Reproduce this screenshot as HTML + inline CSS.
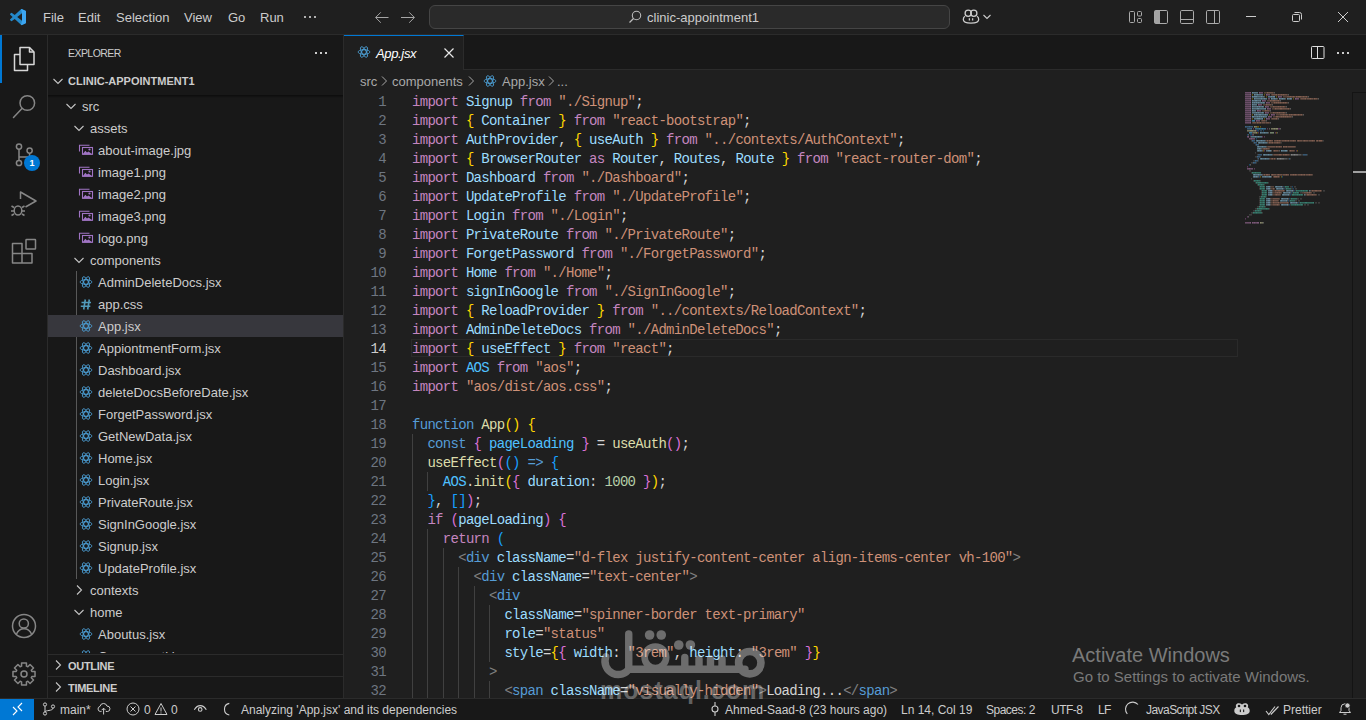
<!DOCTYPE html>
<html><head><meta charset="utf-8">
<style>
*{margin:0;padding:0;box-sizing:border-box}
html,body{width:1366px;height:720px;overflow:hidden;background:#1f1f1f;font-family:"Liberation Sans",sans-serif;color:#ccc;position:relative}
.a{position:absolute}
svg.a{overflow:visible}
#title{left:0;top:0;width:1366px;height:35px;background:#1f1f1f;border-bottom:1px solid #2b2b2b}
.menu{top:9px;font-size:13px;color:#cccccc;line-height:17px}
#act{left:0;top:35px;width:48px;height:663px;background:#181818;border-right:1px solid #2b2b2b}
#side{left:48px;top:35px;width:296px;height:663px;background:#181818;border-right:1px solid #2b2b2b}
#editor{left:344px;top:35px;width:1022px;height:663px;background:#1f1f1f}
#tabs{left:344px;top:35px;width:1022px;height:35px;background:#181818;border-bottom:1px solid #2b2b2b}
#status{left:0;top:698px;width:1366px;height:22px;background:#181818;border-top:1px solid #2b2b2b}
.st{position:absolute;top:699px;height:22px;line-height:22px;font-size:12px;color:#cccccc;white-space:nowrap}
.row{position:absolute;height:22px;font-size:13px;line-height:22px;color:#cccccc;white-space:nowrap}
.code{position:absolute;left:412px;font-family:"Liberation Mono",monospace;font-size:14px;letter-spacing:-0.703px;line-height:19px;white-space:pre;color:#d4d4d4}
.ln{position:absolute;left:343px;width:43px;text-align:right;font-family:"Liberation Mono",monospace;font-size:14px;letter-spacing:-0.703px;line-height:19px;color:#6e7681}
.ln.act{color:#cccccc}
.gd{position:absolute;width:1px;height:19px;background:#404040}
.k{color:#c586c0}.v{color:#9cdcfe}.s{color:#ce9178}.c{color:#4fc1ff}.f{color:#dcdcaa}.b{color:#569cd6}.n{color:#b5cea8}.g{color:#808080}
.y{color:#ffd700}.o{color:#da70d6}.l{color:#179fff}.t{color:#4ec9b0}
</style></head><body>
<div id="title" class="a"></div>
<!-- VS Code logo -->
<svg class="a" style="left:10px;top:9px" width="16" height="16" viewBox="0 0 100 100"><path fill="#2489ca" d="M96.5 10.8 75.9.9a6.2 6.2 0 0 0-7.1 1.2L29.4 38.1 12.2 25.1a4.1 4.1 0 0 0-5.3.2l-5.5 5a4.1 4.1 0 0 0 0 6.1L16.3 50 1.4 63.6a4.1 4.1 0 0 0 0 6.1l5.5 5a4.1 4.1 0 0 0 5.3.2l17.2-13 39.4 36a6.2 6.2 0 0 0 7.1 1.2l20.6-9.9a6.2 6.2 0 0 0 3.5-5.6V16.4a6.2 6.2 0 0 0-3.5-5.6zM75 72.7 45.1 50 75 27.3z"/><path fill="#3fa9f5" d="M75 27.3V72.7L68.8 98.9a6.2 6.2 0 0 0 7.1 1.2l20.6-9.9a6.2 6.2 0 0 0 3.5-5.6V16.4a6.2 6.2 0 0 0-3.5-5.6L75.9.9a6.2 6.2 0 0 0-7.1 1.2z" opacity=".9"/></svg>
<div class="a menu" style="left:43px">File</div>
<div class="a menu" style="left:78px">Edit</div>
<div class="a menu" style="left:116px">Selection</div>
<div class="a menu" style="left:184px">View</div>
<div class="a menu" style="left:228px">Go</div>
<div class="a menu" style="left:260px">Run</div>
<div class="a" style="left:304px;top:16px;width:2px;height:2px;background:#b0b0b0"></div><div class="a" style="left:309px;top:16px;width:2px;height:2px;background:#b0b0b0"></div><div class="a" style="left:314px;top:16px;width:2px;height:2px;background:#b0b0b0"></div>
<!-- nav arrows -->
<svg class="a" style="left:374px;top:10px" width="16" height="16" viewBox="0 0 16 16"><path d="M14.5 7.5H1.8M6.8 2.3 1.6 7.5 6.8 12.7" fill="none" stroke="#a6a6a6" stroke-width="1"/></svg>
<svg class="a" style="left:400px;top:10px" width="16" height="16" viewBox="0 0 16 16"><path d="M1 7.5H14.2M9.2 2.3 14.4 7.5 9.2 12.7" fill="none" stroke="#a6a6a6" stroke-width="1"/></svg>
<!-- command center -->
<div class="a" style="left:429px;top:5px;width:521px;height:24px;border:1px solid #454545;border-radius:6px;background:#2a2a2a"></div>
<svg class="a" style="left:627px;top:9px" width="16" height="16" viewBox="0 0 16 16"><circle cx="9.5" cy="6.5" r="4.2" fill="none" stroke="#bbb" stroke-width="1.1"/><path d="M6.5 9.5 2.5 13.5" stroke="#bbb" stroke-width="1.2"/></svg>
<div class="a" style="left:647px;top:9px;font-size:13px;line-height:17px;color:#cccccc">clinic-appointment1</div>
<!-- copilot -->
<svg class="a" style="left:0;top:0" width="1000" height="30"><g fill="none" stroke="#cccccc" stroke-width="1.3"><circle cx="968.2" cy="13.2" r="3.1"/><circle cx="973.8" cy="13.2" r="3.1"/><path d="M965 16.3C963.8 17 963.3 18.2 963.3 19.6 963.3 22.5 966.5 23.2 971 23.2S978.7 22.5 978.7 19.6C978.7 18.2 978.2 17 977 16.3"/><path d="M969.4 18.2V20.6M972.6 18.2V20.6"/><path d="M983.5 15 987 18.5 990.5 15" stroke-width="1.1"/></g></svg>
<!-- layout icons -->
<svg class="a" style="left:0;top:0" width="1366" height="35"><g fill="none" stroke="#ababab" stroke-width="1"><rect x="1129.5" y="11.5" width="5" height="11" rx="1"/><rect x="1137.5" y="11.5" width="4" height="4.5" rx="1"/><rect x="1137.5" y="18.5" width="4" height="4" rx="1"/>
<rect x="1154.5" y="10.5" width="13" height="13" rx="1.2"/><rect x="1180.5" y="10.5" width="13" height="13" rx="1.2"/><path d="M1180.5 19.5H1193.5"/><rect x="1206.5" y="10.5" width="13" height="13" rx="1.2"/><path d="M1214.5 10.5V23.5"/></g><path d="M1155.7 10.5H1160V23.5H1155.7A1.2 1.2 0 0 1 1154.5 22.3V11.7A1.2 1.2 0 0 1 1155.7 10.5Z" fill="#a3a3a3"/></svg>
<!-- window controls -->
<div class="a" style="left:1246px;top:16px;width:10px;height:1px;background:#cccccc"></div>
<svg class="a" style="left:1291px;top:11px" width="12" height="12" viewBox="0 0 12 12"><g fill="none" stroke="#cccccc" stroke-width="1"><rect x="1.5" y="3.5" width="7" height="7" rx="1"/><path d="M3.5 1.5h5a2 2 0 0 1 2 2v5"/></g></svg>
<svg class="a" style="left:1337px;top:11px" width="12" height="12" viewBox="0 0 12 12"><path d="M1 1 11 11M11 1 1 11" stroke="#cccccc" stroke-width="1"/></svg>

<div id="act" class="a"></div>
<div id="side" class="a"></div>
<div id="editor" class="a"></div>
<div id="tabs" class="a"></div>

<!-- activity bar -->
<div class="a" style="left:0;top:35px;width:2px;height:48px;background:#0078d4"></div>
<svg class="a" style="left:0;top:0" width="48" height="720"><g fill="none" stroke-width="1.5" stroke-linejoin="round">
<g stroke="#d7d7d7"><path d="M20 54.5H14.5V70.5H27.5V64.5"/><path d="M20 47.5H29.5L34 52V64.5H20Z"/><path d="M29.5 47.5V52H34"/></g>
<g stroke="#868686"><circle cx="27.3" cy="103" r="7.3"/><path d="M22 108.5 13.5 117.5" stroke-linecap="round"/>
<circle cx="19" cy="146.6" r="2.6"/><circle cx="19" cy="163" r="2.6"/><circle cx="29.6" cy="150.6" r="2.6"/><path d="M19 149.2V160.4M29.6 153.2V155.5Q29.6 157 28 157H19"/>
<path d="M20.5 199V192L36 201 25.5 207"/><ellipse cx="18" cy="210.5" rx="3.8" ry="4.5"/><path d="M14 207.5 11.5 206M14 211H11M14 214 11.5 215.5M22 207.5 24.5 206M22 211H25M22 214 24.5 215.5"/>
<path d="M12.5 243.5H22V263H12.5ZM12.5 253.5H32V263H22"/><rect x="26" y="239.5" width="9.5" height="9.5" rx="0.5"/>
<circle cx="24" cy="626" r="11.5"/><circle cx="23.8" cy="623.5" r="4.6"/><path d="M16.5 634C18 630.5 20.5 628.8 24 628.8S30 630.5 31.5 634"/>
</g></g></svg>
<div class="a" style="left:24px;top:155px;width:16px;height:16px;border-radius:8px;background:#0078d4;color:#fff;font-size:9px;line-height:16px;text-align:center;font-weight:bold">1</div>
<svg class="a" style="left:0;top:0" width="48" height="720"><g fill="none" stroke="#868686" stroke-width="1.5" stroke-linejoin="round"><path d="M21.58 666.17 L21.53 662.97 L26.47 662.97 L26.42 666.17 L27.83 666.75 L30.05 664.46 L33.54 667.95 L31.25 670.17 L31.83 671.58 L35.03 671.53 L35.03 676.47 L31.83 676.42 L31.25 677.83 L33.54 680.05 L30.05 683.54 L27.83 681.25 L26.42 681.83 L26.47 685.03 L21.53 685.03 L21.58 681.83 L20.17 681.25 L17.95 683.54 L14.46 680.05 L16.75 677.83 L16.17 676.42 L12.97 676.47 L12.97 671.53 L16.17 671.58 L16.75 670.17 L14.46 667.95 L17.95 664.46 L20.17 666.75Z"/><circle cx="24" cy="674" r="3"/></g></svg>

<!-- sidebar -->
<div class="a" style="left:68px;top:47px;font-size:10.5px;line-height:13px;letter-spacing:-0.55px;color:#cccccc">EXPLORER</div>
<div class="a" style="left:315px;top:52px;width:2px;height:2px;background:#cccccc"></div><div class="a" style="left:320px;top:52px;width:2px;height:2px;background:#cccccc"></div><div class="a" style="left:325px;top:52px;width:2px;height:2px;background:#cccccc"></div>
<svg class="a" style="left:50px;top:73px" width="16" height="16" viewBox="0 0 16 16"><path d="M3.5 6 L8 10.5 L12.5 6" fill="none" stroke="#c5c5c5" stroke-width="1.1"/></svg>
<div class="a" style="left:68px;top:74px;font-size:11px;line-height:14px;color:#cccccc;font-weight:bold">CLINIC-APPOINTMENT1</div>
<div class="a" style="left:48px;top:95px;width:295px;height:3px;background:linear-gradient(#0c0c0c,#181818)"></div>
<div class="a" style="left:76px;top:271px;width:1px;height:308px;background:#585858"></div>
<svg class="a" style="left:63px;top:98px" width="16" height="16" viewBox="0 0 16 16"><path d="M3.5 6 L8 10.5 L12.5 6" fill="none" stroke="#c5c5c5" stroke-width="1.1"/></svg>
<div class="row" style="left:82px;top:96px">src</div>
<svg class="a" style="left:71px;top:120px" width="16" height="16" viewBox="0 0 16 16"><path d="M3.5 6 L8 10.5 L12.5 6" fill="none" stroke="#c5c5c5" stroke-width="1.1"/></svg>
<div class="row" style="left:90px;top:118px">assets</div>
<svg class="a" style="left:78px;top:139px" width="16" height="22" viewBox="0 0 16 22"><g fill="none" stroke="#a074c4" stroke-width="1.1"><path d="M1.5 12.5V6.3H11.5"/><rect x="4.5" y="8.5" width="10" height="6.8"/></g><path d="M4.5 15.5 7.3 11.8 9 13.6 10.6 12.4 14.5 15.5Z" fill="#a074c4"/><circle cx="11.5" cy="10.5" r="1.1" fill="#a074c4"/></svg>
<div class="row" style="left:98px;top:140px">about-image.jpg</div>
<svg class="a" style="left:78px;top:161px" width="16" height="22" viewBox="0 0 16 22"><g fill="none" stroke="#a074c4" stroke-width="1.1"><path d="M1.5 12.5V6.3H11.5"/><rect x="4.5" y="8.5" width="10" height="6.8"/></g><path d="M4.5 15.5 7.3 11.8 9 13.6 10.6 12.4 14.5 15.5Z" fill="#a074c4"/><circle cx="11.5" cy="10.5" r="1.1" fill="#a074c4"/></svg>
<div class="row" style="left:98px;top:162px">image1.png</div>
<svg class="a" style="left:78px;top:183px" width="16" height="22" viewBox="0 0 16 22"><g fill="none" stroke="#a074c4" stroke-width="1.1"><path d="M1.5 12.5V6.3H11.5"/><rect x="4.5" y="8.5" width="10" height="6.8"/></g><path d="M4.5 15.5 7.3 11.8 9 13.6 10.6 12.4 14.5 15.5Z" fill="#a074c4"/><circle cx="11.5" cy="10.5" r="1.1" fill="#a074c4"/></svg>
<div class="row" style="left:98px;top:184px">image2.png</div>
<svg class="a" style="left:78px;top:205px" width="16" height="22" viewBox="0 0 16 22"><g fill="none" stroke="#a074c4" stroke-width="1.1"><path d="M1.5 12.5V6.3H11.5"/><rect x="4.5" y="8.5" width="10" height="6.8"/></g><path d="M4.5 15.5 7.3 11.8 9 13.6 10.6 12.4 14.5 15.5Z" fill="#a074c4"/><circle cx="11.5" cy="10.5" r="1.1" fill="#a074c4"/></svg>
<div class="row" style="left:98px;top:206px">image3.png</div>
<svg class="a" style="left:78px;top:227px" width="16" height="22" viewBox="0 0 16 22"><g fill="none" stroke="#a074c4" stroke-width="1.1"><path d="M1.5 12.5V6.3H11.5"/><rect x="4.5" y="8.5" width="10" height="6.8"/></g><path d="M4.5 15.5 7.3 11.8 9 13.6 10.6 12.4 14.5 15.5Z" fill="#a074c4"/><circle cx="11.5" cy="10.5" r="1.1" fill="#a074c4"/></svg>
<div class="row" style="left:98px;top:228px">logo.png</div>
<svg class="a" style="left:71px;top:252px" width="16" height="16" viewBox="0 0 16 16"><path d="M3.5 6 L8 10.5 L12.5 6" fill="none" stroke="#c5c5c5" stroke-width="1.1"/></svg>
<div class="row" style="left:90px;top:250px">components</div>
<svg class="a" style="left:79px;top:275px" width="14" height="14" viewBox="0 0 14 14"><g fill="none" stroke="#4a9bcf" stroke-width="0.85"><ellipse cx="7" cy="7" rx="5.9" ry="2.4"/><ellipse cx="7" cy="7" rx="5.9" ry="2.4" transform="rotate(60 7 7)"/><ellipse cx="7" cy="7" rx="5.9" ry="2.4" transform="rotate(120 7 7)"/><circle cx="7" cy="7" r="2.4"/></g></svg>
<div class="row" style="left:98px;top:272px">AdminDeleteDocs.jsx</div>
<svg class="a" style="left:80px;top:298.5px" width="14" height="14" viewBox="0 0 14 14"><path d="M5.3 0.5 3.7 10.5M9.3 0.5 7.7 10.5M1.5 3.5H11M0.8 7.3H10.3" fill="none" stroke="#519aba" stroke-width="1.6"/></svg>
<div class="row" style="left:98px;top:294px">app.css</div>
<div class="a" style="left:48px;top:315px;width:295px;height:22px;background:#37373d"></div>
<svg class="a" style="left:79px;top:319px" width="14" height="14" viewBox="0 0 14 14"><g fill="none" stroke="#4a9bcf" stroke-width="0.85"><ellipse cx="7" cy="7" rx="5.9" ry="2.4"/><ellipse cx="7" cy="7" rx="5.9" ry="2.4" transform="rotate(60 7 7)"/><ellipse cx="7" cy="7" rx="5.9" ry="2.4" transform="rotate(120 7 7)"/><circle cx="7" cy="7" r="2.4"/></g></svg>
<div class="row" style="left:98px;top:316px">App.jsx</div>
<svg class="a" style="left:79px;top:341px" width="14" height="14" viewBox="0 0 14 14"><g fill="none" stroke="#4a9bcf" stroke-width="0.85"><ellipse cx="7" cy="7" rx="5.9" ry="2.4"/><ellipse cx="7" cy="7" rx="5.9" ry="2.4" transform="rotate(60 7 7)"/><ellipse cx="7" cy="7" rx="5.9" ry="2.4" transform="rotate(120 7 7)"/><circle cx="7" cy="7" r="2.4"/></g></svg>
<div class="row" style="left:98px;top:338px">AppiontmentForm.jsx</div>
<svg class="a" style="left:79px;top:363px" width="14" height="14" viewBox="0 0 14 14"><g fill="none" stroke="#4a9bcf" stroke-width="0.85"><ellipse cx="7" cy="7" rx="5.9" ry="2.4"/><ellipse cx="7" cy="7" rx="5.9" ry="2.4" transform="rotate(60 7 7)"/><ellipse cx="7" cy="7" rx="5.9" ry="2.4" transform="rotate(120 7 7)"/><circle cx="7" cy="7" r="2.4"/></g></svg>
<div class="row" style="left:98px;top:360px">Dashboard.jsx</div>
<svg class="a" style="left:79px;top:385px" width="14" height="14" viewBox="0 0 14 14"><g fill="none" stroke="#4a9bcf" stroke-width="0.85"><ellipse cx="7" cy="7" rx="5.9" ry="2.4"/><ellipse cx="7" cy="7" rx="5.9" ry="2.4" transform="rotate(60 7 7)"/><ellipse cx="7" cy="7" rx="5.9" ry="2.4" transform="rotate(120 7 7)"/><circle cx="7" cy="7" r="2.4"/></g></svg>
<div class="row" style="left:98px;top:382px">deleteDocsBeforeDate.jsx</div>
<svg class="a" style="left:79px;top:407px" width="14" height="14" viewBox="0 0 14 14"><g fill="none" stroke="#4a9bcf" stroke-width="0.85"><ellipse cx="7" cy="7" rx="5.9" ry="2.4"/><ellipse cx="7" cy="7" rx="5.9" ry="2.4" transform="rotate(60 7 7)"/><ellipse cx="7" cy="7" rx="5.9" ry="2.4" transform="rotate(120 7 7)"/><circle cx="7" cy="7" r="2.4"/></g></svg>
<div class="row" style="left:98px;top:404px">ForgetPassword.jsx</div>
<svg class="a" style="left:79px;top:429px" width="14" height="14" viewBox="0 0 14 14"><g fill="none" stroke="#4a9bcf" stroke-width="0.85"><ellipse cx="7" cy="7" rx="5.9" ry="2.4"/><ellipse cx="7" cy="7" rx="5.9" ry="2.4" transform="rotate(60 7 7)"/><ellipse cx="7" cy="7" rx="5.9" ry="2.4" transform="rotate(120 7 7)"/><circle cx="7" cy="7" r="2.4"/></g></svg>
<div class="row" style="left:98px;top:426px">GetNewData.jsx</div>
<svg class="a" style="left:79px;top:451px" width="14" height="14" viewBox="0 0 14 14"><g fill="none" stroke="#4a9bcf" stroke-width="0.85"><ellipse cx="7" cy="7" rx="5.9" ry="2.4"/><ellipse cx="7" cy="7" rx="5.9" ry="2.4" transform="rotate(60 7 7)"/><ellipse cx="7" cy="7" rx="5.9" ry="2.4" transform="rotate(120 7 7)"/><circle cx="7" cy="7" r="2.4"/></g></svg>
<div class="row" style="left:98px;top:448px">Home.jsx</div>
<svg class="a" style="left:79px;top:473px" width="14" height="14" viewBox="0 0 14 14"><g fill="none" stroke="#4a9bcf" stroke-width="0.85"><ellipse cx="7" cy="7" rx="5.9" ry="2.4"/><ellipse cx="7" cy="7" rx="5.9" ry="2.4" transform="rotate(60 7 7)"/><ellipse cx="7" cy="7" rx="5.9" ry="2.4" transform="rotate(120 7 7)"/><circle cx="7" cy="7" r="2.4"/></g></svg>
<div class="row" style="left:98px;top:470px">Login.jsx</div>
<svg class="a" style="left:79px;top:495px" width="14" height="14" viewBox="0 0 14 14"><g fill="none" stroke="#4a9bcf" stroke-width="0.85"><ellipse cx="7" cy="7" rx="5.9" ry="2.4"/><ellipse cx="7" cy="7" rx="5.9" ry="2.4" transform="rotate(60 7 7)"/><ellipse cx="7" cy="7" rx="5.9" ry="2.4" transform="rotate(120 7 7)"/><circle cx="7" cy="7" r="2.4"/></g></svg>
<div class="row" style="left:98px;top:492px">PrivateRoute.jsx</div>
<svg class="a" style="left:79px;top:517px" width="14" height="14" viewBox="0 0 14 14"><g fill="none" stroke="#4a9bcf" stroke-width="0.85"><ellipse cx="7" cy="7" rx="5.9" ry="2.4"/><ellipse cx="7" cy="7" rx="5.9" ry="2.4" transform="rotate(60 7 7)"/><ellipse cx="7" cy="7" rx="5.9" ry="2.4" transform="rotate(120 7 7)"/><circle cx="7" cy="7" r="2.4"/></g></svg>
<div class="row" style="left:98px;top:514px">SignInGoogle.jsx</div>
<svg class="a" style="left:79px;top:539px" width="14" height="14" viewBox="0 0 14 14"><g fill="none" stroke="#4a9bcf" stroke-width="0.85"><ellipse cx="7" cy="7" rx="5.9" ry="2.4"/><ellipse cx="7" cy="7" rx="5.9" ry="2.4" transform="rotate(60 7 7)"/><ellipse cx="7" cy="7" rx="5.9" ry="2.4" transform="rotate(120 7 7)"/><circle cx="7" cy="7" r="2.4"/></g></svg>
<div class="row" style="left:98px;top:536px">Signup.jsx</div>
<svg class="a" style="left:79px;top:561px" width="14" height="14" viewBox="0 0 14 14"><g fill="none" stroke="#4a9bcf" stroke-width="0.85"><ellipse cx="7" cy="7" rx="5.9" ry="2.4"/><ellipse cx="7" cy="7" rx="5.9" ry="2.4" transform="rotate(60 7 7)"/><ellipse cx="7" cy="7" rx="5.9" ry="2.4" transform="rotate(120 7 7)"/><circle cx="7" cy="7" r="2.4"/></g></svg>
<div class="row" style="left:98px;top:558px">UpdateProfile.jsx</div>
<svg class="a" style="left:71px;top:582px" width="16" height="16" viewBox="0 0 16 16"><path d="M6 3.5 L10.5 8 L6 12.5" fill="none" stroke="#c5c5c5" stroke-width="1.1"/></svg>
<div class="row" style="left:90px;top:580px">contexts</div>
<svg class="a" style="left:71px;top:604px" width="16" height="16" viewBox="0 0 16 16"><path d="M3.5 6 L8 10.5 L12.5 6" fill="none" stroke="#c5c5c5" stroke-width="1.1"/></svg>
<div class="row" style="left:90px;top:602px">home</div>
<svg class="a" style="left:79px;top:627px" width="14" height="14" viewBox="0 0 14 14"><g fill="none" stroke="#4a9bcf" stroke-width="0.85"><ellipse cx="7" cy="7" rx="5.9" ry="2.4"/><ellipse cx="7" cy="7" rx="5.9" ry="2.4" transform="rotate(60 7 7)"/><ellipse cx="7" cy="7" rx="5.9" ry="2.4" transform="rotate(120 7 7)"/><circle cx="7" cy="7" r="2.4"/></g></svg>
<div class="row" style="left:98px;top:624px">Aboutus.jsx</div>
<svg class="a" style="left:79px;top:649px" width="14" height="14" viewBox="0 0 14 14"><g fill="none" stroke="#4a9bcf" stroke-width="0.85"><ellipse cx="7" cy="7" rx="5.9" ry="2.4"/><ellipse cx="7" cy="7" rx="5.9" ry="2.4" transform="rotate(60 7 7)"/><ellipse cx="7" cy="7" rx="5.9" ry="2.4" transform="rotate(120 7 7)"/><circle cx="7" cy="7" r="2.4"/></g></svg>
<div class="row" style="left:98px;top:646px">Componenti.jsx</div>
<div class="a" style="left:48px;top:653px;width:295px;height:45px;background:#181818"></div>
<div class="a" style="left:48px;top:654px;width:295px;height:1px;background:#2b2b2b"></div>
<div class="a" style="left:48px;top:676px;width:295px;height:1px;background:#2b2b2b"></div>
<svg class="a" style="left:50px;top:657px" width="16" height="16" viewBox="0 0 16 16"><path d="M6 3.5 L10.5 8 L6 12.5" fill="none" stroke="#c5c5c5" stroke-width="1.1"/></svg>
<div class="a" style="left:68px;top:660px;font-size:11px;line-height:13px;color:#cccccc;font-weight:bold;letter-spacing:-0.3px">OUTLINE</div>
<svg class="a" style="left:50px;top:679px" width="16" height="16" viewBox="0 0 16 16"><path d="M6 3.5 L10.5 8 L6 12.5" fill="none" stroke="#c5c5c5" stroke-width="1.1"/></svg>
<div class="a" style="left:68px;top:682px;font-size:11px;line-height:13px;color:#cccccc;font-weight:bold;letter-spacing:-0.3px">TIMELINE</div>

<!-- tab -->
<div class="a" style="left:344px;top:35px;width:120px;height:35px;background:#1f1f1f;border-top:1px solid #0078d4;border-right:1px solid #2b2b2b"></div>
<svg class="a" style="left:357px;top:45px" width="14" height="14" viewBox="0 0 14 14"><g fill="none" stroke="#4a9bcf" stroke-width="0.85"><ellipse cx="7" cy="7" rx="5.9" ry="2.4"/><ellipse cx="7" cy="7" rx="5.9" ry="2.4" transform="rotate(60 7 7)"/><ellipse cx="7" cy="7" rx="5.9" ry="2.4" transform="rotate(120 7 7)"/><circle cx="7" cy="7" r="2.4"/></g></svg>
<div class="a" style="left:376px;top:45px;font-size:13px;line-height:17px;color:#ffffff;font-style:italic;letter-spacing:-0.35px">App.jsx</div>
<svg class="a" style="left:443px;top:47px" width="12" height="12" viewBox="0 0 12 12"><path d="M1.5 1.5 10.5 10.5M10.5 1.5 1.5 10.5" stroke="#e8e8e8" stroke-width="1.2"/></svg>
<svg class="a" style="left:1310px;top:45px" width="16" height="16" viewBox="0 0 16 16"><g fill="none" stroke="#dddddd" stroke-width="1"><rect x="1.5" y="1.5" width="12.5" height="12" rx="0.8"/><path d="M7.5 1.5v12"/></g></svg>
<div class="a" style="left:1337px;top:52px;width:2px;height:2px;background:#cccccc"></div><div class="a" style="left:1342px;top:52px;width:2px;height:2px;background:#cccccc"></div><div class="a" style="left:1347px;top:52px;width:2px;height:2px;background:#cccccc"></div>

<!-- breadcrumbs -->
<div class="a" style="left:360px;top:73px;font-size:13px;line-height:17px;color:#a9a9a9;white-space:nowrap">src</div>
<svg class="a" style="left:375.5px;top:73px" width="16" height="16" viewBox="0 0 16 16"><path d="M6 3.5 L10.5 8 L6 12.5" fill="none" stroke="#a9a9a9" stroke-width="1"/></svg>
<div class="a" style="left:392px;top:73px;font-size:13px;line-height:17px;color:#a9a9a9;white-space:nowrap">components</div>
<svg class="a" style="left:463px;top:73px" width="16" height="16" viewBox="0 0 16 16"><path d="M6 3.5 L10.5 8 L6 12.5" fill="none" stroke="#a9a9a9" stroke-width="1"/></svg>
<svg class="a" style="left:483px;top:74px" width="14" height="14" viewBox="0 0 14 14"><g fill="none" stroke="#4a9bcf" stroke-width="0.85"><ellipse cx="7" cy="7" rx="5.9" ry="2.4"/><ellipse cx="7" cy="7" rx="5.9" ry="2.4" transform="rotate(60 7 7)"/><ellipse cx="7" cy="7" rx="5.9" ry="2.4" transform="rotate(120 7 7)"/><circle cx="7" cy="7" r="2.4"/></g></svg>
<div class="a" style="left:502px;top:73px;font-size:13px;line-height:17px;color:#a9a9a9;white-space:nowrap">App.jsx</div>
<svg class="a" style="left:543px;top:73px" width="16" height="16" viewBox="0 0 16 16"><path d="M6 3.5 L10.5 8 L6 12.5" fill="none" stroke="#a9a9a9" stroke-width="1"/></svg>
<div class="a" style="left:557px;top:73px;font-size:13px;line-height:17px;color:#a9a9a9;white-space:nowrap">...</div>

<!-- current line -->
<div class="a" style="left:411px;top:339px;width:827px;height:18px;border:1px solid #2a2a2a"></div>
<div class="gd" style="left:412.0px;top:434px"></div>
<div class="gd" style="left:412.0px;top:453px"></div>
<div class="gd" style="left:412.0px;top:472px"></div>
<div class="gd" style="left:427.4px;top:472px"></div>
<div class="gd" style="left:412.0px;top:491px"></div>
<div class="gd" style="left:412.0px;top:510px"></div>
<div class="gd" style="left:412.0px;top:529px"></div>
<div class="gd" style="left:427.4px;top:529px"></div>
<div class="gd" style="left:412.0px;top:548px"></div>
<div class="gd" style="left:427.4px;top:548px"></div>
<div class="gd" style="left:442.8px;top:548px"></div>
<div class="gd" style="left:412.0px;top:567px"></div>
<div class="gd" style="left:427.4px;top:567px"></div>
<div class="gd" style="left:442.8px;top:567px"></div>
<div class="gd" style="left:458.2px;top:567px"></div>
<div class="gd" style="left:412.0px;top:586px"></div>
<div class="gd" style="left:427.4px;top:586px"></div>
<div class="gd" style="left:442.8px;top:586px"></div>
<div class="gd" style="left:458.2px;top:586px"></div>
<div class="gd" style="left:473.6px;top:586px"></div>
<div class="gd" style="left:412.0px;top:605px"></div>
<div class="gd" style="left:427.4px;top:605px"></div>
<div class="gd" style="left:442.8px;top:605px"></div>
<div class="gd" style="left:458.2px;top:605px"></div>
<div class="gd" style="left:473.6px;top:605px"></div>
<div class="gd" style="left:489.0px;top:605px"></div>
<div class="gd" style="left:412.0px;top:624px"></div>
<div class="gd" style="left:427.4px;top:624px"></div>
<div class="gd" style="left:442.8px;top:624px"></div>
<div class="gd" style="left:458.2px;top:624px"></div>
<div class="gd" style="left:473.6px;top:624px"></div>
<div class="gd" style="left:489.0px;top:624px"></div>
<div class="gd" style="left:412.0px;top:643px"></div>
<div class="gd" style="left:427.4px;top:643px"></div>
<div class="gd" style="left:442.8px;top:643px"></div>
<div class="gd" style="left:458.2px;top:643px"></div>
<div class="gd" style="left:473.6px;top:643px"></div>
<div class="gd" style="left:489.0px;top:643px"></div>
<div class="gd" style="left:412.0px;top:662px"></div>
<div class="gd" style="left:427.4px;top:662px"></div>
<div class="gd" style="left:442.8px;top:662px"></div>
<div class="gd" style="left:458.2px;top:662px"></div>
<div class="gd" style="left:473.6px;top:662px"></div>
<div class="gd" style="left:412.0px;top:681px"></div>
<div class="gd" style="left:427.4px;top:681px"></div>
<div class="gd" style="left:442.8px;top:681px"></div>
<div class="gd" style="left:458.2px;top:681px"></div>
<div class="gd" style="left:473.6px;top:681px"></div>
<div class="gd" style="left:489.0px;top:681px"></div>
<div class="code" style="top:93px"><span class="k">import</span> <span class="v">Signup</span> <span class="k">from</span> <span class="s">"./Signup"</span>;</div>
<div class="ln" style="top:93px">1</div>
<div class="code" style="top:112px"><span class="k">import</span> <span class="y">{</span> <span class="v">Container</span> <span class="y">}</span> <span class="k">from</span> <span class="s">"react-bootstrap"</span>;</div>
<div class="ln" style="top:112px">2</div>
<div class="code" style="top:131px"><span class="k">import</span> <span class="v">AuthProvider</span>, <span class="y">{</span> <span class="v">useAuth</span> <span class="y">}</span> <span class="k">from</span> <span class="s">"../contexts/AuthContext"</span>;</div>
<div class="ln" style="top:131px">3</div>
<div class="code" style="top:150px"><span class="k">import</span> <span class="y">{</span> <span class="v">BrowserRouter</span> <span class="k">as</span> <span class="v">Router</span>, <span class="v">Routes</span>, <span class="v">Route</span> <span class="y">}</span> <span class="k">from</span> <span class="s">"react-router-dom"</span>;</div>
<div class="ln" style="top:150px">4</div>
<div class="code" style="top:169px"><span class="k">import</span> <span class="v">Dashboard</span> <span class="k">from</span> <span class="s">"./Dashboard"</span>;</div>
<div class="ln" style="top:169px">5</div>
<div class="code" style="top:188px"><span class="k">import</span> <span class="v">UpdateProfile</span> <span class="k">from</span> <span class="s">"./UpdateProfile"</span>;</div>
<div class="ln" style="top:188px">6</div>
<div class="code" style="top:207px"><span class="k">import</span> <span class="v">Login</span> <span class="k">from</span> <span class="s">"./Login"</span>;</div>
<div class="ln" style="top:207px">7</div>
<div class="code" style="top:226px"><span class="k">import</span> <span class="v">PrivateRoute</span> <span class="k">from</span> <span class="s">"./PrivateRoute"</span>;</div>
<div class="ln" style="top:226px">8</div>
<div class="code" style="top:245px"><span class="k">import</span> <span class="v">ForgetPassword</span> <span class="k">from</span> <span class="s">"./ForgetPassword"</span>;</div>
<div class="ln" style="top:245px">9</div>
<div class="code" style="top:264px"><span class="k">import</span> <span class="v">Home</span> <span class="k">from</span> <span class="s">"./Home"</span>;</div>
<div class="ln" style="top:264px">10</div>
<div class="code" style="top:283px"><span class="k">import</span> <span class="v">signInGoogle</span> <span class="k">from</span> <span class="s">"./SignInGoogle"</span>;</div>
<div class="ln" style="top:283px">11</div>
<div class="code" style="top:302px"><span class="k">import</span> <span class="y">{</span> <span class="v">ReloadProvider</span> <span class="y">}</span> <span class="k">from</span> <span class="s">"../contexts/ReloadContext"</span>;</div>
<div class="ln" style="top:302px">12</div>
<div class="code" style="top:321px"><span class="k">import</span> <span class="v">AdminDeleteDocs</span> <span class="k">from</span> <span class="s">"./AdminDeleteDocs"</span>;</div>
<div class="ln" style="top:321px">13</div>
<div class="code" style="top:340px"><span class="k">import</span> <span class="y">{</span> <span class="v">useEffect</span> <span class="y">}</span> <span class="k">from</span> <span class="s">"react"</span>;</div>
<div class="ln act" style="top:340px">14</div>
<div class="code" style="top:359px"><span class="k">import</span> <span class="c">AOS</span> <span class="k">from</span> <span class="s">"aos"</span>;</div>
<div class="ln" style="top:359px">15</div>
<div class="code" style="top:378px"><span class="k">import</span> <span class="s">"aos/dist/aos.css"</span>;</div>
<div class="ln" style="top:378px">16</div>
<div class="code" style="top:397px"></div>
<div class="ln" style="top:397px">17</div>
<div class="code" style="top:416px"><span class="b">function</span> <span class="f">App</span><span class="y">()</span> <span class="y">{</span></div>
<div class="ln" style="top:416px">18</div>
<div class="code" style="top:435px">  <span class="b">const</span> <span class="o">{</span> <span class="c">pageLoading</span> <span class="o">}</span> = <span class="f">useAuth</span><span class="o">()</span>;</div>
<div class="ln" style="top:435px">19</div>
<div class="code" style="top:454px">  <span class="f">useEffect</span><span class="o">(</span><span class="l">()</span> <span class="b">=&gt;</span> <span class="l">{</span></div>
<div class="ln" style="top:454px">20</div>
<div class="code" style="top:473px">    <span class="c">AOS</span>.<span class="f">init</span><span class="y">(</span><span class="o">{</span> <span class="v">duration</span>: <span class="n">1000</span> <span class="o">}</span><span class="y">)</span>;</div>
<div class="ln" style="top:473px">21</div>
<div class="code" style="top:492px">  <span class="l">}</span>, <span class="l">[]</span><span class="o">)</span>;</div>
<div class="ln" style="top:492px">22</div>
<div class="code" style="top:511px">  <span class="k">if</span> <span class="o">(</span><span class="v">pageLoading</span><span class="o">)</span> <span class="o">{</span></div>
<div class="ln" style="top:511px">23</div>
<div class="code" style="top:530px">    <span class="k">return</span> <span class="l">(</span></div>
<div class="ln" style="top:530px">24</div>
<div class="code" style="top:549px">      <span class="g">&lt;</span><span class="b">div</span> <span class="v">className</span>=<span class="s">"d-flex justify-content-center align-items-center vh-100"</span><span class="g">&gt;</span></div>
<div class="ln" style="top:549px">25</div>
<div class="code" style="top:568px">        <span class="g">&lt;</span><span class="b">div</span> <span class="v">className</span>=<span class="s">"text-center"</span><span class="g">&gt;</span></div>
<div class="ln" style="top:568px">26</div>
<div class="code" style="top:587px">          <span class="g">&lt;</span><span class="b">div</span></div>
<div class="ln" style="top:587px">27</div>
<div class="code" style="top:606px">            <span class="v">className</span>=<span class="s">"spinner-border text-primary"</span></div>
<div class="ln" style="top:606px">28</div>
<div class="code" style="top:625px">            <span class="v">role</span>=<span class="s">"status"</span></div>
<div class="ln" style="top:625px">29</div>
<div class="code" style="top:644px">            <span class="v">style</span>=<span class="y">{</span><span class="o">{</span> <span class="v">width</span>: <span class="s">"3rem"</span>, <span class="v">height</span>: <span class="s">"3rem"</span> <span class="o">}</span><span class="y">}</span></div>
<div class="ln" style="top:644px">30</div>
<div class="code" style="top:663px">          <span class="g">&gt;</span></div>
<div class="ln" style="top:663px">31</div>
<div class="code" style="top:682px">            <span class="g">&lt;</span><span class="b">span</span> <span class="v">className</span>=<span class="s">"visually-hidden"</span><span class="g">&gt;</span>Loading...<span class="g">&lt;/</span><span class="b">span</span><span class="g">&gt;</span></div>
<div class="ln" style="top:682px">32</div>
<svg class="a" style="left:1245px;top:92px" width="100" height="140" shape-rendering="crispEdges"><defs><pattern id="mmp" width="4" height="2" patternUnits="userSpaceOnUse"><rect width="4" height="1" fill="#fff"/><rect y="1" width="4" height="1" fill="#999"/></pattern><mask id="mmm"><rect width="100" height="140" fill="url(#mmp)"/></mask></defs><g mask="url(#mmm)" opacity=".9"><rect x="0" y="0" width="1" height="2" fill="#c586c0" fill-opacity="0.5"/><rect x="1" y="0" width="1" height="2" fill="#c586c0" fill-opacity="0.5"/><rect x="2" y="0" width="1" height="2" fill="#c586c0" fill-opacity="0.5"/><rect x="3" y="0" width="1" height="2" fill="#c586c0" fill-opacity="0.5"/><rect x="4" y="0" width="1" height="2" fill="#c586c0" fill-opacity="0.5"/><rect x="5" y="0" width="1" height="2" fill="#c586c0" fill-opacity="0.62"/><rect x="7" y="0" width="1" height="2" fill="#9cdcfe" fill-opacity="0.62"/><rect x="8" y="0" width="1" height="2" fill="#9cdcfe" fill-opacity="0.5"/><rect x="9" y="0" width="1" height="2" fill="#9cdcfe" fill-opacity="0.5"/><rect x="10" y="0" width="1" height="2" fill="#9cdcfe" fill-opacity="0.5"/><rect x="11" y="0" width="1" height="2" fill="#9cdcfe" fill-opacity="0.5"/><rect x="12" y="0" width="1" height="2" fill="#9cdcfe" fill-opacity="0.5"/><rect x="14" y="0" width="1" height="2" fill="#c586c0" fill-opacity="0.62"/><rect x="15" y="0" width="1" height="2" fill="#c586c0" fill-opacity="0.5"/><rect x="16" y="0" width="1" height="2" fill="#c586c0" fill-opacity="0.5"/><rect x="17" y="0" width="1" height="2" fill="#c586c0" fill-opacity="0.5"/><rect x="19" y="0" width="1" height="2" fill="#ce9178" fill-opacity="0.35"/><rect x="20" y="0" width="1" height="2" fill="#ce9178" fill-opacity="0.35"/><rect x="21" y="0" width="1" height="2" fill="#ce9178" fill-opacity="0.35"/><rect x="22" y="0" width="1" height="2" fill="#ce9178" fill-opacity="0.62"/><rect x="23" y="0" width="1" height="2" fill="#ce9178" fill-opacity="0.5"/><rect x="24" y="0" width="1" height="2" fill="#ce9178" fill-opacity="0.5"/><rect x="25" y="0" width="1" height="2" fill="#ce9178" fill-opacity="0.5"/><rect x="26" y="0" width="1" height="2" fill="#ce9178" fill-opacity="0.5"/><rect x="27" y="0" width="1" height="2" fill="#ce9178" fill-opacity="0.5"/><rect x="28" y="0" width="1" height="2" fill="#ce9178" fill-opacity="0.35"/><rect x="29" y="0" width="1" height="2" fill="#d4d4d4" fill-opacity="0.35"/><rect x="0" y="2" width="1" height="2" fill="#c586c0" fill-opacity="0.5"/><rect x="1" y="2" width="1" height="2" fill="#c586c0" fill-opacity="0.5"/><rect x="2" y="2" width="1" height="2" fill="#c586c0" fill-opacity="0.5"/><rect x="3" y="2" width="1" height="2" fill="#c586c0" fill-opacity="0.5"/><rect x="4" y="2" width="1" height="2" fill="#c586c0" fill-opacity="0.5"/><rect x="5" y="2" width="1" height="2" fill="#c586c0" fill-opacity="0.62"/><rect x="7" y="2" width="1" height="2" fill="#ffd700" fill-opacity="0.35"/><rect x="9" y="2" width="1" height="2" fill="#9cdcfe" fill-opacity="0.62"/><rect x="10" y="2" width="1" height="2" fill="#9cdcfe" fill-opacity="0.5"/><rect x="11" y="2" width="1" height="2" fill="#9cdcfe" fill-opacity="0.5"/><rect x="12" y="2" width="1" height="2" fill="#9cdcfe" fill-opacity="0.62"/><rect x="13" y="2" width="1" height="2" fill="#9cdcfe" fill-opacity="0.5"/><rect x="14" y="2" width="1" height="2" fill="#9cdcfe" fill-opacity="0.5"/><rect x="15" y="2" width="1" height="2" fill="#9cdcfe" fill-opacity="0.5"/><rect x="16" y="2" width="1" height="2" fill="#9cdcfe" fill-opacity="0.5"/><rect x="17" y="2" width="1" height="2" fill="#9cdcfe" fill-opacity="0.5"/><rect x="19" y="2" width="1" height="2" fill="#ffd700" fill-opacity="0.35"/><rect x="21" y="2" width="1" height="2" fill="#c586c0" fill-opacity="0.62"/><rect x="22" y="2" width="1" height="2" fill="#c586c0" fill-opacity="0.5"/><rect x="23" y="2" width="1" height="2" fill="#c586c0" fill-opacity="0.5"/><rect x="24" y="2" width="1" height="2" fill="#c586c0" fill-opacity="0.5"/><rect x="26" y="2" width="1" height="2" fill="#ce9178" fill-opacity="0.35"/><rect x="27" y="2" width="1" height="2" fill="#ce9178" fill-opacity="0.5"/><rect x="28" y="2" width="1" height="2" fill="#ce9178" fill-opacity="0.5"/><rect x="29" y="2" width="1" height="2" fill="#ce9178" fill-opacity="0.5"/><rect x="30" y="2" width="1" height="2" fill="#ce9178" fill-opacity="0.5"/><rect x="31" y="2" width="1" height="2" fill="#ce9178" fill-opacity="0.62"/><rect x="32" y="2" width="1" height="2" fill="#ce9178" fill-opacity="0.35"/><rect x="33" y="2" width="1" height="2" fill="#ce9178" fill-opacity="0.62"/><rect x="34" y="2" width="1" height="2" fill="#ce9178" fill-opacity="0.5"/><rect x="35" y="2" width="1" height="2" fill="#ce9178" fill-opacity="0.5"/><rect x="36" y="2" width="1" height="2" fill="#ce9178" fill-opacity="0.62"/><rect x="37" y="2" width="1" height="2" fill="#ce9178" fill-opacity="0.5"/><rect x="38" y="2" width="1" height="2" fill="#ce9178" fill-opacity="0.62"/><rect x="39" y="2" width="1" height="2" fill="#ce9178" fill-opacity="0.5"/><rect x="40" y="2" width="1" height="2" fill="#ce9178" fill-opacity="0.5"/><rect x="41" y="2" width="1" height="2" fill="#ce9178" fill-opacity="0.5"/><rect x="42" y="2" width="1" height="2" fill="#ce9178" fill-opacity="0.35"/><rect x="43" y="2" width="1" height="2" fill="#d4d4d4" fill-opacity="0.35"/><rect x="0" y="4" width="1" height="2" fill="#c586c0" fill-opacity="0.5"/><rect x="1" y="4" width="1" height="2" fill="#c586c0" fill-opacity="0.5"/><rect x="2" y="4" width="1" height="2" fill="#c586c0" fill-opacity="0.5"/><rect x="3" y="4" width="1" height="2" fill="#c586c0" fill-opacity="0.5"/><rect x="4" y="4" width="1" height="2" fill="#c586c0" fill-opacity="0.5"/><rect x="5" y="4" width="1" height="2" fill="#c586c0" fill-opacity="0.62"/><rect x="7" y="4" width="1" height="2" fill="#9cdcfe" fill-opacity="0.62"/><rect x="8" y="4" width="1" height="2" fill="#9cdcfe" fill-opacity="0.5"/><rect x="9" y="4" width="1" height="2" fill="#9cdcfe" fill-opacity="0.62"/><rect x="10" y="4" width="1" height="2" fill="#9cdcfe" fill-opacity="0.62"/><rect x="11" y="4" width="1" height="2" fill="#9cdcfe" fill-opacity="0.62"/><rect x="12" y="4" width="1" height="2" fill="#9cdcfe" fill-opacity="0.5"/><rect x="13" y="4" width="1" height="2" fill="#9cdcfe" fill-opacity="0.5"/><rect x="14" y="4" width="1" height="2" fill="#9cdcfe" fill-opacity="0.5"/><rect x="15" y="4" width="1" height="2" fill="#9cdcfe" fill-opacity="0.5"/><rect x="16" y="4" width="1" height="2" fill="#9cdcfe" fill-opacity="0.62"/><rect x="17" y="4" width="1" height="2" fill="#9cdcfe" fill-opacity="0.5"/><rect x="18" y="4" width="1" height="2" fill="#9cdcfe" fill-opacity="0.5"/><rect x="19" y="4" width="1" height="2" fill="#d4d4d4" fill-opacity="0.35"/><rect x="21" y="4" width="1" height="2" fill="#ffd700" fill-opacity="0.35"/><rect x="23" y="4" width="1" height="2" fill="#9cdcfe" fill-opacity="0.5"/><rect x="24" y="4" width="1" height="2" fill="#9cdcfe" fill-opacity="0.5"/><rect x="25" y="4" width="1" height="2" fill="#9cdcfe" fill-opacity="0.5"/><rect x="26" y="4" width="1" height="2" fill="#9cdcfe" fill-opacity="0.62"/><rect x="27" y="4" width="1" height="2" fill="#9cdcfe" fill-opacity="0.5"/><rect x="28" y="4" width="1" height="2" fill="#9cdcfe" fill-opacity="0.62"/><rect x="29" y="4" width="1" height="2" fill="#9cdcfe" fill-opacity="0.62"/><rect x="31" y="4" width="1" height="2" fill="#ffd700" fill-opacity="0.35"/><rect x="33" y="4" width="1" height="2" fill="#c586c0" fill-opacity="0.62"/><rect x="34" y="4" width="1" height="2" fill="#c586c0" fill-opacity="0.5"/><rect x="35" y="4" width="1" height="2" fill="#c586c0" fill-opacity="0.5"/><rect x="36" y="4" width="1" height="2" fill="#c586c0" fill-opacity="0.5"/><rect x="38" y="4" width="1" height="2" fill="#ce9178" fill-opacity="0.35"/><rect x="39" y="4" width="1" height="2" fill="#ce9178" fill-opacity="0.35"/><rect x="40" y="4" width="1" height="2" fill="#ce9178" fill-opacity="0.35"/><rect x="41" y="4" width="1" height="2" fill="#ce9178" fill-opacity="0.35"/><rect x="42" y="4" width="1" height="2" fill="#ce9178" fill-opacity="0.5"/><rect x="43" y="4" width="1" height="2" fill="#ce9178" fill-opacity="0.5"/><rect x="44" y="4" width="1" height="2" fill="#ce9178" fill-opacity="0.5"/><rect x="45" y="4" width="1" height="2" fill="#ce9178" fill-opacity="0.62"/><rect x="46" y="4" width="1" height="2" fill="#ce9178" fill-opacity="0.5"/><rect x="47" y="4" width="1" height="2" fill="#ce9178" fill-opacity="0.5"/><rect x="48" y="4" width="1" height="2" fill="#ce9178" fill-opacity="0.62"/><rect x="49" y="4" width="1" height="2" fill="#ce9178" fill-opacity="0.5"/><rect x="50" y="4" width="1" height="2" fill="#ce9178" fill-opacity="0.35"/><rect x="51" y="4" width="1" height="2" fill="#ce9178" fill-opacity="0.62"/><rect x="52" y="4" width="1" height="2" fill="#ce9178" fill-opacity="0.5"/><rect x="53" y="4" width="1" height="2" fill="#ce9178" fill-opacity="0.62"/><rect x="54" y="4" width="1" height="2" fill="#ce9178" fill-opacity="0.62"/><rect x="55" y="4" width="1" height="2" fill="#ce9178" fill-opacity="0.62"/><rect x="56" y="4" width="1" height="2" fill="#ce9178" fill-opacity="0.5"/><rect x="57" y="4" width="1" height="2" fill="#ce9178" fill-opacity="0.5"/><rect x="58" y="4" width="1" height="2" fill="#ce9178" fill-opacity="0.62"/><rect x="59" y="4" width="1" height="2" fill="#ce9178" fill-opacity="0.5"/><rect x="60" y="4" width="1" height="2" fill="#ce9178" fill-opacity="0.5"/><rect x="61" y="4" width="1" height="2" fill="#ce9178" fill-opacity="0.62"/><rect x="62" y="4" width="1" height="2" fill="#ce9178" fill-opacity="0.35"/><rect x="63" y="4" width="1" height="2" fill="#d4d4d4" fill-opacity="0.35"/><rect x="0" y="6" width="1" height="2" fill="#c586c0" fill-opacity="0.5"/><rect x="1" y="6" width="1" height="2" fill="#c586c0" fill-opacity="0.5"/><rect x="2" y="6" width="1" height="2" fill="#c586c0" fill-opacity="0.5"/><rect x="3" y="6" width="1" height="2" fill="#c586c0" fill-opacity="0.5"/><rect x="4" y="6" width="1" height="2" fill="#c586c0" fill-opacity="0.5"/><rect x="5" y="6" width="1" height="2" fill="#c586c0" fill-opacity="0.62"/><rect x="7" y="6" width="1" height="2" fill="#ffd700" fill-opacity="0.35"/><rect x="9" y="6" width="1" height="2" fill="#9cdcfe" fill-opacity="0.62"/><rect x="10" y="6" width="1" height="2" fill="#9cdcfe" fill-opacity="0.5"/><rect x="11" y="6" width="1" height="2" fill="#9cdcfe" fill-opacity="0.5"/><rect x="12" y="6" width="1" height="2" fill="#9cdcfe" fill-opacity="0.5"/><rect x="13" y="6" width="1" height="2" fill="#9cdcfe" fill-opacity="0.5"/><rect x="14" y="6" width="1" height="2" fill="#9cdcfe" fill-opacity="0.5"/><rect x="15" y="6" width="1" height="2" fill="#9cdcfe" fill-opacity="0.5"/><rect x="16" y="6" width="1" height="2" fill="#9cdcfe" fill-opacity="0.62"/><rect x="17" y="6" width="1" height="2" fill="#9cdcfe" fill-opacity="0.5"/><rect x="18" y="6" width="1" height="2" fill="#9cdcfe" fill-opacity="0.5"/><rect x="19" y="6" width="1" height="2" fill="#9cdcfe" fill-opacity="0.62"/><rect x="20" y="6" width="1" height="2" fill="#9cdcfe" fill-opacity="0.5"/><rect x="21" y="6" width="1" height="2" fill="#9cdcfe" fill-opacity="0.5"/><rect x="23" y="6" width="1" height="2" fill="#c586c0" fill-opacity="0.5"/><rect x="24" y="6" width="1" height="2" fill="#c586c0" fill-opacity="0.5"/><rect x="26" y="6" width="1" height="2" fill="#9cdcfe" fill-opacity="0.62"/><rect x="27" y="6" width="1" height="2" fill="#9cdcfe" fill-opacity="0.5"/><rect x="28" y="6" width="1" height="2" fill="#9cdcfe" fill-opacity="0.5"/><rect x="29" y="6" width="1" height="2" fill="#9cdcfe" fill-opacity="0.62"/><rect x="30" y="6" width="1" height="2" fill="#9cdcfe" fill-opacity="0.5"/><rect x="31" y="6" width="1" height="2" fill="#9cdcfe" fill-opacity="0.5"/><rect x="32" y="6" width="1" height="2" fill="#d4d4d4" fill-opacity="0.35"/><rect x="34" y="6" width="1" height="2" fill="#9cdcfe" fill-opacity="0.62"/><rect x="35" y="6" width="1" height="2" fill="#9cdcfe" fill-opacity="0.5"/><rect x="36" y="6" width="1" height="2" fill="#9cdcfe" fill-opacity="0.5"/><rect x="37" y="6" width="1" height="2" fill="#9cdcfe" fill-opacity="0.62"/><rect x="38" y="6" width="1" height="2" fill="#9cdcfe" fill-opacity="0.5"/><rect x="39" y="6" width="1" height="2" fill="#9cdcfe" fill-opacity="0.5"/><rect x="40" y="6" width="1" height="2" fill="#d4d4d4" fill-opacity="0.35"/><rect x="42" y="6" width="1" height="2" fill="#9cdcfe" fill-opacity="0.62"/><rect x="43" y="6" width="1" height="2" fill="#9cdcfe" fill-opacity="0.5"/><rect x="44" y="6" width="1" height="2" fill="#9cdcfe" fill-opacity="0.5"/><rect x="45" y="6" width="1" height="2" fill="#9cdcfe" fill-opacity="0.62"/><rect x="46" y="6" width="1" height="2" fill="#9cdcfe" fill-opacity="0.5"/><rect x="48" y="6" width="1" height="2" fill="#ffd700" fill-opacity="0.35"/><rect x="50" y="6" width="1" height="2" fill="#c586c0" fill-opacity="0.62"/><rect x="51" y="6" width="1" height="2" fill="#c586c0" fill-opacity="0.5"/><rect x="52" y="6" width="1" height="2" fill="#c586c0" fill-opacity="0.5"/><rect x="53" y="6" width="1" height="2" fill="#c586c0" fill-opacity="0.5"/><rect x="55" y="6" width="1" height="2" fill="#ce9178" fill-opacity="0.35"/><rect x="56" y="6" width="1" height="2" fill="#ce9178" fill-opacity="0.5"/><rect x="57" y="6" width="1" height="2" fill="#ce9178" fill-opacity="0.5"/><rect x="58" y="6" width="1" height="2" fill="#ce9178" fill-opacity="0.5"/><rect x="59" y="6" width="1" height="2" fill="#ce9178" fill-opacity="0.5"/><rect x="60" y="6" width="1" height="2" fill="#ce9178" fill-opacity="0.62"/><rect x="61" y="6" width="1" height="2" fill="#ce9178" fill-opacity="0.35"/><rect x="62" y="6" width="1" height="2" fill="#ce9178" fill-opacity="0.5"/><rect x="63" y="6" width="1" height="2" fill="#ce9178" fill-opacity="0.5"/><rect x="64" y="6" width="1" height="2" fill="#ce9178" fill-opacity="0.5"/><rect x="65" y="6" width="1" height="2" fill="#ce9178" fill-opacity="0.62"/><rect x="66" y="6" width="1" height="2" fill="#ce9178" fill-opacity="0.5"/><rect x="67" y="6" width="1" height="2" fill="#ce9178" fill-opacity="0.5"/><rect x="68" y="6" width="1" height="2" fill="#ce9178" fill-opacity="0.35"/><rect x="69" y="6" width="1" height="2" fill="#ce9178" fill-opacity="0.62"/><rect x="70" y="6" width="1" height="2" fill="#ce9178" fill-opacity="0.5"/><rect x="71" y="6" width="1" height="2" fill="#ce9178" fill-opacity="0.5"/><rect x="72" y="6" width="1" height="2" fill="#ce9178" fill-opacity="0.35"/><rect x="73" y="6" width="1" height="2" fill="#d4d4d4" fill-opacity="0.35"/><rect x="0" y="8" width="1" height="2" fill="#c586c0" fill-opacity="0.5"/><rect x="1" y="8" width="1" height="2" fill="#c586c0" fill-opacity="0.5"/><rect x="2" y="8" width="1" height="2" fill="#c586c0" fill-opacity="0.5"/><rect x="3" y="8" width="1" height="2" fill="#c586c0" fill-opacity="0.5"/><rect x="4" y="8" width="1" height="2" fill="#c586c0" fill-opacity="0.5"/><rect x="5" y="8" width="1" height="2" fill="#c586c0" fill-opacity="0.62"/><rect x="7" y="8" width="1" height="2" fill="#9cdcfe" fill-opacity="0.62"/><rect x="8" y="8" width="1" height="2" fill="#9cdcfe" fill-opacity="0.5"/><rect x="9" y="8" width="1" height="2" fill="#9cdcfe" fill-opacity="0.5"/><rect x="10" y="8" width="1" height="2" fill="#9cdcfe" fill-opacity="0.62"/><rect x="11" y="8" width="1" height="2" fill="#9cdcfe" fill-opacity="0.62"/><rect x="12" y="8" width="1" height="2" fill="#9cdcfe" fill-opacity="0.5"/><rect x="13" y="8" width="1" height="2" fill="#9cdcfe" fill-opacity="0.5"/><rect x="14" y="8" width="1" height="2" fill="#9cdcfe" fill-opacity="0.5"/><rect x="15" y="8" width="1" height="2" fill="#9cdcfe" fill-opacity="0.62"/><rect x="17" y="8" width="1" height="2" fill="#c586c0" fill-opacity="0.62"/><rect x="18" y="8" width="1" height="2" fill="#c586c0" fill-opacity="0.5"/><rect x="19" y="8" width="1" height="2" fill="#c586c0" fill-opacity="0.5"/><rect x="20" y="8" width="1" height="2" fill="#c586c0" fill-opacity="0.5"/><rect x="22" y="8" width="1" height="2" fill="#ce9178" fill-opacity="0.35"/><rect x="23" y="8" width="1" height="2" fill="#ce9178" fill-opacity="0.35"/><rect x="24" y="8" width="1" height="2" fill="#ce9178" fill-opacity="0.35"/><rect x="25" y="8" width="1" height="2" fill="#ce9178" fill-opacity="0.62"/><rect x="26" y="8" width="1" height="2" fill="#ce9178" fill-opacity="0.5"/><rect x="27" y="8" width="1" height="2" fill="#ce9178" fill-opacity="0.5"/><rect x="28" y="8" width="1" height="2" fill="#ce9178" fill-opacity="0.62"/><rect x="29" y="8" width="1" height="2" fill="#ce9178" fill-opacity="0.62"/><rect x="30" y="8" width="1" height="2" fill="#ce9178" fill-opacity="0.5"/><rect x="31" y="8" width="1" height="2" fill="#ce9178" fill-opacity="0.5"/><rect x="32" y="8" width="1" height="2" fill="#ce9178" fill-opacity="0.5"/><rect x="33" y="8" width="1" height="2" fill="#ce9178" fill-opacity="0.62"/><rect x="34" y="8" width="1" height="2" fill="#ce9178" fill-opacity="0.35"/><rect x="35" y="8" width="1" height="2" fill="#d4d4d4" fill-opacity="0.35"/><rect x="0" y="10" width="1" height="2" fill="#c586c0" fill-opacity="0.5"/><rect x="1" y="10" width="1" height="2" fill="#c586c0" fill-opacity="0.5"/><rect x="2" y="10" width="1" height="2" fill="#c586c0" fill-opacity="0.5"/><rect x="3" y="10" width="1" height="2" fill="#c586c0" fill-opacity="0.5"/><rect x="4" y="10" width="1" height="2" fill="#c586c0" fill-opacity="0.5"/><rect x="5" y="10" width="1" height="2" fill="#c586c0" fill-opacity="0.62"/><rect x="7" y="10" width="1" height="2" fill="#9cdcfe" fill-opacity="0.62"/><rect x="8" y="10" width="1" height="2" fill="#9cdcfe" fill-opacity="0.5"/><rect x="9" y="10" width="1" height="2" fill="#9cdcfe" fill-opacity="0.62"/><rect x="10" y="10" width="1" height="2" fill="#9cdcfe" fill-opacity="0.5"/><rect x="11" y="10" width="1" height="2" fill="#9cdcfe" fill-opacity="0.62"/><rect x="12" y="10" width="1" height="2" fill="#9cdcfe" fill-opacity="0.5"/><rect x="13" y="10" width="1" height="2" fill="#9cdcfe" fill-opacity="0.62"/><rect x="14" y="10" width="1" height="2" fill="#9cdcfe" fill-opacity="0.5"/><rect x="15" y="10" width="1" height="2" fill="#9cdcfe" fill-opacity="0.5"/><rect x="16" y="10" width="1" height="2" fill="#9cdcfe" fill-opacity="0.62"/><rect x="17" y="10" width="1" height="2" fill="#9cdcfe" fill-opacity="0.5"/><rect x="18" y="10" width="1" height="2" fill="#9cdcfe" fill-opacity="0.62"/><rect x="19" y="10" width="1" height="2" fill="#9cdcfe" fill-opacity="0.5"/><rect x="21" y="10" width="1" height="2" fill="#c586c0" fill-opacity="0.62"/><rect x="22" y="10" width="1" height="2" fill="#c586c0" fill-opacity="0.5"/><rect x="23" y="10" width="1" height="2" fill="#c586c0" fill-opacity="0.5"/><rect x="24" y="10" width="1" height="2" fill="#c586c0" fill-opacity="0.5"/><rect x="26" y="10" width="1" height="2" fill="#ce9178" fill-opacity="0.35"/><rect x="27" y="10" width="1" height="2" fill="#ce9178" fill-opacity="0.35"/><rect x="28" y="10" width="1" height="2" fill="#ce9178" fill-opacity="0.35"/><rect x="29" y="10" width="1" height="2" fill="#ce9178" fill-opacity="0.62"/><rect x="30" y="10" width="1" height="2" fill="#ce9178" fill-opacity="0.5"/><rect x="31" y="10" width="1" height="2" fill="#ce9178" fill-opacity="0.62"/><rect x="32" y="10" width="1" height="2" fill="#ce9178" fill-opacity="0.5"/><rect x="33" y="10" width="1" height="2" fill="#ce9178" fill-opacity="0.62"/><rect x="34" y="10" width="1" height="2" fill="#ce9178" fill-opacity="0.5"/><rect x="35" y="10" width="1" height="2" fill="#ce9178" fill-opacity="0.62"/><rect x="36" y="10" width="1" height="2" fill="#ce9178" fill-opacity="0.5"/><rect x="37" y="10" width="1" height="2" fill="#ce9178" fill-opacity="0.5"/><rect x="38" y="10" width="1" height="2" fill="#ce9178" fill-opacity="0.62"/><rect x="39" y="10" width="1" height="2" fill="#ce9178" fill-opacity="0.5"/><rect x="40" y="10" width="1" height="2" fill="#ce9178" fill-opacity="0.62"/><rect x="41" y="10" width="1" height="2" fill="#ce9178" fill-opacity="0.5"/><rect x="42" y="10" width="1" height="2" fill="#ce9178" fill-opacity="0.35"/><rect x="43" y="10" width="1" height="2" fill="#d4d4d4" fill-opacity="0.35"/><rect x="0" y="12" width="1" height="2" fill="#c586c0" fill-opacity="0.5"/><rect x="1" y="12" width="1" height="2" fill="#c586c0" fill-opacity="0.5"/><rect x="2" y="12" width="1" height="2" fill="#c586c0" fill-opacity="0.5"/><rect x="3" y="12" width="1" height="2" fill="#c586c0" fill-opacity="0.5"/><rect x="4" y="12" width="1" height="2" fill="#c586c0" fill-opacity="0.5"/><rect x="5" y="12" width="1" height="2" fill="#c586c0" fill-opacity="0.62"/><rect x="7" y="12" width="1" height="2" fill="#9cdcfe" fill-opacity="0.62"/><rect x="8" y="12" width="1" height="2" fill="#9cdcfe" fill-opacity="0.5"/><rect x="9" y="12" width="1" height="2" fill="#9cdcfe" fill-opacity="0.5"/><rect x="10" y="12" width="1" height="2" fill="#9cdcfe" fill-opacity="0.5"/><rect x="11" y="12" width="1" height="2" fill="#9cdcfe" fill-opacity="0.5"/><rect x="13" y="12" width="1" height="2" fill="#c586c0" fill-opacity="0.62"/><rect x="14" y="12" width="1" height="2" fill="#c586c0" fill-opacity="0.5"/><rect x="15" y="12" width="1" height="2" fill="#c586c0" fill-opacity="0.5"/><rect x="16" y="12" width="1" height="2" fill="#c586c0" fill-opacity="0.5"/><rect x="18" y="12" width="1" height="2" fill="#ce9178" fill-opacity="0.35"/><rect x="19" y="12" width="1" height="2" fill="#ce9178" fill-opacity="0.35"/><rect x="20" y="12" width="1" height="2" fill="#ce9178" fill-opacity="0.35"/><rect x="21" y="12" width="1" height="2" fill="#ce9178" fill-opacity="0.62"/><rect x="22" y="12" width="1" height="2" fill="#ce9178" fill-opacity="0.5"/><rect x="23" y="12" width="1" height="2" fill="#ce9178" fill-opacity="0.5"/><rect x="24" y="12" width="1" height="2" fill="#ce9178" fill-opacity="0.5"/><rect x="25" y="12" width="1" height="2" fill="#ce9178" fill-opacity="0.5"/><rect x="26" y="12" width="1" height="2" fill="#ce9178" fill-opacity="0.35"/><rect x="27" y="12" width="1" height="2" fill="#d4d4d4" fill-opacity="0.35"/><rect x="0" y="14" width="1" height="2" fill="#c586c0" fill-opacity="0.5"/><rect x="1" y="14" width="1" height="2" fill="#c586c0" fill-opacity="0.5"/><rect x="2" y="14" width="1" height="2" fill="#c586c0" fill-opacity="0.5"/><rect x="3" y="14" width="1" height="2" fill="#c586c0" fill-opacity="0.5"/><rect x="4" y="14" width="1" height="2" fill="#c586c0" fill-opacity="0.5"/><rect x="5" y="14" width="1" height="2" fill="#c586c0" fill-opacity="0.62"/><rect x="7" y="14" width="1" height="2" fill="#9cdcfe" fill-opacity="0.62"/><rect x="8" y="14" width="1" height="2" fill="#9cdcfe" fill-opacity="0.5"/><rect x="9" y="14" width="1" height="2" fill="#9cdcfe" fill-opacity="0.5"/><rect x="10" y="14" width="1" height="2" fill="#9cdcfe" fill-opacity="0.5"/><rect x="11" y="14" width="1" height="2" fill="#9cdcfe" fill-opacity="0.5"/><rect x="12" y="14" width="1" height="2" fill="#9cdcfe" fill-opacity="0.62"/><rect x="13" y="14" width="1" height="2" fill="#9cdcfe" fill-opacity="0.5"/><rect x="14" y="14" width="1" height="2" fill="#9cdcfe" fill-opacity="0.62"/><rect x="15" y="14" width="1" height="2" fill="#9cdcfe" fill-opacity="0.5"/><rect x="16" y="14" width="1" height="2" fill="#9cdcfe" fill-opacity="0.5"/><rect x="17" y="14" width="1" height="2" fill="#9cdcfe" fill-opacity="0.62"/><rect x="18" y="14" width="1" height="2" fill="#9cdcfe" fill-opacity="0.5"/><rect x="20" y="14" width="1" height="2" fill="#c586c0" fill-opacity="0.62"/><rect x="21" y="14" width="1" height="2" fill="#c586c0" fill-opacity="0.5"/><rect x="22" y="14" width="1" height="2" fill="#c586c0" fill-opacity="0.5"/><rect x="23" y="14" width="1" height="2" fill="#c586c0" fill-opacity="0.5"/><rect x="25" y="14" width="1" height="2" fill="#ce9178" fill-opacity="0.35"/><rect x="26" y="14" width="1" height="2" fill="#ce9178" fill-opacity="0.35"/><rect x="27" y="14" width="1" height="2" fill="#ce9178" fill-opacity="0.35"/><rect x="28" y="14" width="1" height="2" fill="#ce9178" fill-opacity="0.62"/><rect x="29" y="14" width="1" height="2" fill="#ce9178" fill-opacity="0.5"/><rect x="30" y="14" width="1" height="2" fill="#ce9178" fill-opacity="0.5"/><rect x="31" y="14" width="1" height="2" fill="#ce9178" fill-opacity="0.5"/><rect x="32" y="14" width="1" height="2" fill="#ce9178" fill-opacity="0.5"/><rect x="33" y="14" width="1" height="2" fill="#ce9178" fill-opacity="0.62"/><rect x="34" y="14" width="1" height="2" fill="#ce9178" fill-opacity="0.5"/><rect x="35" y="14" width="1" height="2" fill="#ce9178" fill-opacity="0.62"/><rect x="36" y="14" width="1" height="2" fill="#ce9178" fill-opacity="0.5"/><rect x="37" y="14" width="1" height="2" fill="#ce9178" fill-opacity="0.5"/><rect x="38" y="14" width="1" height="2" fill="#ce9178" fill-opacity="0.62"/><rect x="39" y="14" width="1" height="2" fill="#ce9178" fill-opacity="0.5"/><rect x="40" y="14" width="1" height="2" fill="#ce9178" fill-opacity="0.35"/><rect x="41" y="14" width="1" height="2" fill="#d4d4d4" fill-opacity="0.35"/><rect x="0" y="16" width="1" height="2" fill="#c586c0" fill-opacity="0.5"/><rect x="1" y="16" width="1" height="2" fill="#c586c0" fill-opacity="0.5"/><rect x="2" y="16" width="1" height="2" fill="#c586c0" fill-opacity="0.5"/><rect x="3" y="16" width="1" height="2" fill="#c586c0" fill-opacity="0.5"/><rect x="4" y="16" width="1" height="2" fill="#c586c0" fill-opacity="0.5"/><rect x="5" y="16" width="1" height="2" fill="#c586c0" fill-opacity="0.62"/><rect x="7" y="16" width="1" height="2" fill="#9cdcfe" fill-opacity="0.62"/><rect x="8" y="16" width="1" height="2" fill="#9cdcfe" fill-opacity="0.5"/><rect x="9" y="16" width="1" height="2" fill="#9cdcfe" fill-opacity="0.5"/><rect x="10" y="16" width="1" height="2" fill="#9cdcfe" fill-opacity="0.5"/><rect x="11" y="16" width="1" height="2" fill="#9cdcfe" fill-opacity="0.5"/><rect x="12" y="16" width="1" height="2" fill="#9cdcfe" fill-opacity="0.62"/><rect x="13" y="16" width="1" height="2" fill="#9cdcfe" fill-opacity="0.62"/><rect x="14" y="16" width="1" height="2" fill="#9cdcfe" fill-opacity="0.5"/><rect x="15" y="16" width="1" height="2" fill="#9cdcfe" fill-opacity="0.5"/><rect x="16" y="16" width="1" height="2" fill="#9cdcfe" fill-opacity="0.5"/><rect x="17" y="16" width="1" height="2" fill="#9cdcfe" fill-opacity="0.5"/><rect x="18" y="16" width="1" height="2" fill="#9cdcfe" fill-opacity="0.5"/><rect x="19" y="16" width="1" height="2" fill="#9cdcfe" fill-opacity="0.5"/><rect x="20" y="16" width="1" height="2" fill="#9cdcfe" fill-opacity="0.62"/><rect x="22" y="16" width="1" height="2" fill="#c586c0" fill-opacity="0.62"/><rect x="23" y="16" width="1" height="2" fill="#c586c0" fill-opacity="0.5"/><rect x="24" y="16" width="1" height="2" fill="#c586c0" fill-opacity="0.5"/><rect x="25" y="16" width="1" height="2" fill="#c586c0" fill-opacity="0.5"/><rect x="27" y="16" width="1" height="2" fill="#ce9178" fill-opacity="0.35"/><rect x="28" y="16" width="1" height="2" fill="#ce9178" fill-opacity="0.35"/><rect x="29" y="16" width="1" height="2" fill="#ce9178" fill-opacity="0.35"/><rect x="30" y="16" width="1" height="2" fill="#ce9178" fill-opacity="0.62"/><rect x="31" y="16" width="1" height="2" fill="#ce9178" fill-opacity="0.5"/><rect x="32" y="16" width="1" height="2" fill="#ce9178" fill-opacity="0.5"/><rect x="33" y="16" width="1" height="2" fill="#ce9178" fill-opacity="0.5"/><rect x="34" y="16" width="1" height="2" fill="#ce9178" fill-opacity="0.5"/><rect x="35" y="16" width="1" height="2" fill="#ce9178" fill-opacity="0.62"/><rect x="36" y="16" width="1" height="2" fill="#ce9178" fill-opacity="0.62"/><rect x="37" y="16" width="1" height="2" fill="#ce9178" fill-opacity="0.5"/><rect x="38" y="16" width="1" height="2" fill="#ce9178" fill-opacity="0.5"/><rect x="39" y="16" width="1" height="2" fill="#ce9178" fill-opacity="0.5"/><rect x="40" y="16" width="1" height="2" fill="#ce9178" fill-opacity="0.5"/><rect x="41" y="16" width="1" height="2" fill="#ce9178" fill-opacity="0.5"/><rect x="42" y="16" width="1" height="2" fill="#ce9178" fill-opacity="0.5"/><rect x="43" y="16" width="1" height="2" fill="#ce9178" fill-opacity="0.62"/><rect x="44" y="16" width="1" height="2" fill="#ce9178" fill-opacity="0.35"/><rect x="45" y="16" width="1" height="2" fill="#d4d4d4" fill-opacity="0.35"/><rect x="0" y="18" width="1" height="2" fill="#c586c0" fill-opacity="0.5"/><rect x="1" y="18" width="1" height="2" fill="#c586c0" fill-opacity="0.5"/><rect x="2" y="18" width="1" height="2" fill="#c586c0" fill-opacity="0.5"/><rect x="3" y="18" width="1" height="2" fill="#c586c0" fill-opacity="0.5"/><rect x="4" y="18" width="1" height="2" fill="#c586c0" fill-opacity="0.5"/><rect x="5" y="18" width="1" height="2" fill="#c586c0" fill-opacity="0.62"/><rect x="7" y="18" width="1" height="2" fill="#9cdcfe" fill-opacity="0.62"/><rect x="8" y="18" width="1" height="2" fill="#9cdcfe" fill-opacity="0.5"/><rect x="9" y="18" width="1" height="2" fill="#9cdcfe" fill-opacity="0.5"/><rect x="10" y="18" width="1" height="2" fill="#9cdcfe" fill-opacity="0.5"/><rect x="12" y="18" width="1" height="2" fill="#c586c0" fill-opacity="0.62"/><rect x="13" y="18" width="1" height="2" fill="#c586c0" fill-opacity="0.5"/><rect x="14" y="18" width="1" height="2" fill="#c586c0" fill-opacity="0.5"/><rect x="15" y="18" width="1" height="2" fill="#c586c0" fill-opacity="0.5"/><rect x="17" y="18" width="1" height="2" fill="#ce9178" fill-opacity="0.35"/><rect x="18" y="18" width="1" height="2" fill="#ce9178" fill-opacity="0.35"/><rect x="19" y="18" width="1" height="2" fill="#ce9178" fill-opacity="0.35"/><rect x="20" y="18" width="1" height="2" fill="#ce9178" fill-opacity="0.62"/><rect x="21" y="18" width="1" height="2" fill="#ce9178" fill-opacity="0.5"/><rect x="22" y="18" width="1" height="2" fill="#ce9178" fill-opacity="0.5"/><rect x="23" y="18" width="1" height="2" fill="#ce9178" fill-opacity="0.5"/><rect x="24" y="18" width="1" height="2" fill="#ce9178" fill-opacity="0.35"/><rect x="25" y="18" width="1" height="2" fill="#d4d4d4" fill-opacity="0.35"/><rect x="0" y="20" width="1" height="2" fill="#c586c0" fill-opacity="0.5"/><rect x="1" y="20" width="1" height="2" fill="#c586c0" fill-opacity="0.5"/><rect x="2" y="20" width="1" height="2" fill="#c586c0" fill-opacity="0.5"/><rect x="3" y="20" width="1" height="2" fill="#c586c0" fill-opacity="0.5"/><rect x="4" y="20" width="1" height="2" fill="#c586c0" fill-opacity="0.5"/><rect x="5" y="20" width="1" height="2" fill="#c586c0" fill-opacity="0.62"/><rect x="7" y="20" width="1" height="2" fill="#9cdcfe" fill-opacity="0.5"/><rect x="8" y="20" width="1" height="2" fill="#9cdcfe" fill-opacity="0.5"/><rect x="9" y="20" width="1" height="2" fill="#9cdcfe" fill-opacity="0.5"/><rect x="10" y="20" width="1" height="2" fill="#9cdcfe" fill-opacity="0.5"/><rect x="11" y="20" width="1" height="2" fill="#9cdcfe" fill-opacity="0.62"/><rect x="12" y="20" width="1" height="2" fill="#9cdcfe" fill-opacity="0.5"/><rect x="13" y="20" width="1" height="2" fill="#9cdcfe" fill-opacity="0.62"/><rect x="14" y="20" width="1" height="2" fill="#9cdcfe" fill-opacity="0.5"/><rect x="15" y="20" width="1" height="2" fill="#9cdcfe" fill-opacity="0.5"/><rect x="16" y="20" width="1" height="2" fill="#9cdcfe" fill-opacity="0.5"/><rect x="17" y="20" width="1" height="2" fill="#9cdcfe" fill-opacity="0.62"/><rect x="18" y="20" width="1" height="2" fill="#9cdcfe" fill-opacity="0.5"/><rect x="20" y="20" width="1" height="2" fill="#c586c0" fill-opacity="0.62"/><rect x="21" y="20" width="1" height="2" fill="#c586c0" fill-opacity="0.5"/><rect x="22" y="20" width="1" height="2" fill="#c586c0" fill-opacity="0.5"/><rect x="23" y="20" width="1" height="2" fill="#c586c0" fill-opacity="0.5"/><rect x="25" y="20" width="1" height="2" fill="#ce9178" fill-opacity="0.35"/><rect x="26" y="20" width="1" height="2" fill="#ce9178" fill-opacity="0.35"/><rect x="27" y="20" width="1" height="2" fill="#ce9178" fill-opacity="0.35"/><rect x="28" y="20" width="1" height="2" fill="#ce9178" fill-opacity="0.62"/><rect x="29" y="20" width="1" height="2" fill="#ce9178" fill-opacity="0.5"/><rect x="30" y="20" width="1" height="2" fill="#ce9178" fill-opacity="0.5"/><rect x="31" y="20" width="1" height="2" fill="#ce9178" fill-opacity="0.5"/><rect x="32" y="20" width="1" height="2" fill="#ce9178" fill-opacity="0.62"/><rect x="33" y="20" width="1" height="2" fill="#ce9178" fill-opacity="0.5"/><rect x="34" y="20" width="1" height="2" fill="#ce9178" fill-opacity="0.62"/><rect x="35" y="20" width="1" height="2" fill="#ce9178" fill-opacity="0.5"/><rect x="36" y="20" width="1" height="2" fill="#ce9178" fill-opacity="0.5"/><rect x="37" y="20" width="1" height="2" fill="#ce9178" fill-opacity="0.5"/><rect x="38" y="20" width="1" height="2" fill="#ce9178" fill-opacity="0.62"/><rect x="39" y="20" width="1" height="2" fill="#ce9178" fill-opacity="0.5"/><rect x="40" y="20" width="1" height="2" fill="#ce9178" fill-opacity="0.35"/><rect x="41" y="20" width="1" height="2" fill="#d4d4d4" fill-opacity="0.35"/><rect x="0" y="22" width="1" height="2" fill="#c586c0" fill-opacity="0.5"/><rect x="1" y="22" width="1" height="2" fill="#c586c0" fill-opacity="0.5"/><rect x="2" y="22" width="1" height="2" fill="#c586c0" fill-opacity="0.5"/><rect x="3" y="22" width="1" height="2" fill="#c586c0" fill-opacity="0.5"/><rect x="4" y="22" width="1" height="2" fill="#c586c0" fill-opacity="0.5"/><rect x="5" y="22" width="1" height="2" fill="#c586c0" fill-opacity="0.62"/><rect x="7" y="22" width="1" height="2" fill="#ffd700" fill-opacity="0.35"/><rect x="9" y="22" width="1" height="2" fill="#9cdcfe" fill-opacity="0.62"/><rect x="10" y="22" width="1" height="2" fill="#9cdcfe" fill-opacity="0.5"/><rect x="11" y="22" width="1" height="2" fill="#9cdcfe" fill-opacity="0.62"/><rect x="12" y="22" width="1" height="2" fill="#9cdcfe" fill-opacity="0.5"/><rect x="13" y="22" width="1" height="2" fill="#9cdcfe" fill-opacity="0.5"/><rect x="14" y="22" width="1" height="2" fill="#9cdcfe" fill-opacity="0.62"/><rect x="15" y="22" width="1" height="2" fill="#9cdcfe" fill-opacity="0.62"/><rect x="16" y="22" width="1" height="2" fill="#9cdcfe" fill-opacity="0.5"/><rect x="17" y="22" width="1" height="2" fill="#9cdcfe" fill-opacity="0.5"/><rect x="18" y="22" width="1" height="2" fill="#9cdcfe" fill-opacity="0.5"/><rect x="19" y="22" width="1" height="2" fill="#9cdcfe" fill-opacity="0.5"/><rect x="20" y="22" width="1" height="2" fill="#9cdcfe" fill-opacity="0.62"/><rect x="21" y="22" width="1" height="2" fill="#9cdcfe" fill-opacity="0.5"/><rect x="22" y="22" width="1" height="2" fill="#9cdcfe" fill-opacity="0.5"/><rect x="24" y="22" width="1" height="2" fill="#ffd700" fill-opacity="0.35"/><rect x="26" y="22" width="1" height="2" fill="#c586c0" fill-opacity="0.62"/><rect x="27" y="22" width="1" height="2" fill="#c586c0" fill-opacity="0.5"/><rect x="28" y="22" width="1" height="2" fill="#c586c0" fill-opacity="0.5"/><rect x="29" y="22" width="1" height="2" fill="#c586c0" fill-opacity="0.5"/><rect x="31" y="22" width="1" height="2" fill="#ce9178" fill-opacity="0.35"/><rect x="32" y="22" width="1" height="2" fill="#ce9178" fill-opacity="0.35"/><rect x="33" y="22" width="1" height="2" fill="#ce9178" fill-opacity="0.35"/><rect x="34" y="22" width="1" height="2" fill="#ce9178" fill-opacity="0.35"/><rect x="35" y="22" width="1" height="2" fill="#ce9178" fill-opacity="0.5"/><rect x="36" y="22" width="1" height="2" fill="#ce9178" fill-opacity="0.5"/><rect x="37" y="22" width="1" height="2" fill="#ce9178" fill-opacity="0.5"/><rect x="38" y="22" width="1" height="2" fill="#ce9178" fill-opacity="0.62"/><rect x="39" y="22" width="1" height="2" fill="#ce9178" fill-opacity="0.5"/><rect x="40" y="22" width="1" height="2" fill="#ce9178" fill-opacity="0.5"/><rect x="41" y="22" width="1" height="2" fill="#ce9178" fill-opacity="0.62"/><rect x="42" y="22" width="1" height="2" fill="#ce9178" fill-opacity="0.5"/><rect x="43" y="22" width="1" height="2" fill="#ce9178" fill-opacity="0.35"/><rect x="44" y="22" width="1" height="2" fill="#ce9178" fill-opacity="0.62"/><rect x="45" y="22" width="1" height="2" fill="#ce9178" fill-opacity="0.5"/><rect x="46" y="22" width="1" height="2" fill="#ce9178" fill-opacity="0.62"/><rect x="47" y="22" width="1" height="2" fill="#ce9178" fill-opacity="0.5"/><rect x="48" y="22" width="1" height="2" fill="#ce9178" fill-opacity="0.5"/><rect x="49" y="22" width="1" height="2" fill="#ce9178" fill-opacity="0.62"/><rect x="50" y="22" width="1" height="2" fill="#ce9178" fill-opacity="0.62"/><rect x="51" y="22" width="1" height="2" fill="#ce9178" fill-opacity="0.5"/><rect x="52" y="22" width="1" height="2" fill="#ce9178" fill-opacity="0.5"/><rect x="53" y="22" width="1" height="2" fill="#ce9178" fill-opacity="0.62"/><rect x="54" y="22" width="1" height="2" fill="#ce9178" fill-opacity="0.5"/><rect x="55" y="22" width="1" height="2" fill="#ce9178" fill-opacity="0.5"/><rect x="56" y="22" width="1" height="2" fill="#ce9178" fill-opacity="0.62"/><rect x="57" y="22" width="1" height="2" fill="#ce9178" fill-opacity="0.35"/><rect x="58" y="22" width="1" height="2" fill="#d4d4d4" fill-opacity="0.35"/><rect x="0" y="24" width="1" height="2" fill="#c586c0" fill-opacity="0.5"/><rect x="1" y="24" width="1" height="2" fill="#c586c0" fill-opacity="0.5"/><rect x="2" y="24" width="1" height="2" fill="#c586c0" fill-opacity="0.5"/><rect x="3" y="24" width="1" height="2" fill="#c586c0" fill-opacity="0.5"/><rect x="4" y="24" width="1" height="2" fill="#c586c0" fill-opacity="0.5"/><rect x="5" y="24" width="1" height="2" fill="#c586c0" fill-opacity="0.62"/><rect x="7" y="24" width="1" height="2" fill="#9cdcfe" fill-opacity="0.62"/><rect x="8" y="24" width="1" height="2" fill="#9cdcfe" fill-opacity="0.62"/><rect x="9" y="24" width="1" height="2" fill="#9cdcfe" fill-opacity="0.5"/><rect x="10" y="24" width="1" height="2" fill="#9cdcfe" fill-opacity="0.5"/><rect x="11" y="24" width="1" height="2" fill="#9cdcfe" fill-opacity="0.5"/><rect x="12" y="24" width="1" height="2" fill="#9cdcfe" fill-opacity="0.62"/><rect x="13" y="24" width="1" height="2" fill="#9cdcfe" fill-opacity="0.5"/><rect x="14" y="24" width="1" height="2" fill="#9cdcfe" fill-opacity="0.62"/><rect x="15" y="24" width="1" height="2" fill="#9cdcfe" fill-opacity="0.5"/><rect x="16" y="24" width="1" height="2" fill="#9cdcfe" fill-opacity="0.62"/><rect x="17" y="24" width="1" height="2" fill="#9cdcfe" fill-opacity="0.5"/><rect x="18" y="24" width="1" height="2" fill="#9cdcfe" fill-opacity="0.62"/><rect x="19" y="24" width="1" height="2" fill="#9cdcfe" fill-opacity="0.5"/><rect x="20" y="24" width="1" height="2" fill="#9cdcfe" fill-opacity="0.5"/><rect x="21" y="24" width="1" height="2" fill="#9cdcfe" fill-opacity="0.5"/><rect x="23" y="24" width="1" height="2" fill="#c586c0" fill-opacity="0.62"/><rect x="24" y="24" width="1" height="2" fill="#c586c0" fill-opacity="0.5"/><rect x="25" y="24" width="1" height="2" fill="#c586c0" fill-opacity="0.5"/><rect x="26" y="24" width="1" height="2" fill="#c586c0" fill-opacity="0.5"/><rect x="28" y="24" width="1" height="2" fill="#ce9178" fill-opacity="0.35"/><rect x="29" y="24" width="1" height="2" fill="#ce9178" fill-opacity="0.35"/><rect x="30" y="24" width="1" height="2" fill="#ce9178" fill-opacity="0.35"/><rect x="31" y="24" width="1" height="2" fill="#ce9178" fill-opacity="0.62"/><rect x="32" y="24" width="1" height="2" fill="#ce9178" fill-opacity="0.62"/><rect x="33" y="24" width="1" height="2" fill="#ce9178" fill-opacity="0.5"/><rect x="34" y="24" width="1" height="2" fill="#ce9178" fill-opacity="0.5"/><rect x="35" y="24" width="1" height="2" fill="#ce9178" fill-opacity="0.5"/><rect x="36" y="24" width="1" height="2" fill="#ce9178" fill-opacity="0.62"/><rect x="37" y="24" width="1" height="2" fill="#ce9178" fill-opacity="0.5"/><rect x="38" y="24" width="1" height="2" fill="#ce9178" fill-opacity="0.62"/><rect x="39" y="24" width="1" height="2" fill="#ce9178" fill-opacity="0.5"/><rect x="40" y="24" width="1" height="2" fill="#ce9178" fill-opacity="0.62"/><rect x="41" y="24" width="1" height="2" fill="#ce9178" fill-opacity="0.5"/><rect x="42" y="24" width="1" height="2" fill="#ce9178" fill-opacity="0.62"/><rect x="43" y="24" width="1" height="2" fill="#ce9178" fill-opacity="0.5"/><rect x="44" y="24" width="1" height="2" fill="#ce9178" fill-opacity="0.5"/><rect x="45" y="24" width="1" height="2" fill="#ce9178" fill-opacity="0.5"/><rect x="46" y="24" width="1" height="2" fill="#ce9178" fill-opacity="0.35"/><rect x="47" y="24" width="1" height="2" fill="#d4d4d4" fill-opacity="0.35"/><rect x="0" y="26" width="1" height="2" fill="#c586c0" fill-opacity="0.5"/><rect x="1" y="26" width="1" height="2" fill="#c586c0" fill-opacity="0.5"/><rect x="2" y="26" width="1" height="2" fill="#c586c0" fill-opacity="0.5"/><rect x="3" y="26" width="1" height="2" fill="#c586c0" fill-opacity="0.5"/><rect x="4" y="26" width="1" height="2" fill="#c586c0" fill-opacity="0.5"/><rect x="5" y="26" width="1" height="2" fill="#c586c0" fill-opacity="0.62"/><rect x="7" y="26" width="1" height="2" fill="#ffd700" fill-opacity="0.35"/><rect x="9" y="26" width="1" height="2" fill="#9cdcfe" fill-opacity="0.5"/><rect x="10" y="26" width="1" height="2" fill="#9cdcfe" fill-opacity="0.5"/><rect x="11" y="26" width="1" height="2" fill="#9cdcfe" fill-opacity="0.5"/><rect x="12" y="26" width="1" height="2" fill="#9cdcfe" fill-opacity="0.62"/><rect x="13" y="26" width="1" height="2" fill="#9cdcfe" fill-opacity="0.62"/><rect x="14" y="26" width="1" height="2" fill="#9cdcfe" fill-opacity="0.62"/><rect x="15" y="26" width="1" height="2" fill="#9cdcfe" fill-opacity="0.5"/><rect x="16" y="26" width="1" height="2" fill="#9cdcfe" fill-opacity="0.5"/><rect x="17" y="26" width="1" height="2" fill="#9cdcfe" fill-opacity="0.62"/><rect x="19" y="26" width="1" height="2" fill="#ffd700" fill-opacity="0.35"/><rect x="21" y="26" width="1" height="2" fill="#c586c0" fill-opacity="0.62"/><rect x="22" y="26" width="1" height="2" fill="#c586c0" fill-opacity="0.5"/><rect x="23" y="26" width="1" height="2" fill="#c586c0" fill-opacity="0.5"/><rect x="24" y="26" width="1" height="2" fill="#c586c0" fill-opacity="0.5"/><rect x="26" y="26" width="1" height="2" fill="#ce9178" fill-opacity="0.35"/><rect x="27" y="26" width="1" height="2" fill="#ce9178" fill-opacity="0.5"/><rect x="28" y="26" width="1" height="2" fill="#ce9178" fill-opacity="0.5"/><rect x="29" y="26" width="1" height="2" fill="#ce9178" fill-opacity="0.5"/><rect x="30" y="26" width="1" height="2" fill="#ce9178" fill-opacity="0.5"/><rect x="31" y="26" width="1" height="2" fill="#ce9178" fill-opacity="0.62"/><rect x="32" y="26" width="1" height="2" fill="#ce9178" fill-opacity="0.35"/><rect x="33" y="26" width="1" height="2" fill="#d4d4d4" fill-opacity="0.35"/><rect x="0" y="28" width="1" height="2" fill="#c586c0" fill-opacity="0.5"/><rect x="1" y="28" width="1" height="2" fill="#c586c0" fill-opacity="0.5"/><rect x="2" y="28" width="1" height="2" fill="#c586c0" fill-opacity="0.5"/><rect x="3" y="28" width="1" height="2" fill="#c586c0" fill-opacity="0.5"/><rect x="4" y="28" width="1" height="2" fill="#c586c0" fill-opacity="0.5"/><rect x="5" y="28" width="1" height="2" fill="#c586c0" fill-opacity="0.62"/><rect x="7" y="28" width="1" height="2" fill="#4fc1ff" fill-opacity="0.62"/><rect x="8" y="28" width="1" height="2" fill="#4fc1ff" fill-opacity="0.62"/><rect x="9" y="28" width="1" height="2" fill="#4fc1ff" fill-opacity="0.62"/><rect x="11" y="28" width="1" height="2" fill="#c586c0" fill-opacity="0.62"/><rect x="12" y="28" width="1" height="2" fill="#c586c0" fill-opacity="0.5"/><rect x="13" y="28" width="1" height="2" fill="#c586c0" fill-opacity="0.5"/><rect x="14" y="28" width="1" height="2" fill="#c586c0" fill-opacity="0.5"/><rect x="16" y="28" width="1" height="2" fill="#ce9178" fill-opacity="0.35"/><rect x="17" y="28" width="1" height="2" fill="#ce9178" fill-opacity="0.5"/><rect x="18" y="28" width="1" height="2" fill="#ce9178" fill-opacity="0.5"/><rect x="19" y="28" width="1" height="2" fill="#ce9178" fill-opacity="0.5"/><rect x="20" y="28" width="1" height="2" fill="#ce9178" fill-opacity="0.35"/><rect x="21" y="28" width="1" height="2" fill="#d4d4d4" fill-opacity="0.35"/><rect x="0" y="30" width="1" height="2" fill="#c586c0" fill-opacity="0.5"/><rect x="1" y="30" width="1" height="2" fill="#c586c0" fill-opacity="0.5"/><rect x="2" y="30" width="1" height="2" fill="#c586c0" fill-opacity="0.5"/><rect x="3" y="30" width="1" height="2" fill="#c586c0" fill-opacity="0.5"/><rect x="4" y="30" width="1" height="2" fill="#c586c0" fill-opacity="0.5"/><rect x="5" y="30" width="1" height="2" fill="#c586c0" fill-opacity="0.62"/><rect x="7" y="30" width="1" height="2" fill="#ce9178" fill-opacity="0.35"/><rect x="8" y="30" width="1" height="2" fill="#ce9178" fill-opacity="0.5"/><rect x="9" y="30" width="1" height="2" fill="#ce9178" fill-opacity="0.5"/><rect x="10" y="30" width="1" height="2" fill="#ce9178" fill-opacity="0.5"/><rect x="11" y="30" width="1" height="2" fill="#ce9178" fill-opacity="0.35"/><rect x="12" y="30" width="1" height="2" fill="#ce9178" fill-opacity="0.62"/><rect x="13" y="30" width="1" height="2" fill="#ce9178" fill-opacity="0.5"/><rect x="14" y="30" width="1" height="2" fill="#ce9178" fill-opacity="0.5"/><rect x="15" y="30" width="1" height="2" fill="#ce9178" fill-opacity="0.62"/><rect x="16" y="30" width="1" height="2" fill="#ce9178" fill-opacity="0.35"/><rect x="17" y="30" width="1" height="2" fill="#ce9178" fill-opacity="0.5"/><rect x="18" y="30" width="1" height="2" fill="#ce9178" fill-opacity="0.5"/><rect x="19" y="30" width="1" height="2" fill="#ce9178" fill-opacity="0.5"/><rect x="20" y="30" width="1" height="2" fill="#ce9178" fill-opacity="0.35"/><rect x="21" y="30" width="1" height="2" fill="#ce9178" fill-opacity="0.5"/><rect x="22" y="30" width="1" height="2" fill="#ce9178" fill-opacity="0.5"/><rect x="23" y="30" width="1" height="2" fill="#ce9178" fill-opacity="0.5"/><rect x="24" y="30" width="1" height="2" fill="#ce9178" fill-opacity="0.35"/><rect x="25" y="30" width="1" height="2" fill="#d4d4d4" fill-opacity="0.35"/><rect x="0" y="34" width="1" height="2" fill="#569cd6" fill-opacity="0.62"/><rect x="1" y="34" width="1" height="2" fill="#569cd6" fill-opacity="0.5"/><rect x="2" y="34" width="1" height="2" fill="#569cd6" fill-opacity="0.5"/><rect x="3" y="34" width="1" height="2" fill="#569cd6" fill-opacity="0.5"/><rect x="4" y="34" width="1" height="2" fill="#569cd6" fill-opacity="0.62"/><rect x="5" y="34" width="1" height="2" fill="#569cd6" fill-opacity="0.5"/><rect x="6" y="34" width="1" height="2" fill="#569cd6" fill-opacity="0.5"/><rect x="7" y="34" width="1" height="2" fill="#569cd6" fill-opacity="0.5"/><rect x="9" y="34" width="1" height="2" fill="#dcdcaa" fill-opacity="0.62"/><rect x="10" y="34" width="1" height="2" fill="#dcdcaa" fill-opacity="0.5"/><rect x="11" y="34" width="1" height="2" fill="#dcdcaa" fill-opacity="0.5"/><rect x="12" y="34" width="1" height="2" fill="#ffd700" fill-opacity="0.35"/><rect x="13" y="34" width="1" height="2" fill="#ffd700" fill-opacity="0.35"/><rect x="15" y="34" width="1" height="2" fill="#ffd700" fill-opacity="0.35"/><rect x="2" y="36" width="1" height="2" fill="#569cd6" fill-opacity="0.5"/><rect x="3" y="36" width="1" height="2" fill="#569cd6" fill-opacity="0.5"/><rect x="4" y="36" width="1" height="2" fill="#569cd6" fill-opacity="0.5"/><rect x="5" y="36" width="1" height="2" fill="#569cd6" fill-opacity="0.5"/><rect x="6" y="36" width="1" height="2" fill="#569cd6" fill-opacity="0.62"/><rect x="8" y="36" width="1" height="2" fill="#da70d6" fill-opacity="0.35"/><rect x="10" y="36" width="1" height="2" fill="#4fc1ff" fill-opacity="0.5"/><rect x="11" y="36" width="1" height="2" fill="#4fc1ff" fill-opacity="0.5"/><rect x="12" y="36" width="1" height="2" fill="#4fc1ff" fill-opacity="0.5"/><rect x="13" y="36" width="1" height="2" fill="#4fc1ff" fill-opacity="0.5"/><rect x="14" y="36" width="1" height="2" fill="#4fc1ff" fill-opacity="0.62"/><rect x="15" y="36" width="1" height="2" fill="#4fc1ff" fill-opacity="0.5"/><rect x="16" y="36" width="1" height="2" fill="#4fc1ff" fill-opacity="0.5"/><rect x="17" y="36" width="1" height="2" fill="#4fc1ff" fill-opacity="0.62"/><rect x="18" y="36" width="1" height="2" fill="#4fc1ff" fill-opacity="0.5"/><rect x="19" y="36" width="1" height="2" fill="#4fc1ff" fill-opacity="0.5"/><rect x="20" y="36" width="1" height="2" fill="#4fc1ff" fill-opacity="0.5"/><rect x="22" y="36" width="1" height="2" fill="#da70d6" fill-opacity="0.35"/><rect x="24" y="36" width="1" height="2" fill="#d4d4d4" fill-opacity="0.35"/><rect x="26" y="36" width="1" height="2" fill="#dcdcaa" fill-opacity="0.5"/><rect x="27" y="36" width="1" height="2" fill="#dcdcaa" fill-opacity="0.5"/><rect x="28" y="36" width="1" height="2" fill="#dcdcaa" fill-opacity="0.5"/><rect x="29" y="36" width="1" height="2" fill="#dcdcaa" fill-opacity="0.62"/><rect x="30" y="36" width="1" height="2" fill="#dcdcaa" fill-opacity="0.5"/><rect x="31" y="36" width="1" height="2" fill="#dcdcaa" fill-opacity="0.62"/><rect x="32" y="36" width="1" height="2" fill="#dcdcaa" fill-opacity="0.62"/><rect x="33" y="36" width="1" height="2" fill="#da70d6" fill-opacity="0.35"/><rect x="34" y="36" width="1" height="2" fill="#da70d6" fill-opacity="0.35"/><rect x="35" y="36" width="1" height="2" fill="#d4d4d4" fill-opacity="0.35"/><rect x="2" y="38" width="1" height="2" fill="#dcdcaa" fill-opacity="0.5"/><rect x="3" y="38" width="1" height="2" fill="#dcdcaa" fill-opacity="0.5"/><rect x="4" y="38" width="1" height="2" fill="#dcdcaa" fill-opacity="0.5"/><rect x="5" y="38" width="1" height="2" fill="#dcdcaa" fill-opacity="0.62"/><rect x="6" y="38" width="1" height="2" fill="#dcdcaa" fill-opacity="0.62"/><rect x="7" y="38" width="1" height="2" fill="#dcdcaa" fill-opacity="0.62"/><rect x="8" y="38" width="1" height="2" fill="#dcdcaa" fill-opacity="0.5"/><rect x="9" y="38" width="1" height="2" fill="#dcdcaa" fill-opacity="0.5"/><rect x="10" y="38" width="1" height="2" fill="#dcdcaa" fill-opacity="0.62"/><rect x="11" y="38" width="1" height="2" fill="#da70d6" fill-opacity="0.35"/><rect x="12" y="38" width="1" height="2" fill="#179fff" fill-opacity="0.35"/><rect x="13" y="38" width="1" height="2" fill="#179fff" fill-opacity="0.35"/><rect x="15" y="38" width="1" height="2" fill="#569cd6" fill-opacity="0.35"/><rect x="16" y="38" width="1" height="2" fill="#569cd6" fill-opacity="0.35"/><rect x="18" y="38" width="1" height="2" fill="#179fff" fill-opacity="0.35"/><rect x="4" y="40" width="1" height="2" fill="#4fc1ff" fill-opacity="0.62"/><rect x="5" y="40" width="1" height="2" fill="#4fc1ff" fill-opacity="0.62"/><rect x="6" y="40" width="1" height="2" fill="#4fc1ff" fill-opacity="0.62"/><rect x="7" y="40" width="1" height="2" fill="#d4d4d4" fill-opacity="0.35"/><rect x="8" y="40" width="1" height="2" fill="#dcdcaa" fill-opacity="0.5"/><rect x="9" y="40" width="1" height="2" fill="#dcdcaa" fill-opacity="0.5"/><rect x="10" y="40" width="1" height="2" fill="#dcdcaa" fill-opacity="0.5"/><rect x="11" y="40" width="1" height="2" fill="#dcdcaa" fill-opacity="0.62"/><rect x="12" y="40" width="1" height="2" fill="#ffd700" fill-opacity="0.35"/><rect x="13" y="40" width="1" height="2" fill="#da70d6" fill-opacity="0.35"/><rect x="15" y="40" width="1" height="2" fill="#9cdcfe" fill-opacity="0.62"/><rect x="16" y="40" width="1" height="2" fill="#9cdcfe" fill-opacity="0.5"/><rect x="17" y="40" width="1" height="2" fill="#9cdcfe" fill-opacity="0.5"/><rect x="18" y="40" width="1" height="2" fill="#9cdcfe" fill-opacity="0.5"/><rect x="19" y="40" width="1" height="2" fill="#9cdcfe" fill-opacity="0.62"/><rect x="20" y="40" width="1" height="2" fill="#9cdcfe" fill-opacity="0.5"/><rect x="21" y="40" width="1" height="2" fill="#9cdcfe" fill-opacity="0.5"/><rect x="22" y="40" width="1" height="2" fill="#9cdcfe" fill-opacity="0.5"/><rect x="23" y="40" width="1" height="2" fill="#d4d4d4" fill-opacity="0.35"/><rect x="25" y="40" width="1" height="2" fill="#b5cea8" fill-opacity="0.62"/><rect x="26" y="40" width="1" height="2" fill="#b5cea8" fill-opacity="0.62"/><rect x="27" y="40" width="1" height="2" fill="#b5cea8" fill-opacity="0.62"/><rect x="28" y="40" width="1" height="2" fill="#b5cea8" fill-opacity="0.62"/><rect x="30" y="40" width="1" height="2" fill="#da70d6" fill-opacity="0.35"/><rect x="31" y="40" width="1" height="2" fill="#ffd700" fill-opacity="0.35"/><rect x="32" y="40" width="1" height="2" fill="#d4d4d4" fill-opacity="0.35"/><rect x="2" y="42" width="1" height="2" fill="#179fff" fill-opacity="0.35"/><rect x="3" y="42" width="1" height="2" fill="#d4d4d4" fill-opacity="0.35"/><rect x="5" y="42" width="1" height="2" fill="#179fff" fill-opacity="0.35"/><rect x="6" y="42" width="1" height="2" fill="#179fff" fill-opacity="0.35"/><rect x="7" y="42" width="1" height="2" fill="#da70d6" fill-opacity="0.35"/><rect x="8" y="42" width="1" height="2" fill="#d4d4d4" fill-opacity="0.35"/><rect x="2" y="44" width="1" height="2" fill="#c586c0" fill-opacity="0.5"/><rect x="3" y="44" width="1" height="2" fill="#c586c0" fill-opacity="0.62"/><rect x="5" y="44" width="1" height="2" fill="#da70d6" fill-opacity="0.35"/><rect x="6" y="44" width="1" height="2" fill="#9cdcfe" fill-opacity="0.5"/><rect x="7" y="44" width="1" height="2" fill="#9cdcfe" fill-opacity="0.5"/><rect x="8" y="44" width="1" height="2" fill="#9cdcfe" fill-opacity="0.5"/><rect x="9" y="44" width="1" height="2" fill="#9cdcfe" fill-opacity="0.5"/><rect x="10" y="44" width="1" height="2" fill="#9cdcfe" fill-opacity="0.62"/><rect x="11" y="44" width="1" height="2" fill="#9cdcfe" fill-opacity="0.5"/><rect x="12" y="44" width="1" height="2" fill="#9cdcfe" fill-opacity="0.5"/><rect x="13" y="44" width="1" height="2" fill="#9cdcfe" fill-opacity="0.62"/><rect x="14" y="44" width="1" height="2" fill="#9cdcfe" fill-opacity="0.5"/><rect x="15" y="44" width="1" height="2" fill="#9cdcfe" fill-opacity="0.5"/><rect x="16" y="44" width="1" height="2" fill="#9cdcfe" fill-opacity="0.5"/><rect x="17" y="44" width="1" height="2" fill="#da70d6" fill-opacity="0.35"/><rect x="19" y="44" width="1" height="2" fill="#da70d6" fill-opacity="0.35"/><rect x="4" y="46" width="1" height="2" fill="#c586c0" fill-opacity="0.5"/><rect x="5" y="46" width="1" height="2" fill="#c586c0" fill-opacity="0.5"/><rect x="6" y="46" width="1" height="2" fill="#c586c0" fill-opacity="0.62"/><rect x="7" y="46" width="1" height="2" fill="#c586c0" fill-opacity="0.5"/><rect x="8" y="46" width="1" height="2" fill="#c586c0" fill-opacity="0.5"/><rect x="9" y="46" width="1" height="2" fill="#c586c0" fill-opacity="0.5"/><rect x="11" y="46" width="1" height="2" fill="#179fff" fill-opacity="0.35"/><rect x="6" y="48" width="1" height="2" fill="#808080" fill-opacity="0.35"/><rect x="7" y="48" width="1" height="2" fill="#569cd6" fill-opacity="0.62"/><rect x="8" y="48" width="1" height="2" fill="#569cd6" fill-opacity="0.5"/><rect x="9" y="48" width="1" height="2" fill="#569cd6" fill-opacity="0.5"/><rect x="11" y="48" width="1" height="2" fill="#9cdcfe" fill-opacity="0.5"/><rect x="12" y="48" width="1" height="2" fill="#9cdcfe" fill-opacity="0.62"/><rect x="13" y="48" width="1" height="2" fill="#9cdcfe" fill-opacity="0.5"/><rect x="14" y="48" width="1" height="2" fill="#9cdcfe" fill-opacity="0.5"/><rect x="15" y="48" width="1" height="2" fill="#9cdcfe" fill-opacity="0.5"/><rect x="16" y="48" width="1" height="2" fill="#9cdcfe" fill-opacity="0.62"/><rect x="17" y="48" width="1" height="2" fill="#9cdcfe" fill-opacity="0.5"/><rect x="18" y="48" width="1" height="2" fill="#9cdcfe" fill-opacity="0.5"/><rect x="19" y="48" width="1" height="2" fill="#9cdcfe" fill-opacity="0.5"/><rect x="20" y="48" width="1" height="2" fill="#d4d4d4" fill-opacity="0.35"/><rect x="21" y="48" width="1" height="2" fill="#ce9178" fill-opacity="0.35"/><rect x="22" y="48" width="1" height="2" fill="#ce9178" fill-opacity="0.62"/><rect x="23" y="48" width="1" height="2" fill="#ce9178" fill-opacity="0.35"/><rect x="24" y="48" width="1" height="2" fill="#ce9178" fill-opacity="0.62"/><rect x="25" y="48" width="1" height="2" fill="#ce9178" fill-opacity="0.62"/><rect x="26" y="48" width="1" height="2" fill="#ce9178" fill-opacity="0.5"/><rect x="27" y="48" width="1" height="2" fill="#ce9178" fill-opacity="0.5"/><rect x="29" y="48" width="1" height="2" fill="#ce9178" fill-opacity="0.5"/><rect x="30" y="48" width="1" height="2" fill="#ce9178" fill-opacity="0.5"/><rect x="31" y="48" width="1" height="2" fill="#ce9178" fill-opacity="0.5"/><rect x="32" y="48" width="1" height="2" fill="#ce9178" fill-opacity="0.62"/><rect x="33" y="48" width="1" height="2" fill="#ce9178" fill-opacity="0.5"/><rect x="34" y="48" width="1" height="2" fill="#ce9178" fill-opacity="0.62"/><rect x="35" y="48" width="1" height="2" fill="#ce9178" fill-opacity="0.5"/><rect x="36" y="48" width="1" height="2" fill="#ce9178" fill-opacity="0.35"/><rect x="37" y="48" width="1" height="2" fill="#ce9178" fill-opacity="0.5"/><rect x="38" y="48" width="1" height="2" fill="#ce9178" fill-opacity="0.5"/><rect x="39" y="48" width="1" height="2" fill="#ce9178" fill-opacity="0.5"/><rect x="40" y="48" width="1" height="2" fill="#ce9178" fill-opacity="0.62"/><rect x="41" y="48" width="1" height="2" fill="#ce9178" fill-opacity="0.5"/><rect x="42" y="48" width="1" height="2" fill="#ce9178" fill-opacity="0.5"/><rect x="43" y="48" width="1" height="2" fill="#ce9178" fill-opacity="0.62"/><rect x="44" y="48" width="1" height="2" fill="#ce9178" fill-opacity="0.35"/><rect x="45" y="48" width="1" height="2" fill="#ce9178" fill-opacity="0.5"/><rect x="46" y="48" width="1" height="2" fill="#ce9178" fill-opacity="0.5"/><rect x="47" y="48" width="1" height="2" fill="#ce9178" fill-opacity="0.5"/><rect x="48" y="48" width="1" height="2" fill="#ce9178" fill-opacity="0.62"/><rect x="49" y="48" width="1" height="2" fill="#ce9178" fill-opacity="0.5"/><rect x="50" y="48" width="1" height="2" fill="#ce9178" fill-opacity="0.5"/><rect x="52" y="48" width="1" height="2" fill="#ce9178" fill-opacity="0.5"/><rect x="53" y="48" width="1" height="2" fill="#ce9178" fill-opacity="0.62"/><rect x="54" y="48" width="1" height="2" fill="#ce9178" fill-opacity="0.5"/><rect x="55" y="48" width="1" height="2" fill="#ce9178" fill-opacity="0.5"/><rect x="56" y="48" width="1" height="2" fill="#ce9178" fill-opacity="0.5"/><rect x="57" y="48" width="1" height="2" fill="#ce9178" fill-opacity="0.35"/><rect x="58" y="48" width="1" height="2" fill="#ce9178" fill-opacity="0.5"/><rect x="59" y="48" width="1" height="2" fill="#ce9178" fill-opacity="0.62"/><rect x="60" y="48" width="1" height="2" fill="#ce9178" fill-opacity="0.5"/><rect x="61" y="48" width="1" height="2" fill="#ce9178" fill-opacity="0.5"/><rect x="62" y="48" width="1" height="2" fill="#ce9178" fill-opacity="0.5"/><rect x="63" y="48" width="1" height="2" fill="#ce9178" fill-opacity="0.35"/><rect x="64" y="48" width="1" height="2" fill="#ce9178" fill-opacity="0.5"/><rect x="65" y="48" width="1" height="2" fill="#ce9178" fill-opacity="0.5"/><rect x="66" y="48" width="1" height="2" fill="#ce9178" fill-opacity="0.5"/><rect x="67" y="48" width="1" height="2" fill="#ce9178" fill-opacity="0.62"/><rect x="68" y="48" width="1" height="2" fill="#ce9178" fill-opacity="0.5"/><rect x="69" y="48" width="1" height="2" fill="#ce9178" fill-opacity="0.5"/><rect x="71" y="48" width="1" height="2" fill="#ce9178" fill-opacity="0.5"/><rect x="72" y="48" width="1" height="2" fill="#ce9178" fill-opacity="0.62"/><rect x="73" y="48" width="1" height="2" fill="#ce9178" fill-opacity="0.35"/><rect x="74" y="48" width="1" height="2" fill="#ce9178" fill-opacity="0.62"/><rect x="75" y="48" width="1" height="2" fill="#ce9178" fill-opacity="0.62"/><rect x="76" y="48" width="1" height="2" fill="#ce9178" fill-opacity="0.62"/><rect x="77" y="48" width="1" height="2" fill="#ce9178" fill-opacity="0.35"/><rect x="78" y="48" width="1" height="2" fill="#808080" fill-opacity="0.35"/><rect x="8" y="50" width="1" height="2" fill="#808080" fill-opacity="0.35"/><rect x="9" y="50" width="1" height="2" fill="#569cd6" fill-opacity="0.62"/><rect x="10" y="50" width="1" height="2" fill="#569cd6" fill-opacity="0.5"/><rect x="11" y="50" width="1" height="2" fill="#569cd6" fill-opacity="0.5"/><rect x="13" y="50" width="1" height="2" fill="#9cdcfe" fill-opacity="0.5"/><rect x="14" y="50" width="1" height="2" fill="#9cdcfe" fill-opacity="0.62"/><rect x="15" y="50" width="1" height="2" fill="#9cdcfe" fill-opacity="0.5"/><rect x="16" y="50" width="1" height="2" fill="#9cdcfe" fill-opacity="0.5"/><rect x="17" y="50" width="1" height="2" fill="#9cdcfe" fill-opacity="0.5"/><rect x="18" y="50" width="1" height="2" fill="#9cdcfe" fill-opacity="0.62"/><rect x="19" y="50" width="1" height="2" fill="#9cdcfe" fill-opacity="0.5"/><rect x="20" y="50" width="1" height="2" fill="#9cdcfe" fill-opacity="0.5"/><rect x="21" y="50" width="1" height="2" fill="#9cdcfe" fill-opacity="0.5"/><rect x="22" y="50" width="1" height="2" fill="#d4d4d4" fill-opacity="0.35"/><rect x="23" y="50" width="1" height="2" fill="#ce9178" fill-opacity="0.35"/><rect x="24" y="50" width="1" height="2" fill="#ce9178" fill-opacity="0.62"/><rect x="25" y="50" width="1" height="2" fill="#ce9178" fill-opacity="0.5"/><rect x="26" y="50" width="1" height="2" fill="#ce9178" fill-opacity="0.5"/><rect x="27" y="50" width="1" height="2" fill="#ce9178" fill-opacity="0.62"/><rect x="28" y="50" width="1" height="2" fill="#ce9178" fill-opacity="0.35"/><rect x="29" y="50" width="1" height="2" fill="#ce9178" fill-opacity="0.5"/><rect x="30" y="50" width="1" height="2" fill="#ce9178" fill-opacity="0.5"/><rect x="31" y="50" width="1" height="2" fill="#ce9178" fill-opacity="0.5"/><rect x="32" y="50" width="1" height="2" fill="#ce9178" fill-opacity="0.62"/><rect x="33" y="50" width="1" height="2" fill="#ce9178" fill-opacity="0.5"/><rect x="34" y="50" width="1" height="2" fill="#ce9178" fill-opacity="0.5"/><rect x="35" y="50" width="1" height="2" fill="#ce9178" fill-opacity="0.35"/><rect x="36" y="50" width="1" height="2" fill="#808080" fill-opacity="0.35"/><rect x="10" y="52" width="1" height="2" fill="#808080" fill-opacity="0.35"/><rect x="11" y="52" width="1" height="2" fill="#569cd6" fill-opacity="0.62"/><rect x="12" y="52" width="1" height="2" fill="#569cd6" fill-opacity="0.5"/><rect x="13" y="52" width="1" height="2" fill="#569cd6" fill-opacity="0.5"/><rect x="12" y="54" width="1" height="2" fill="#9cdcfe" fill-opacity="0.5"/><rect x="13" y="54" width="1" height="2" fill="#9cdcfe" fill-opacity="0.62"/><rect x="14" y="54" width="1" height="2" fill="#9cdcfe" fill-opacity="0.5"/><rect x="15" y="54" width="1" height="2" fill="#9cdcfe" fill-opacity="0.5"/><rect x="16" y="54" width="1" height="2" fill="#9cdcfe" fill-opacity="0.5"/><rect x="17" y="54" width="1" height="2" fill="#9cdcfe" fill-opacity="0.62"/><rect x="18" y="54" width="1" height="2" fill="#9cdcfe" fill-opacity="0.5"/><rect x="19" y="54" width="1" height="2" fill="#9cdcfe" fill-opacity="0.5"/><rect x="20" y="54" width="1" height="2" fill="#9cdcfe" fill-opacity="0.5"/><rect x="21" y="54" width="1" height="2" fill="#d4d4d4" fill-opacity="0.35"/><rect x="22" y="54" width="1" height="2" fill="#ce9178" fill-opacity="0.35"/><rect x="23" y="54" width="1" height="2" fill="#ce9178" fill-opacity="0.5"/><rect x="24" y="54" width="1" height="2" fill="#ce9178" fill-opacity="0.5"/><rect x="25" y="54" width="1" height="2" fill="#ce9178" fill-opacity="0.5"/><rect x="26" y="54" width="1" height="2" fill="#ce9178" fill-opacity="0.5"/><rect x="27" y="54" width="1" height="2" fill="#ce9178" fill-opacity="0.5"/><rect x="28" y="54" width="1" height="2" fill="#ce9178" fill-opacity="0.5"/><rect x="29" y="54" width="1" height="2" fill="#ce9178" fill-opacity="0.5"/><rect x="30" y="54" width="1" height="2" fill="#ce9178" fill-opacity="0.35"/><rect x="31" y="54" width="1" height="2" fill="#ce9178" fill-opacity="0.62"/><rect x="32" y="54" width="1" height="2" fill="#ce9178" fill-opacity="0.5"/><rect x="33" y="54" width="1" height="2" fill="#ce9178" fill-opacity="0.5"/><rect x="34" y="54" width="1" height="2" fill="#ce9178" fill-opacity="0.62"/><rect x="35" y="54" width="1" height="2" fill="#ce9178" fill-opacity="0.5"/><rect x="36" y="54" width="1" height="2" fill="#ce9178" fill-opacity="0.5"/><rect x="38" y="54" width="1" height="2" fill="#ce9178" fill-opacity="0.62"/><rect x="39" y="54" width="1" height="2" fill="#ce9178" fill-opacity="0.5"/><rect x="40" y="54" width="1" height="2" fill="#ce9178" fill-opacity="0.5"/><rect x="41" y="54" width="1" height="2" fill="#ce9178" fill-opacity="0.62"/><rect x="42" y="54" width="1" height="2" fill="#ce9178" fill-opacity="0.35"/><rect x="43" y="54" width="1" height="2" fill="#ce9178" fill-opacity="0.5"/><rect x="44" y="54" width="1" height="2" fill="#ce9178" fill-opacity="0.5"/><rect x="45" y="54" width="1" height="2" fill="#ce9178" fill-opacity="0.5"/><rect x="46" y="54" width="1" height="2" fill="#ce9178" fill-opacity="0.5"/><rect x="47" y="54" width="1" height="2" fill="#ce9178" fill-opacity="0.5"/><rect x="48" y="54" width="1" height="2" fill="#ce9178" fill-opacity="0.5"/><rect x="49" y="54" width="1" height="2" fill="#ce9178" fill-opacity="0.5"/><rect x="50" y="54" width="1" height="2" fill="#ce9178" fill-opacity="0.35"/><rect x="12" y="56" width="1" height="2" fill="#9cdcfe" fill-opacity="0.5"/><rect x="13" y="56" width="1" height="2" fill="#9cdcfe" fill-opacity="0.5"/><rect x="14" y="56" width="1" height="2" fill="#9cdcfe" fill-opacity="0.62"/><rect x="15" y="56" width="1" height="2" fill="#9cdcfe" fill-opacity="0.5"/><rect x="16" y="56" width="1" height="2" fill="#d4d4d4" fill-opacity="0.35"/><rect x="17" y="56" width="1" height="2" fill="#ce9178" fill-opacity="0.35"/><rect x="18" y="56" width="1" height="2" fill="#ce9178" fill-opacity="0.5"/><rect x="19" y="56" width="1" height="2" fill="#ce9178" fill-opacity="0.62"/><rect x="20" y="56" width="1" height="2" fill="#ce9178" fill-opacity="0.5"/><rect x="21" y="56" width="1" height="2" fill="#ce9178" fill-opacity="0.62"/><rect x="22" y="56" width="1" height="2" fill="#ce9178" fill-opacity="0.5"/><rect x="23" y="56" width="1" height="2" fill="#ce9178" fill-opacity="0.5"/><rect x="24" y="56" width="1" height="2" fill="#ce9178" fill-opacity="0.35"/><rect x="12" y="58" width="1" height="2" fill="#9cdcfe" fill-opacity="0.5"/><rect x="13" y="58" width="1" height="2" fill="#9cdcfe" fill-opacity="0.62"/><rect x="14" y="58" width="1" height="2" fill="#9cdcfe" fill-opacity="0.5"/><rect x="15" y="58" width="1" height="2" fill="#9cdcfe" fill-opacity="0.62"/><rect x="16" y="58" width="1" height="2" fill="#9cdcfe" fill-opacity="0.5"/><rect x="17" y="58" width="1" height="2" fill="#d4d4d4" fill-opacity="0.35"/><rect x="18" y="58" width="1" height="2" fill="#ffd700" fill-opacity="0.35"/><rect x="19" y="58" width="1" height="2" fill="#da70d6" fill-opacity="0.35"/><rect x="21" y="58" width="1" height="2" fill="#9cdcfe" fill-opacity="0.5"/><rect x="22" y="58" width="1" height="2" fill="#9cdcfe" fill-opacity="0.5"/><rect x="23" y="58" width="1" height="2" fill="#9cdcfe" fill-opacity="0.62"/><rect x="24" y="58" width="1" height="2" fill="#9cdcfe" fill-opacity="0.62"/><rect x="25" y="58" width="1" height="2" fill="#9cdcfe" fill-opacity="0.62"/><rect x="26" y="58" width="1" height="2" fill="#d4d4d4" fill-opacity="0.35"/><rect x="28" y="58" width="1" height="2" fill="#ce9178" fill-opacity="0.35"/><rect x="29" y="58" width="1" height="2" fill="#ce9178" fill-opacity="0.62"/><rect x="30" y="58" width="1" height="2" fill="#ce9178" fill-opacity="0.5"/><rect x="31" y="58" width="1" height="2" fill="#ce9178" fill-opacity="0.5"/><rect x="32" y="58" width="1" height="2" fill="#ce9178" fill-opacity="0.5"/><rect x="33" y="58" width="1" height="2" fill="#ce9178" fill-opacity="0.35"/><rect x="34" y="58" width="1" height="2" fill="#d4d4d4" fill-opacity="0.35"/><rect x="36" y="58" width="1" height="2" fill="#9cdcfe" fill-opacity="0.62"/><rect x="37" y="58" width="1" height="2" fill="#9cdcfe" fill-opacity="0.5"/><rect x="38" y="58" width="1" height="2" fill="#9cdcfe" fill-opacity="0.5"/><rect x="39" y="58" width="1" height="2" fill="#9cdcfe" fill-opacity="0.5"/><rect x="40" y="58" width="1" height="2" fill="#9cdcfe" fill-opacity="0.62"/><rect x="41" y="58" width="1" height="2" fill="#9cdcfe" fill-opacity="0.62"/><rect x="42" y="58" width="1" height="2" fill="#d4d4d4" fill-opacity="0.35"/><rect x="44" y="58" width="1" height="2" fill="#ce9178" fill-opacity="0.35"/><rect x="45" y="58" width="1" height="2" fill="#ce9178" fill-opacity="0.62"/><rect x="46" y="58" width="1" height="2" fill="#ce9178" fill-opacity="0.5"/><rect x="47" y="58" width="1" height="2" fill="#ce9178" fill-opacity="0.5"/><rect x="48" y="58" width="1" height="2" fill="#ce9178" fill-opacity="0.5"/><rect x="49" y="58" width="1" height="2" fill="#ce9178" fill-opacity="0.35"/><rect x="51" y="58" width="1" height="2" fill="#da70d6" fill-opacity="0.35"/><rect x="52" y="58" width="1" height="2" fill="#ffd700" fill-opacity="0.35"/><rect x="10" y="60" width="1" height="2" fill="#808080" fill-opacity="0.35"/><rect x="12" y="62" width="1" height="2" fill="#808080" fill-opacity="0.35"/><rect x="13" y="62" width="1" height="2" fill="#569cd6" fill-opacity="0.5"/><rect x="14" y="62" width="1" height="2" fill="#569cd6" fill-opacity="0.5"/><rect x="15" y="62" width="1" height="2" fill="#569cd6" fill-opacity="0.5"/><rect x="16" y="62" width="1" height="2" fill="#569cd6" fill-opacity="0.5"/><rect x="18" y="62" width="1" height="2" fill="#9cdcfe" fill-opacity="0.5"/><rect x="19" y="62" width="1" height="2" fill="#9cdcfe" fill-opacity="0.62"/><rect x="20" y="62" width="1" height="2" fill="#9cdcfe" fill-opacity="0.5"/><rect x="21" y="62" width="1" height="2" fill="#9cdcfe" fill-opacity="0.5"/><rect x="22" y="62" width="1" height="2" fill="#9cdcfe" fill-opacity="0.5"/><rect x="23" y="62" width="1" height="2" fill="#9cdcfe" fill-opacity="0.62"/><rect x="24" y="62" width="1" height="2" fill="#9cdcfe" fill-opacity="0.5"/><rect x="25" y="62" width="1" height="2" fill="#9cdcfe" fill-opacity="0.5"/><rect x="26" y="62" width="1" height="2" fill="#9cdcfe" fill-opacity="0.5"/><rect x="27" y="62" width="1" height="2" fill="#d4d4d4" fill-opacity="0.35"/><rect x="28" y="62" width="1" height="2" fill="#ce9178" fill-opacity="0.35"/><rect x="29" y="62" width="1" height="2" fill="#ce9178" fill-opacity="0.5"/><rect x="30" y="62" width="1" height="2" fill="#ce9178" fill-opacity="0.5"/><rect x="31" y="62" width="1" height="2" fill="#ce9178" fill-opacity="0.5"/><rect x="32" y="62" width="1" height="2" fill="#ce9178" fill-opacity="0.5"/><rect x="33" y="62" width="1" height="2" fill="#ce9178" fill-opacity="0.5"/><rect x="34" y="62" width="1" height="2" fill="#ce9178" fill-opacity="0.62"/><rect x="35" y="62" width="1" height="2" fill="#ce9178" fill-opacity="0.62"/><rect x="36" y="62" width="1" height="2" fill="#ce9178" fill-opacity="0.5"/><rect x="37" y="62" width="1" height="2" fill="#ce9178" fill-opacity="0.35"/><rect x="38" y="62" width="1" height="2" fill="#ce9178" fill-opacity="0.62"/><rect x="39" y="62" width="1" height="2" fill="#ce9178" fill-opacity="0.5"/><rect x="40" y="62" width="1" height="2" fill="#ce9178" fill-opacity="0.62"/><rect x="41" y="62" width="1" height="2" fill="#ce9178" fill-opacity="0.62"/><rect x="42" y="62" width="1" height="2" fill="#ce9178" fill-opacity="0.5"/><rect x="43" y="62" width="1" height="2" fill="#ce9178" fill-opacity="0.5"/><rect x="44" y="62" width="1" height="2" fill="#ce9178" fill-opacity="0.35"/><rect x="45" y="62" width="1" height="2" fill="#808080" fill-opacity="0.35"/><rect x="46" y="62" width="1" height="2" fill="#d4d4d4" fill-opacity="0.62"/><rect x="47" y="62" width="1" height="2" fill="#d4d4d4" fill-opacity="0.5"/><rect x="48" y="62" width="1" height="2" fill="#d4d4d4" fill-opacity="0.5"/><rect x="49" y="62" width="1" height="2" fill="#d4d4d4" fill-opacity="0.62"/><rect x="50" y="62" width="1" height="2" fill="#d4d4d4" fill-opacity="0.5"/><rect x="51" y="62" width="1" height="2" fill="#d4d4d4" fill-opacity="0.5"/><rect x="52" y="62" width="1" height="2" fill="#d4d4d4" fill-opacity="0.5"/><rect x="53" y="62" width="1" height="2" fill="#d4d4d4" fill-opacity="0.35"/><rect x="54" y="62" width="1" height="2" fill="#d4d4d4" fill-opacity="0.35"/><rect x="55" y="62" width="1" height="2" fill="#d4d4d4" fill-opacity="0.35"/><rect x="56" y="62" width="1" height="2" fill="#808080" fill-opacity="0.35"/><rect x="57" y="62" width="1" height="2" fill="#808080" fill-opacity="0.35"/><rect x="58" y="62" width="1" height="2" fill="#569cd6" fill-opacity="0.5"/><rect x="59" y="62" width="1" height="2" fill="#569cd6" fill-opacity="0.5"/><rect x="60" y="62" width="1" height="2" fill="#569cd6" fill-opacity="0.5"/><rect x="61" y="62" width="1" height="2" fill="#569cd6" fill-opacity="0.5"/><rect x="62" y="62" width="1" height="2" fill="#808080" fill-opacity="0.35"/><rect x="10" y="64" width="1" height="2" fill="#808080" fill-opacity="0.35"/><rect x="11" y="64" width="1" height="2" fill="#808080" fill-opacity="0.35"/><rect x="12" y="64" width="1" height="2" fill="#569cd6" fill-opacity="0.62"/><rect x="13" y="64" width="1" height="2" fill="#569cd6" fill-opacity="0.5"/><rect x="14" y="64" width="1" height="2" fill="#569cd6" fill-opacity="0.5"/><rect x="15" y="64" width="1" height="2" fill="#808080" fill-opacity="0.35"/><rect x="12" y="66" width="1" height="2" fill="#808080" fill-opacity="0.35"/><rect x="13" y="66" width="1" height="2" fill="#569cd6" fill-opacity="0.5"/><rect x="15" y="66" width="1" height="2" fill="#9cdcfe" fill-opacity="0.5"/><rect x="16" y="66" width="1" height="2" fill="#9cdcfe" fill-opacity="0.62"/><rect x="17" y="66" width="1" height="2" fill="#9cdcfe" fill-opacity="0.5"/><rect x="18" y="66" width="1" height="2" fill="#9cdcfe" fill-opacity="0.5"/><rect x="19" y="66" width="1" height="2" fill="#9cdcfe" fill-opacity="0.5"/><rect x="20" y="66" width="1" height="2" fill="#9cdcfe" fill-opacity="0.62"/><rect x="21" y="66" width="1" height="2" fill="#9cdcfe" fill-opacity="0.5"/><rect x="22" y="66" width="1" height="2" fill="#9cdcfe" fill-opacity="0.5"/><rect x="23" y="66" width="1" height="2" fill="#9cdcfe" fill-opacity="0.5"/><rect x="24" y="66" width="1" height="2" fill="#d4d4d4" fill-opacity="0.35"/><rect x="25" y="66" width="1" height="2" fill="#ce9178" fill-opacity="0.35"/><rect x="26" y="66" width="1" height="2" fill="#ce9178" fill-opacity="0.5"/><rect x="27" y="66" width="1" height="2" fill="#ce9178" fill-opacity="0.62"/><rect x="28" y="66" width="1" height="2" fill="#ce9178" fill-opacity="0.35"/><rect x="29" y="66" width="1" height="2" fill="#ce9178" fill-opacity="0.62"/><rect x="30" y="66" width="1" height="2" fill="#ce9178" fill-opacity="0.35"/><rect x="31" y="66" width="1" height="2" fill="#808080" fill-opacity="0.35"/><rect x="32" y="66" width="1" height="2" fill="#d4d4d4" fill-opacity="0.62"/><rect x="33" y="66" width="1" height="2" fill="#d4d4d4" fill-opacity="0.5"/><rect x="34" y="66" width="1" height="2" fill="#d4d4d4" fill-opacity="0.5"/><rect x="35" y="66" width="1" height="2" fill="#d4d4d4" fill-opacity="0.62"/><rect x="36" y="66" width="1" height="2" fill="#d4d4d4" fill-opacity="0.5"/><rect x="37" y="66" width="1" height="2" fill="#d4d4d4" fill-opacity="0.5"/><rect x="38" y="66" width="1" height="2" fill="#d4d4d4" fill-opacity="0.5"/><rect x="39" y="66" width="1" height="2" fill="#d4d4d4" fill-opacity="0.35"/><rect x="40" y="66" width="1" height="2" fill="#d4d4d4" fill-opacity="0.35"/><rect x="41" y="66" width="1" height="2" fill="#d4d4d4" fill-opacity="0.35"/><rect x="42" y="66" width="1" height="2" fill="#808080" fill-opacity="0.35"/><rect x="43" y="66" width="1" height="2" fill="#808080" fill-opacity="0.35"/><rect x="44" y="66" width="1" height="2" fill="#569cd6" fill-opacity="0.5"/><rect x="45" y="66" width="1" height="2" fill="#808080" fill-opacity="0.35"/><rect x="8" y="68" width="1" height="2" fill="#808080" fill-opacity="0.35"/><rect x="9" y="68" width="1" height="2" fill="#808080" fill-opacity="0.35"/><rect x="10" y="68" width="1" height="2" fill="#569cd6" fill-opacity="0.62"/><rect x="11" y="68" width="1" height="2" fill="#569cd6" fill-opacity="0.5"/><rect x="12" y="68" width="1" height="2" fill="#569cd6" fill-opacity="0.5"/><rect x="13" y="68" width="1" height="2" fill="#808080" fill-opacity="0.35"/><rect x="6" y="70" width="1" height="2" fill="#808080" fill-opacity="0.35"/><rect x="7" y="70" width="1" height="2" fill="#808080" fill-opacity="0.35"/><rect x="8" y="70" width="1" height="2" fill="#569cd6" fill-opacity="0.62"/><rect x="9" y="70" width="1" height="2" fill="#569cd6" fill-opacity="0.5"/><rect x="10" y="70" width="1" height="2" fill="#569cd6" fill-opacity="0.5"/><rect x="11" y="70" width="1" height="2" fill="#808080" fill-opacity="0.35"/><rect x="4" y="72" width="1" height="2" fill="#179fff" fill-opacity="0.35"/><rect x="5" y="72" width="1" height="2" fill="#d4d4d4" fill-opacity="0.35"/><rect x="2" y="74" width="1" height="2" fill="#da70d6" fill-opacity="0.35"/><rect x="2" y="76" width="1" height="2" fill="#c586c0" fill-opacity="0.5"/><rect x="3" y="76" width="1" height="2" fill="#c586c0" fill-opacity="0.5"/><rect x="4" y="76" width="1" height="2" fill="#c586c0" fill-opacity="0.62"/><rect x="5" y="76" width="1" height="2" fill="#c586c0" fill-opacity="0.5"/><rect x="6" y="76" width="1" height="2" fill="#c586c0" fill-opacity="0.5"/><rect x="7" y="76" width="1" height="2" fill="#c586c0" fill-opacity="0.5"/><rect x="9" y="76" width="1" height="2" fill="#da70d6" fill-opacity="0.35"/><rect x="4" y="78" width="1" height="2" fill="#808080" fill-opacity="0.35"/><rect x="5" y="78" width="1" height="2" fill="#808080" fill-opacity="0.35"/><rect x="6" y="80" width="1" height="2" fill="#808080" fill-opacity="0.35"/><rect x="7" y="80" width="1" height="2" fill="#4ec9b0" fill-opacity="0.62"/><rect x="8" y="80" width="1" height="2" fill="#4ec9b0" fill-opacity="0.5"/><rect x="9" y="80" width="1" height="2" fill="#4ec9b0" fill-opacity="0.5"/><rect x="10" y="80" width="1" height="2" fill="#4ec9b0" fill-opacity="0.62"/><rect x="11" y="80" width="1" height="2" fill="#4ec9b0" fill-opacity="0.5"/><rect x="12" y="80" width="1" height="2" fill="#4ec9b0" fill-opacity="0.5"/><rect x="13" y="80" width="1" height="2" fill="#4ec9b0" fill-opacity="0.5"/><rect x="14" y="80" width="1" height="2" fill="#4ec9b0" fill-opacity="0.5"/><rect x="15" y="80" width="1" height="2" fill="#4ec9b0" fill-opacity="0.5"/><rect x="8" y="82" width="1" height="2" fill="#9cdcfe" fill-opacity="0.5"/><rect x="9" y="82" width="1" height="2" fill="#9cdcfe" fill-opacity="0.62"/><rect x="10" y="82" width="1" height="2" fill="#9cdcfe" fill-opacity="0.5"/><rect x="11" y="82" width="1" height="2" fill="#9cdcfe" fill-opacity="0.5"/><rect x="12" y="82" width="1" height="2" fill="#9cdcfe" fill-opacity="0.5"/><rect x="13" y="82" width="1" height="2" fill="#9cdcfe" fill-opacity="0.62"/><rect x="14" y="82" width="1" height="2" fill="#9cdcfe" fill-opacity="0.5"/><rect x="15" y="82" width="1" height="2" fill="#9cdcfe" fill-opacity="0.5"/><rect x="16" y="82" width="1" height="2" fill="#9cdcfe" fill-opacity="0.5"/><rect x="17" y="82" width="1" height="2" fill="#d4d4d4" fill-opacity="0.35"/><rect x="18" y="82" width="1" height="2" fill="#ce9178" fill-opacity="0.35"/><rect x="19" y="82" width="1" height="2" fill="#ce9178" fill-opacity="0.62"/><rect x="20" y="82" width="1" height="2" fill="#ce9178" fill-opacity="0.35"/><rect x="21" y="82" width="1" height="2" fill="#ce9178" fill-opacity="0.62"/><rect x="22" y="82" width="1" height="2" fill="#ce9178" fill-opacity="0.62"/><rect x="23" y="82" width="1" height="2" fill="#ce9178" fill-opacity="0.5"/><rect x="24" y="82" width="1" height="2" fill="#ce9178" fill-opacity="0.5"/><rect x="26" y="82" width="1" height="2" fill="#ce9178" fill-opacity="0.5"/><rect x="27" y="82" width="1" height="2" fill="#ce9178" fill-opacity="0.62"/><rect x="28" y="82" width="1" height="2" fill="#ce9178" fill-opacity="0.5"/><rect x="29" y="82" width="1" height="2" fill="#ce9178" fill-opacity="0.5"/><rect x="30" y="82" width="1" height="2" fill="#ce9178" fill-opacity="0.5"/><rect x="31" y="82" width="1" height="2" fill="#ce9178" fill-opacity="0.35"/><rect x="32" y="82" width="1" height="2" fill="#ce9178" fill-opacity="0.5"/><rect x="33" y="82" width="1" height="2" fill="#ce9178" fill-opacity="0.62"/><rect x="34" y="82" width="1" height="2" fill="#ce9178" fill-opacity="0.5"/><rect x="35" y="82" width="1" height="2" fill="#ce9178" fill-opacity="0.5"/><rect x="36" y="82" width="1" height="2" fill="#ce9178" fill-opacity="0.5"/><rect x="37" y="82" width="1" height="2" fill="#ce9178" fill-opacity="0.35"/><rect x="38" y="82" width="1" height="2" fill="#ce9178" fill-opacity="0.5"/><rect x="39" y="82" width="1" height="2" fill="#ce9178" fill-opacity="0.5"/><rect x="40" y="82" width="1" height="2" fill="#ce9178" fill-opacity="0.5"/><rect x="41" y="82" width="1" height="2" fill="#ce9178" fill-opacity="0.62"/><rect x="42" y="82" width="1" height="2" fill="#ce9178" fill-opacity="0.5"/><rect x="43" y="82" width="1" height="2" fill="#ce9178" fill-opacity="0.5"/><rect x="45" y="82" width="1" height="2" fill="#ce9178" fill-opacity="0.5"/><rect x="46" y="82" width="1" height="2" fill="#ce9178" fill-opacity="0.5"/><rect x="47" y="82" width="1" height="2" fill="#ce9178" fill-opacity="0.5"/><rect x="48" y="82" width="1" height="2" fill="#ce9178" fill-opacity="0.62"/><rect x="49" y="82" width="1" height="2" fill="#ce9178" fill-opacity="0.5"/><rect x="50" y="82" width="1" height="2" fill="#ce9178" fill-opacity="0.62"/><rect x="51" y="82" width="1" height="2" fill="#ce9178" fill-opacity="0.5"/><rect x="52" y="82" width="1" height="2" fill="#ce9178" fill-opacity="0.35"/><rect x="53" y="82" width="1" height="2" fill="#ce9178" fill-opacity="0.5"/><rect x="54" y="82" width="1" height="2" fill="#ce9178" fill-opacity="0.5"/><rect x="55" y="82" width="1" height="2" fill="#ce9178" fill-opacity="0.5"/><rect x="56" y="82" width="1" height="2" fill="#ce9178" fill-opacity="0.62"/><rect x="57" y="82" width="1" height="2" fill="#ce9178" fill-opacity="0.5"/><rect x="58" y="82" width="1" height="2" fill="#ce9178" fill-opacity="0.5"/><rect x="59" y="82" width="1" height="2" fill="#ce9178" fill-opacity="0.62"/><rect x="60" y="82" width="1" height="2" fill="#ce9178" fill-opacity="0.35"/><rect x="61" y="82" width="1" height="2" fill="#ce9178" fill-opacity="0.5"/><rect x="62" y="82" width="1" height="2" fill="#ce9178" fill-opacity="0.5"/><rect x="63" y="82" width="1" height="2" fill="#ce9178" fill-opacity="0.5"/><rect x="64" y="82" width="1" height="2" fill="#ce9178" fill-opacity="0.62"/><rect x="65" y="82" width="1" height="2" fill="#ce9178" fill-opacity="0.5"/><rect x="66" y="82" width="1" height="2" fill="#ce9178" fill-opacity="0.5"/><rect x="67" y="82" width="1" height="2" fill="#ce9178" fill-opacity="0.35"/><rect x="8" y="84" width="1" height="2" fill="#9cdcfe" fill-opacity="0.5"/><rect x="9" y="84" width="1" height="2" fill="#9cdcfe" fill-opacity="0.62"/><rect x="10" y="84" width="1" height="2" fill="#9cdcfe" fill-opacity="0.5"/><rect x="11" y="84" width="1" height="2" fill="#9cdcfe" fill-opacity="0.62"/><rect x="12" y="84" width="1" height="2" fill="#9cdcfe" fill-opacity="0.5"/><rect x="13" y="84" width="1" height="2" fill="#d4d4d4" fill-opacity="0.35"/><rect x="14" y="84" width="1" height="2" fill="#179fff" fill-opacity="0.35"/><rect x="15" y="84" width="1" height="2" fill="#ffd700" fill-opacity="0.35"/><rect x="17" y="84" width="1" height="2" fill="#9cdcfe" fill-opacity="0.5"/><rect x="18" y="84" width="1" height="2" fill="#9cdcfe" fill-opacity="0.5"/><rect x="19" y="84" width="1" height="2" fill="#9cdcfe" fill-opacity="0.5"/><rect x="20" y="84" width="1" height="2" fill="#9cdcfe" fill-opacity="0.62"/><rect x="21" y="84" width="1" height="2" fill="#9cdcfe" fill-opacity="0.5"/><rect x="22" y="84" width="1" height="2" fill="#9cdcfe" fill-opacity="0.5"/><rect x="23" y="84" width="1" height="2" fill="#9cdcfe" fill-opacity="0.5"/><rect x="24" y="84" width="1" height="2" fill="#9cdcfe" fill-opacity="0.62"/><rect x="25" y="84" width="1" height="2" fill="#9cdcfe" fill-opacity="0.62"/><rect x="26" y="84" width="1" height="2" fill="#d4d4d4" fill-opacity="0.35"/><rect x="28" y="84" width="1" height="2" fill="#ce9178" fill-opacity="0.35"/><rect x="29" y="84" width="1" height="2" fill="#ce9178" fill-opacity="0.62"/><rect x="30" y="84" width="1" height="2" fill="#ce9178" fill-opacity="0.62"/><rect x="31" y="84" width="1" height="2" fill="#ce9178" fill-opacity="0.62"/><rect x="32" y="84" width="1" height="2" fill="#ce9178" fill-opacity="0.5"/><rect x="33" y="84" width="1" height="2" fill="#ce9178" fill-opacity="0.62"/><rect x="34" y="84" width="1" height="2" fill="#ce9178" fill-opacity="0.35"/><rect x="36" y="84" width="1" height="2" fill="#ffd700" fill-opacity="0.35"/><rect x="37" y="84" width="1" height="2" fill="#179fff" fill-opacity="0.35"/><rect x="6" y="86" width="1" height="2" fill="#808080" fill-opacity="0.35"/><rect x="8" y="88" width="1" height="2" fill="#808080" fill-opacity="0.35"/><rect x="9" y="88" width="1" height="2" fill="#4ec9b0" fill-opacity="0.62"/><rect x="10" y="88" width="1" height="2" fill="#4ec9b0" fill-opacity="0.5"/><rect x="11" y="88" width="1" height="2" fill="#4ec9b0" fill-opacity="0.5"/><rect x="12" y="88" width="1" height="2" fill="#4ec9b0" fill-opacity="0.62"/><rect x="13" y="88" width="1" height="2" fill="#4ec9b0" fill-opacity="0.5"/><rect x="14" y="88" width="1" height="2" fill="#4ec9b0" fill-opacity="0.5"/><rect x="15" y="88" width="1" height="2" fill="#808080" fill-opacity="0.35"/><rect x="10" y="90" width="1" height="2" fill="#808080" fill-opacity="0.35"/><rect x="11" y="90" width="1" height="2" fill="#4ec9b0" fill-opacity="0.62"/><rect x="12" y="90" width="1" height="2" fill="#4ec9b0" fill-opacity="0.5"/><rect x="13" y="90" width="1" height="2" fill="#4ec9b0" fill-opacity="0.62"/><rect x="14" y="90" width="1" height="2" fill="#4ec9b0" fill-opacity="0.62"/><rect x="15" y="90" width="1" height="2" fill="#4ec9b0" fill-opacity="0.62"/><rect x="16" y="90" width="1" height="2" fill="#4ec9b0" fill-opacity="0.5"/><rect x="17" y="90" width="1" height="2" fill="#4ec9b0" fill-opacity="0.5"/><rect x="18" y="90" width="1" height="2" fill="#4ec9b0" fill-opacity="0.5"/><rect x="19" y="90" width="1" height="2" fill="#4ec9b0" fill-opacity="0.5"/><rect x="20" y="90" width="1" height="2" fill="#4ec9b0" fill-opacity="0.62"/><rect x="21" y="90" width="1" height="2" fill="#4ec9b0" fill-opacity="0.5"/><rect x="22" y="90" width="1" height="2" fill="#4ec9b0" fill-opacity="0.5"/><rect x="23" y="90" width="1" height="2" fill="#808080" fill-opacity="0.35"/><rect x="12" y="92" width="1" height="2" fill="#808080" fill-opacity="0.35"/><rect x="13" y="92" width="1" height="2" fill="#4ec9b0" fill-opacity="0.62"/><rect x="14" y="92" width="1" height="2" fill="#4ec9b0" fill-opacity="0.5"/><rect x="15" y="92" width="1" height="2" fill="#4ec9b0" fill-opacity="0.5"/><rect x="16" y="92" width="1" height="2" fill="#4ec9b0" fill-opacity="0.62"/><rect x="17" y="92" width="1" height="2" fill="#4ec9b0" fill-opacity="0.5"/><rect x="18" y="92" width="1" height="2" fill="#4ec9b0" fill-opacity="0.5"/><rect x="19" y="92" width="1" height="2" fill="#808080" fill-opacity="0.35"/><rect x="14" y="94" width="1" height="2" fill="#808080" fill-opacity="0.35"/><rect x="15" y="94" width="1" height="2" fill="#4ec9b0" fill-opacity="0.62"/><rect x="16" y="94" width="1" height="2" fill="#4ec9b0" fill-opacity="0.5"/><rect x="17" y="94" width="1" height="2" fill="#4ec9b0" fill-opacity="0.5"/><rect x="18" y="94" width="1" height="2" fill="#4ec9b0" fill-opacity="0.62"/><rect x="19" y="94" width="1" height="2" fill="#4ec9b0" fill-opacity="0.5"/><rect x="21" y="94" width="1" height="2" fill="#9cdcfe" fill-opacity="0.5"/><rect x="22" y="94" width="1" height="2" fill="#9cdcfe" fill-opacity="0.5"/><rect x="23" y="94" width="1" height="2" fill="#9cdcfe" fill-opacity="0.62"/><rect x="24" y="94" width="1" height="2" fill="#9cdcfe" fill-opacity="0.62"/><rect x="25" y="94" width="1" height="2" fill="#d4d4d4" fill-opacity="0.35"/><rect x="26" y="94" width="1" height="2" fill="#ce9178" fill-opacity="0.35"/><rect x="27" y="94" width="1" height="2" fill="#ce9178" fill-opacity="0.35"/><rect x="28" y="94" width="1" height="2" fill="#ce9178" fill-opacity="0.35"/><rect x="30" y="94" width="1" height="2" fill="#9cdcfe" fill-opacity="0.5"/><rect x="31" y="94" width="1" height="2" fill="#9cdcfe" fill-opacity="0.62"/><rect x="32" y="94" width="1" height="2" fill="#9cdcfe" fill-opacity="0.5"/><rect x="33" y="94" width="1" height="2" fill="#9cdcfe" fill-opacity="0.5"/><rect x="34" y="94" width="1" height="2" fill="#9cdcfe" fill-opacity="0.5"/><rect x="35" y="94" width="1" height="2" fill="#9cdcfe" fill-opacity="0.5"/><rect x="36" y="94" width="1" height="2" fill="#9cdcfe" fill-opacity="0.62"/><rect x="37" y="94" width="1" height="2" fill="#d4d4d4" fill-opacity="0.35"/><rect x="38" y="94" width="1" height="2" fill="#179fff" fill-opacity="0.35"/><rect x="39" y="94" width="1" height="2" fill="#808080" fill-opacity="0.35"/><rect x="40" y="94" width="1" height="2" fill="#4ec9b0" fill-opacity="0.62"/><rect x="41" y="94" width="1" height="2" fill="#4ec9b0" fill-opacity="0.5"/><rect x="42" y="94" width="1" height="2" fill="#4ec9b0" fill-opacity="0.5"/><rect x="43" y="94" width="1" height="2" fill="#4ec9b0" fill-opacity="0.5"/><rect x="45" y="94" width="1" height="2" fill="#808080" fill-opacity="0.35"/><rect x="46" y="94" width="1" height="2" fill="#808080" fill-opacity="0.35"/><rect x="47" y="94" width="1" height="2" fill="#179fff" fill-opacity="0.35"/><rect x="49" y="94" width="1" height="2" fill="#808080" fill-opacity="0.35"/><rect x="50" y="94" width="1" height="2" fill="#808080" fill-opacity="0.35"/><rect x="14" y="96" width="1" height="2" fill="#808080" fill-opacity="0.35"/><rect x="15" y="96" width="1" height="2" fill="#4ec9b0" fill-opacity="0.62"/><rect x="16" y="96" width="1" height="2" fill="#4ec9b0" fill-opacity="0.5"/><rect x="17" y="96" width="1" height="2" fill="#4ec9b0" fill-opacity="0.5"/><rect x="18" y="96" width="1" height="2" fill="#4ec9b0" fill-opacity="0.62"/><rect x="19" y="96" width="1" height="2" fill="#4ec9b0" fill-opacity="0.5"/><rect x="21" y="96" width="1" height="2" fill="#9cdcfe" fill-opacity="0.5"/><rect x="22" y="96" width="1" height="2" fill="#9cdcfe" fill-opacity="0.5"/><rect x="23" y="96" width="1" height="2" fill="#9cdcfe" fill-opacity="0.62"/><rect x="24" y="96" width="1" height="2" fill="#9cdcfe" fill-opacity="0.62"/><rect x="25" y="96" width="1" height="2" fill="#d4d4d4" fill-opacity="0.35"/><rect x="26" y="96" width="1" height="2" fill="#ce9178" fill-opacity="0.35"/><rect x="27" y="96" width="1" height="2" fill="#ce9178" fill-opacity="0.35"/><rect x="28" y="96" width="1" height="2" fill="#ce9178" fill-opacity="0.62"/><rect x="29" y="96" width="1" height="2" fill="#ce9178" fill-opacity="0.35"/><rect x="31" y="96" width="1" height="2" fill="#9cdcfe" fill-opacity="0.5"/><rect x="32" y="96" width="1" height="2" fill="#9cdcfe" fill-opacity="0.62"/><rect x="33" y="96" width="1" height="2" fill="#9cdcfe" fill-opacity="0.5"/><rect x="34" y="96" width="1" height="2" fill="#9cdcfe" fill-opacity="0.5"/><rect x="35" y="96" width="1" height="2" fill="#9cdcfe" fill-opacity="0.5"/><rect x="36" y="96" width="1" height="2" fill="#9cdcfe" fill-opacity="0.5"/><rect x="37" y="96" width="1" height="2" fill="#9cdcfe" fill-opacity="0.62"/><rect x="38" y="96" width="1" height="2" fill="#d4d4d4" fill-opacity="0.35"/><rect x="39" y="96" width="1" height="2" fill="#179fff" fill-opacity="0.35"/><rect x="40" y="96" width="1" height="2" fill="#808080" fill-opacity="0.35"/><rect x="41" y="96" width="1" height="2" fill="#4ec9b0" fill-opacity="0.62"/><rect x="42" y="96" width="1" height="2" fill="#4ec9b0" fill-opacity="0.5"/><rect x="43" y="96" width="1" height="2" fill="#4ec9b0" fill-opacity="0.5"/><rect x="44" y="96" width="1" height="2" fill="#4ec9b0" fill-opacity="0.5"/><rect x="45" y="96" width="1" height="2" fill="#4ec9b0" fill-opacity="0.5"/><rect x="46" y="96" width="1" height="2" fill="#808080" fill-opacity="0.35"/><rect x="47" y="96" width="1" height="2" fill="#808080" fill-opacity="0.35"/><rect x="48" y="96" width="1" height="2" fill="#179fff" fill-opacity="0.35"/><rect x="50" y="96" width="1" height="2" fill="#808080" fill-opacity="0.35"/><rect x="51" y="96" width="1" height="2" fill="#808080" fill-opacity="0.35"/><rect x="16" y="98" width="1" height="2" fill="#808080" fill-opacity="0.35"/><rect x="17" y="98" width="1" height="2" fill="#4ec9b0" fill-opacity="0.62"/><rect x="18" y="98" width="1" height="2" fill="#4ec9b0" fill-opacity="0.5"/><rect x="19" y="98" width="1" height="2" fill="#4ec9b0" fill-opacity="0.5"/><rect x="20" y="98" width="1" height="2" fill="#4ec9b0" fill-opacity="0.62"/><rect x="21" y="98" width="1" height="2" fill="#4ec9b0" fill-opacity="0.5"/><rect x="23" y="98" width="1" height="2" fill="#9cdcfe" fill-opacity="0.5"/><rect x="24" y="98" width="1" height="2" fill="#9cdcfe" fill-opacity="0.5"/><rect x="25" y="98" width="1" height="2" fill="#9cdcfe" fill-opacity="0.62"/><rect x="26" y="98" width="1" height="2" fill="#9cdcfe" fill-opacity="0.62"/><rect x="27" y="98" width="1" height="2" fill="#d4d4d4" fill-opacity="0.35"/><rect x="28" y="98" width="1" height="2" fill="#ce9178" fill-opacity="0.35"/><rect x="29" y="98" width="1" height="2" fill="#ce9178" fill-opacity="0.35"/><rect x="30" y="98" width="1" height="2" fill="#ce9178" fill-opacity="0.62"/><rect x="31" y="98" width="1" height="2" fill="#ce9178" fill-opacity="0.5"/><rect x="32" y="98" width="1" height="2" fill="#ce9178" fill-opacity="0.5"/><rect x="33" y="98" width="1" height="2" fill="#ce9178" fill-opacity="0.62"/><rect x="34" y="98" width="1" height="2" fill="#ce9178" fill-opacity="0.62"/><rect x="35" y="98" width="1" height="2" fill="#ce9178" fill-opacity="0.5"/><rect x="36" y="98" width="1" height="2" fill="#ce9178" fill-opacity="0.5"/><rect x="37" y="98" width="1" height="2" fill="#ce9178" fill-opacity="0.5"/><rect x="38" y="98" width="1" height="2" fill="#ce9178" fill-opacity="0.62"/><rect x="39" y="98" width="1" height="2" fill="#ce9178" fill-opacity="0.35"/><rect x="41" y="98" width="1" height="2" fill="#9cdcfe" fill-opacity="0.5"/><rect x="42" y="98" width="1" height="2" fill="#9cdcfe" fill-opacity="0.62"/><rect x="43" y="98" width="1" height="2" fill="#9cdcfe" fill-opacity="0.5"/><rect x="44" y="98" width="1" height="2" fill="#9cdcfe" fill-opacity="0.5"/><rect x="45" y="98" width="1" height="2" fill="#9cdcfe" fill-opacity="0.5"/><rect x="46" y="98" width="1" height="2" fill="#9cdcfe" fill-opacity="0.5"/><rect x="47" y="98" width="1" height="2" fill="#9cdcfe" fill-opacity="0.62"/><rect x="48" y="98" width="1" height="2" fill="#d4d4d4" fill-opacity="0.35"/><rect x="49" y="98" width="1" height="2" fill="#179fff" fill-opacity="0.35"/><rect x="50" y="98" width="1" height="2" fill="#808080" fill-opacity="0.35"/><rect x="51" y="98" width="1" height="2" fill="#4ec9b0" fill-opacity="0.62"/><rect x="52" y="98" width="1" height="2" fill="#4ec9b0" fill-opacity="0.5"/><rect x="53" y="98" width="1" height="2" fill="#4ec9b0" fill-opacity="0.5"/><rect x="54" y="98" width="1" height="2" fill="#4ec9b0" fill-opacity="0.5"/><rect x="55" y="98" width="1" height="2" fill="#4ec9b0" fill-opacity="0.5"/><rect x="56" y="98" width="1" height="2" fill="#4ec9b0" fill-opacity="0.62"/><rect x="57" y="98" width="1" height="2" fill="#4ec9b0" fill-opacity="0.5"/><rect x="58" y="98" width="1" height="2" fill="#4ec9b0" fill-opacity="0.62"/><rect x="59" y="98" width="1" height="2" fill="#4ec9b0" fill-opacity="0.5"/><rect x="60" y="98" width="1" height="2" fill="#4ec9b0" fill-opacity="0.5"/><rect x="61" y="98" width="1" height="2" fill="#4ec9b0" fill-opacity="0.62"/><rect x="62" y="98" width="1" height="2" fill="#4ec9b0" fill-opacity="0.5"/><rect x="64" y="98" width="1" height="2" fill="#9cdcfe" fill-opacity="0.5"/><rect x="65" y="98" width="1" height="2" fill="#d4d4d4" fill-opacity="0.35"/><rect x="66" y="98" width="1" height="2" fill="#ce9178" fill-opacity="0.35"/><rect x="67" y="98" width="1" height="2" fill="#ce9178" fill-opacity="0.62"/><rect x="68" y="98" width="1" height="2" fill="#ce9178" fill-opacity="0.5"/><rect x="69" y="98" width="1" height="2" fill="#ce9178" fill-opacity="0.5"/><rect x="70" y="98" width="1" height="2" fill="#ce9178" fill-opacity="0.62"/><rect x="71" y="98" width="1" height="2" fill="#ce9178" fill-opacity="0.62"/><rect x="72" y="98" width="1" height="2" fill="#ce9178" fill-opacity="0.5"/><rect x="73" y="98" width="1" height="2" fill="#ce9178" fill-opacity="0.5"/><rect x="74" y="98" width="1" height="2" fill="#ce9178" fill-opacity="0.5"/><rect x="75" y="98" width="1" height="2" fill="#ce9178" fill-opacity="0.62"/><rect x="76" y="98" width="1" height="2" fill="#ce9178" fill-opacity="0.35"/><rect x="78" y="98" width="1" height="2" fill="#808080" fill-opacity="0.35"/><rect x="79" y="98" width="1" height="2" fill="#808080" fill-opacity="0.35"/><rect x="16" y="100" width="1" height="2" fill="#808080" fill-opacity="0.35"/><rect x="17" y="100" width="1" height="2" fill="#4ec9b0" fill-opacity="0.62"/><rect x="18" y="100" width="1" height="2" fill="#4ec9b0" fill-opacity="0.5"/><rect x="19" y="100" width="1" height="2" fill="#4ec9b0" fill-opacity="0.5"/><rect x="20" y="100" width="1" height="2" fill="#4ec9b0" fill-opacity="0.62"/><rect x="21" y="100" width="1" height="2" fill="#4ec9b0" fill-opacity="0.5"/><rect x="23" y="100" width="1" height="2" fill="#9cdcfe" fill-opacity="0.5"/><rect x="24" y="100" width="1" height="2" fill="#9cdcfe" fill-opacity="0.5"/><rect x="25" y="100" width="1" height="2" fill="#9cdcfe" fill-opacity="0.62"/><rect x="26" y="100" width="1" height="2" fill="#9cdcfe" fill-opacity="0.62"/><rect x="27" y="100" width="1" height="2" fill="#d4d4d4" fill-opacity="0.35"/><rect x="28" y="100" width="1" height="2" fill="#ce9178" fill-opacity="0.35"/><rect x="29" y="100" width="1" height="2" fill="#ce9178" fill-opacity="0.35"/><rect x="30" y="100" width="1" height="2" fill="#ce9178" fill-opacity="0.5"/><rect x="31" y="100" width="1" height="2" fill="#ce9178" fill-opacity="0.5"/><rect x="32" y="100" width="1" height="2" fill="#ce9178" fill-opacity="0.62"/><rect x="33" y="100" width="1" height="2" fill="#ce9178" fill-opacity="0.5"/><rect x="34" y="100" width="1" height="2" fill="#ce9178" fill-opacity="0.62"/><rect x="35" y="100" width="1" height="2" fill="#ce9178" fill-opacity="0.5"/><rect x="36" y="100" width="1" height="2" fill="#ce9178" fill-opacity="0.35"/><rect x="38" y="100" width="1" height="2" fill="#9cdcfe" fill-opacity="0.5"/><rect x="39" y="100" width="1" height="2" fill="#9cdcfe" fill-opacity="0.62"/><rect x="40" y="100" width="1" height="2" fill="#9cdcfe" fill-opacity="0.5"/><rect x="41" y="100" width="1" height="2" fill="#9cdcfe" fill-opacity="0.5"/><rect x="42" y="100" width="1" height="2" fill="#9cdcfe" fill-opacity="0.5"/><rect x="43" y="100" width="1" height="2" fill="#9cdcfe" fill-opacity="0.5"/><rect x="44" y="100" width="1" height="2" fill="#9cdcfe" fill-opacity="0.62"/><rect x="45" y="100" width="1" height="2" fill="#d4d4d4" fill-opacity="0.35"/><rect x="46" y="100" width="1" height="2" fill="#179fff" fill-opacity="0.35"/><rect x="47" y="100" width="1" height="2" fill="#808080" fill-opacity="0.35"/><rect x="48" y="100" width="1" height="2" fill="#4ec9b0" fill-opacity="0.62"/><rect x="49" y="100" width="1" height="2" fill="#4ec9b0" fill-opacity="0.5"/><rect x="50" y="100" width="1" height="2" fill="#4ec9b0" fill-opacity="0.62"/><rect x="51" y="100" width="1" height="2" fill="#4ec9b0" fill-opacity="0.5"/><rect x="52" y="100" width="1" height="2" fill="#4ec9b0" fill-opacity="0.62"/><rect x="53" y="100" width="1" height="2" fill="#4ec9b0" fill-opacity="0.5"/><rect x="55" y="100" width="1" height="2" fill="#808080" fill-opacity="0.35"/><rect x="56" y="100" width="1" height="2" fill="#808080" fill-opacity="0.35"/><rect x="57" y="100" width="1" height="2" fill="#ce9178" fill-opacity="0.35"/><rect x="58" y="100" width="1" height="2" fill="#ce9178" fill-opacity="0.35"/><rect x="59" y="100" width="1" height="2" fill="#ce9178" fill-opacity="0.5"/><rect x="60" y="100" width="1" height="2" fill="#ce9178" fill-opacity="0.5"/><rect x="61" y="100" width="1" height="2" fill="#ce9178" fill-opacity="0.5"/><rect x="62" y="100" width="1" height="2" fill="#ce9178" fill-opacity="0.62"/><rect x="63" y="100" width="1" height="2" fill="#ce9178" fill-opacity="0.5"/><rect x="64" y="100" width="1" height="2" fill="#ce9178" fill-opacity="0.62"/><rect x="65" y="100" width="1" height="2" fill="#ce9178" fill-opacity="0.5"/><rect x="66" y="100" width="1" height="2" fill="#ce9178" fill-opacity="0.35"/><rect x="68" y="100" width="1" height="2" fill="#808080" fill-opacity="0.35"/><rect x="69" y="100" width="1" height="2" fill="#808080" fill-opacity="0.35"/><rect x="16" y="102" width="1" height="2" fill="#808080" fill-opacity="0.35"/><rect x="17" y="102" width="1" height="2" fill="#4ec9b0" fill-opacity="0.62"/><rect x="18" y="102" width="1" height="2" fill="#4ec9b0" fill-opacity="0.5"/><rect x="19" y="102" width="1" height="2" fill="#4ec9b0" fill-opacity="0.5"/><rect x="20" y="102" width="1" height="2" fill="#4ec9b0" fill-opacity="0.62"/><rect x="21" y="102" width="1" height="2" fill="#4ec9b0" fill-opacity="0.5"/><rect x="23" y="102" width="1" height="2" fill="#9cdcfe" fill-opacity="0.5"/><rect x="24" y="102" width="1" height="2" fill="#9cdcfe" fill-opacity="0.5"/><rect x="25" y="102" width="1" height="2" fill="#9cdcfe" fill-opacity="0.62"/><rect x="26" y="102" width="1" height="2" fill="#9cdcfe" fill-opacity="0.62"/><rect x="27" y="102" width="1" height="2" fill="#d4d4d4" fill-opacity="0.35"/><rect x="28" y="102" width="1" height="2" fill="#ce9178" fill-opacity="0.35"/><rect x="29" y="102" width="1" height="2" fill="#ce9178" fill-opacity="0.35"/><rect x="30" y="102" width="1" height="2" fill="#ce9178" fill-opacity="0.5"/><rect x="31" y="102" width="1" height="2" fill="#ce9178" fill-opacity="0.62"/><rect x="32" y="102" width="1" height="2" fill="#ce9178" fill-opacity="0.5"/><rect x="33" y="102" width="1" height="2" fill="#ce9178" fill-opacity="0.5"/><rect x="34" y="102" width="1" height="2" fill="#ce9178" fill-opacity="0.5"/><rect x="35" y="102" width="1" height="2" fill="#ce9178" fill-opacity="0.35"/><rect x="37" y="102" width="1" height="2" fill="#9cdcfe" fill-opacity="0.5"/><rect x="38" y="102" width="1" height="2" fill="#9cdcfe" fill-opacity="0.62"/><rect x="39" y="102" width="1" height="2" fill="#9cdcfe" fill-opacity="0.5"/><rect x="40" y="102" width="1" height="2" fill="#9cdcfe" fill-opacity="0.5"/><rect x="41" y="102" width="1" height="2" fill="#9cdcfe" fill-opacity="0.5"/><rect x="42" y="102" width="1" height="2" fill="#9cdcfe" fill-opacity="0.5"/><rect x="43" y="102" width="1" height="2" fill="#9cdcfe" fill-opacity="0.62"/><rect x="44" y="102" width="1" height="2" fill="#d4d4d4" fill-opacity="0.35"/><rect x="45" y="102" width="1" height="2" fill="#179fff" fill-opacity="0.35"/><rect x="46" y="102" width="1" height="2" fill="#808080" fill-opacity="0.35"/><rect x="47" y="102" width="1" height="2" fill="#4ec9b0" fill-opacity="0.62"/><rect x="48" y="102" width="1" height="2" fill="#4ec9b0" fill-opacity="0.62"/><rect x="49" y="102" width="1" height="2" fill="#4ec9b0" fill-opacity="0.5"/><rect x="50" y="102" width="1" height="2" fill="#4ec9b0" fill-opacity="0.5"/><rect x="51" y="102" width="1" height="2" fill="#4ec9b0" fill-opacity="0.5"/><rect x="52" y="102" width="1" height="2" fill="#4ec9b0" fill-opacity="0.62"/><rect x="53" y="102" width="1" height="2" fill="#4ec9b0" fill-opacity="0.5"/><rect x="54" y="102" width="1" height="2" fill="#4ec9b0" fill-opacity="0.62"/><rect x="55" y="102" width="1" height="2" fill="#4ec9b0" fill-opacity="0.5"/><rect x="56" y="102" width="1" height="2" fill="#4ec9b0" fill-opacity="0.62"/><rect x="57" y="102" width="1" height="2" fill="#4ec9b0" fill-opacity="0.5"/><rect x="59" y="102" width="1" height="2" fill="#9cdcfe" fill-opacity="0.5"/><rect x="60" y="102" width="1" height="2" fill="#d4d4d4" fill-opacity="0.35"/><rect x="61" y="102" width="1" height="2" fill="#ce9178" fill-opacity="0.35"/><rect x="62" y="102" width="1" height="2" fill="#ce9178" fill-opacity="0.62"/><rect x="63" y="102" width="1" height="2" fill="#ce9178" fill-opacity="0.62"/><rect x="64" y="102" width="1" height="2" fill="#ce9178" fill-opacity="0.5"/><rect x="65" y="102" width="1" height="2" fill="#ce9178" fill-opacity="0.5"/><rect x="66" y="102" width="1" height="2" fill="#ce9178" fill-opacity="0.5"/><rect x="67" y="102" width="1" height="2" fill="#ce9178" fill-opacity="0.62"/><rect x="68" y="102" width="1" height="2" fill="#ce9178" fill-opacity="0.5"/><rect x="69" y="102" width="1" height="2" fill="#ce9178" fill-opacity="0.5"/><rect x="70" y="102" width="1" height="2" fill="#ce9178" fill-opacity="0.5"/><rect x="71" y="102" width="1" height="2" fill="#ce9178" fill-opacity="0.35"/><rect x="73" y="102" width="1" height="2" fill="#808080" fill-opacity="0.35"/><rect x="74" y="102" width="1" height="2" fill="#808080" fill-opacity="0.35"/><rect x="14" y="104" width="1" height="2" fill="#808080" fill-opacity="0.35"/><rect x="15" y="104" width="1" height="2" fill="#808080" fill-opacity="0.35"/><rect x="16" y="104" width="1" height="2" fill="#4ec9b0" fill-opacity="0.62"/><rect x="17" y="104" width="1" height="2" fill="#4ec9b0" fill-opacity="0.5"/><rect x="18" y="104" width="1" height="2" fill="#4ec9b0" fill-opacity="0.5"/><rect x="19" y="104" width="1" height="2" fill="#4ec9b0" fill-opacity="0.62"/><rect x="20" y="104" width="1" height="2" fill="#4ec9b0" fill-opacity="0.5"/><rect x="21" y="104" width="1" height="2" fill="#808080" fill-opacity="0.35"/><rect x="14" y="106" width="1" height="2" fill="#808080" fill-opacity="0.35"/><rect x="15" y="106" width="1" height="2" fill="#4ec9b0" fill-opacity="0.62"/><rect x="16" y="106" width="1" height="2" fill="#4ec9b0" fill-opacity="0.5"/><rect x="17" y="106" width="1" height="2" fill="#4ec9b0" fill-opacity="0.5"/><rect x="18" y="106" width="1" height="2" fill="#4ec9b0" fill-opacity="0.62"/><rect x="19" y="106" width="1" height="2" fill="#4ec9b0" fill-opacity="0.5"/><rect x="21" y="106" width="1" height="2" fill="#9cdcfe" fill-opacity="0.5"/><rect x="22" y="106" width="1" height="2" fill="#9cdcfe" fill-opacity="0.5"/><rect x="23" y="106" width="1" height="2" fill="#9cdcfe" fill-opacity="0.62"/><rect x="24" y="106" width="1" height="2" fill="#9cdcfe" fill-opacity="0.62"/><rect x="25" y="106" width="1" height="2" fill="#d4d4d4" fill-opacity="0.35"/><rect x="26" y="106" width="1" height="2" fill="#ce9178" fill-opacity="0.35"/><rect x="27" y="106" width="1" height="2" fill="#ce9178" fill-opacity="0.35"/><rect x="28" y="106" width="1" height="2" fill="#ce9178" fill-opacity="0.5"/><rect x="29" y="106" width="1" height="2" fill="#ce9178" fill-opacity="0.5"/><rect x="30" y="106" width="1" height="2" fill="#ce9178" fill-opacity="0.5"/><rect x="31" y="106" width="1" height="2" fill="#ce9178" fill-opacity="0.5"/><rect x="32" y="106" width="1" height="2" fill="#ce9178" fill-opacity="0.5"/><rect x="33" y="106" width="1" height="2" fill="#ce9178" fill-opacity="0.5"/><rect x="34" y="106" width="1" height="2" fill="#ce9178" fill-opacity="0.35"/><rect x="36" y="106" width="1" height="2" fill="#9cdcfe" fill-opacity="0.5"/><rect x="37" y="106" width="1" height="2" fill="#9cdcfe" fill-opacity="0.62"/><rect x="38" y="106" width="1" height="2" fill="#9cdcfe" fill-opacity="0.5"/><rect x="39" y="106" width="1" height="2" fill="#9cdcfe" fill-opacity="0.5"/><rect x="40" y="106" width="1" height="2" fill="#9cdcfe" fill-opacity="0.5"/><rect x="41" y="106" width="1" height="2" fill="#9cdcfe" fill-opacity="0.5"/><rect x="42" y="106" width="1" height="2" fill="#9cdcfe" fill-opacity="0.62"/><rect x="43" y="106" width="1" height="2" fill="#d4d4d4" fill-opacity="0.35"/><rect x="44" y="106" width="1" height="2" fill="#179fff" fill-opacity="0.35"/><rect x="45" y="106" width="1" height="2" fill="#808080" fill-opacity="0.35"/><rect x="46" y="106" width="1" height="2" fill="#4ec9b0" fill-opacity="0.62"/><rect x="47" y="106" width="1" height="2" fill="#4ec9b0" fill-opacity="0.5"/><rect x="48" y="106" width="1" height="2" fill="#4ec9b0" fill-opacity="0.5"/><rect x="49" y="106" width="1" height="2" fill="#4ec9b0" fill-opacity="0.5"/><rect x="50" y="106" width="1" height="2" fill="#4ec9b0" fill-opacity="0.5"/><rect x="51" y="106" width="1" height="2" fill="#4ec9b0" fill-opacity="0.5"/><rect x="52" y="106" width="1" height="2" fill="#808080" fill-opacity="0.35"/><rect x="53" y="106" width="1" height="2" fill="#808080" fill-opacity="0.35"/><rect x="55" y="106" width="1" height="2" fill="#808080" fill-opacity="0.35"/><rect x="56" y="106" width="1" height="2" fill="#808080" fill-opacity="0.35"/><rect x="14" y="108" width="1" height="2" fill="#808080" fill-opacity="0.35"/><rect x="15" y="108" width="1" height="2" fill="#4ec9b0" fill-opacity="0.62"/><rect x="16" y="108" width="1" height="2" fill="#4ec9b0" fill-opacity="0.5"/><rect x="17" y="108" width="1" height="2" fill="#4ec9b0" fill-opacity="0.5"/><rect x="18" y="108" width="1" height="2" fill="#4ec9b0" fill-opacity="0.62"/><rect x="19" y="108" width="1" height="2" fill="#4ec9b0" fill-opacity="0.5"/><rect x="21" y="108" width="1" height="2" fill="#9cdcfe" fill-opacity="0.5"/><rect x="22" y="108" width="1" height="2" fill="#9cdcfe" fill-opacity="0.5"/><rect x="23" y="108" width="1" height="2" fill="#9cdcfe" fill-opacity="0.62"/><rect x="24" y="108" width="1" height="2" fill="#9cdcfe" fill-opacity="0.62"/><rect x="25" y="108" width="1" height="2" fill="#d4d4d4" fill-opacity="0.35"/><rect x="26" y="108" width="1" height="2" fill="#ce9178" fill-opacity="0.35"/><rect x="27" y="108" width="1" height="2" fill="#ce9178" fill-opacity="0.35"/><rect x="28" y="108" width="1" height="2" fill="#ce9178" fill-opacity="0.62"/><rect x="29" y="108" width="1" height="2" fill="#ce9178" fill-opacity="0.5"/><rect x="30" y="108" width="1" height="2" fill="#ce9178" fill-opacity="0.5"/><rect x="31" y="108" width="1" height="2" fill="#ce9178" fill-opacity="0.5"/><rect x="32" y="108" width="1" height="2" fill="#ce9178" fill-opacity="0.5"/><rect x="33" y="108" width="1" height="2" fill="#ce9178" fill-opacity="0.35"/><rect x="35" y="108" width="1" height="2" fill="#9cdcfe" fill-opacity="0.5"/><rect x="36" y="108" width="1" height="2" fill="#9cdcfe" fill-opacity="0.62"/><rect x="37" y="108" width="1" height="2" fill="#9cdcfe" fill-opacity="0.5"/><rect x="38" y="108" width="1" height="2" fill="#9cdcfe" fill-opacity="0.5"/><rect x="39" y="108" width="1" height="2" fill="#9cdcfe" fill-opacity="0.5"/><rect x="40" y="108" width="1" height="2" fill="#9cdcfe" fill-opacity="0.5"/><rect x="41" y="108" width="1" height="2" fill="#9cdcfe" fill-opacity="0.62"/><rect x="42" y="108" width="1" height="2" fill="#d4d4d4" fill-opacity="0.35"/><rect x="43" y="108" width="1" height="2" fill="#179fff" fill-opacity="0.35"/><rect x="44" y="108" width="1" height="2" fill="#808080" fill-opacity="0.35"/><rect x="45" y="108" width="1" height="2" fill="#4ec9b0" fill-opacity="0.62"/><rect x="46" y="108" width="1" height="2" fill="#4ec9b0" fill-opacity="0.5"/><rect x="47" y="108" width="1" height="2" fill="#4ec9b0" fill-opacity="0.5"/><rect x="48" y="108" width="1" height="2" fill="#4ec9b0" fill-opacity="0.5"/><rect x="49" y="108" width="1" height="2" fill="#4ec9b0" fill-opacity="0.5"/><rect x="50" y="108" width="1" height="2" fill="#808080" fill-opacity="0.35"/><rect x="51" y="108" width="1" height="2" fill="#808080" fill-opacity="0.35"/><rect x="53" y="108" width="1" height="2" fill="#808080" fill-opacity="0.35"/><rect x="54" y="108" width="1" height="2" fill="#808080" fill-opacity="0.35"/><rect x="14" y="110" width="1" height="2" fill="#808080" fill-opacity="0.35"/><rect x="15" y="110" width="1" height="2" fill="#4ec9b0" fill-opacity="0.62"/><rect x="16" y="110" width="1" height="2" fill="#4ec9b0" fill-opacity="0.5"/><rect x="17" y="110" width="1" height="2" fill="#4ec9b0" fill-opacity="0.5"/><rect x="18" y="110" width="1" height="2" fill="#4ec9b0" fill-opacity="0.62"/><rect x="19" y="110" width="1" height="2" fill="#4ec9b0" fill-opacity="0.5"/><rect x="21" y="110" width="1" height="2" fill="#9cdcfe" fill-opacity="0.5"/><rect x="22" y="110" width="1" height="2" fill="#9cdcfe" fill-opacity="0.5"/><rect x="23" y="110" width="1" height="2" fill="#9cdcfe" fill-opacity="0.62"/><rect x="24" y="110" width="1" height="2" fill="#9cdcfe" fill-opacity="0.62"/><rect x="25" y="110" width="1" height="2" fill="#d4d4d4" fill-opacity="0.35"/><rect x="26" y="110" width="1" height="2" fill="#ce9178" fill-opacity="0.35"/><rect x="27" y="110" width="1" height="2" fill="#ce9178" fill-opacity="0.35"/><rect x="28" y="110" width="1" height="2" fill="#ce9178" fill-opacity="0.62"/><rect x="29" y="110" width="1" height="2" fill="#ce9178" fill-opacity="0.5"/><rect x="30" y="110" width="1" height="2" fill="#ce9178" fill-opacity="0.5"/><rect x="31" y="110" width="1" height="2" fill="#ce9178" fill-opacity="0.5"/><rect x="32" y="110" width="1" height="2" fill="#ce9178" fill-opacity="0.5"/><rect x="33" y="110" width="1" height="2" fill="#ce9178" fill-opacity="0.62"/><rect x="34" y="110" width="1" height="2" fill="#ce9178" fill-opacity="0.35"/><rect x="35" y="110" width="1" height="2" fill="#ce9178" fill-opacity="0.5"/><rect x="36" y="110" width="1" height="2" fill="#ce9178" fill-opacity="0.5"/><rect x="37" y="110" width="1" height="2" fill="#ce9178" fill-opacity="0.5"/><rect x="38" y="110" width="1" height="2" fill="#ce9178" fill-opacity="0.5"/><rect x="39" y="110" width="1" height="2" fill="#ce9178" fill-opacity="0.5"/><rect x="40" y="110" width="1" height="2" fill="#ce9178" fill-opacity="0.5"/><rect x="41" y="110" width="1" height="2" fill="#ce9178" fill-opacity="0.5"/><rect x="42" y="110" width="1" height="2" fill="#ce9178" fill-opacity="0.62"/><rect x="43" y="110" width="1" height="2" fill="#ce9178" fill-opacity="0.35"/><rect x="45" y="110" width="1" height="2" fill="#9cdcfe" fill-opacity="0.5"/><rect x="46" y="110" width="1" height="2" fill="#9cdcfe" fill-opacity="0.62"/><rect x="47" y="110" width="1" height="2" fill="#9cdcfe" fill-opacity="0.5"/><rect x="48" y="110" width="1" height="2" fill="#9cdcfe" fill-opacity="0.5"/><rect x="49" y="110" width="1" height="2" fill="#9cdcfe" fill-opacity="0.5"/><rect x="50" y="110" width="1" height="2" fill="#9cdcfe" fill-opacity="0.5"/><rect x="51" y="110" width="1" height="2" fill="#9cdcfe" fill-opacity="0.62"/><rect x="52" y="110" width="1" height="2" fill="#d4d4d4" fill-opacity="0.35"/><rect x="53" y="110" width="1" height="2" fill="#179fff" fill-opacity="0.35"/><rect x="54" y="110" width="1" height="2" fill="#808080" fill-opacity="0.35"/><rect x="55" y="110" width="1" height="2" fill="#4ec9b0" fill-opacity="0.62"/><rect x="56" y="110" width="1" height="2" fill="#4ec9b0" fill-opacity="0.5"/><rect x="57" y="110" width="1" height="2" fill="#4ec9b0" fill-opacity="0.5"/><rect x="58" y="110" width="1" height="2" fill="#4ec9b0" fill-opacity="0.5"/><rect x="59" y="110" width="1" height="2" fill="#4ec9b0" fill-opacity="0.5"/><rect x="60" y="110" width="1" height="2" fill="#4ec9b0" fill-opacity="0.62"/><rect x="61" y="110" width="1" height="2" fill="#4ec9b0" fill-opacity="0.62"/><rect x="62" y="110" width="1" height="2" fill="#4ec9b0" fill-opacity="0.5"/><rect x="63" y="110" width="1" height="2" fill="#4ec9b0" fill-opacity="0.5"/><rect x="64" y="110" width="1" height="2" fill="#4ec9b0" fill-opacity="0.5"/><rect x="65" y="110" width="1" height="2" fill="#4ec9b0" fill-opacity="0.5"/><rect x="66" y="110" width="1" height="2" fill="#4ec9b0" fill-opacity="0.5"/><rect x="67" y="110" width="1" height="2" fill="#4ec9b0" fill-opacity="0.5"/><rect x="68" y="110" width="1" height="2" fill="#4ec9b0" fill-opacity="0.62"/><rect x="70" y="110" width="1" height="2" fill="#808080" fill-opacity="0.35"/><rect x="71" y="110" width="1" height="2" fill="#808080" fill-opacity="0.35"/><rect x="73" y="110" width="1" height="2" fill="#808080" fill-opacity="0.35"/><rect x="74" y="110" width="1" height="2" fill="#808080" fill-opacity="0.35"/><rect x="14" y="112" width="1" height="2" fill="#808080" fill-opacity="0.35"/><rect x="15" y="112" width="1" height="2" fill="#4ec9b0" fill-opacity="0.62"/><rect x="16" y="112" width="1" height="2" fill="#4ec9b0" fill-opacity="0.5"/><rect x="17" y="112" width="1" height="2" fill="#4ec9b0" fill-opacity="0.5"/><rect x="18" y="112" width="1" height="2" fill="#4ec9b0" fill-opacity="0.62"/><rect x="19" y="112" width="1" height="2" fill="#4ec9b0" fill-opacity="0.5"/><rect x="21" y="112" width="1" height="2" fill="#9cdcfe" fill-opacity="0.5"/><rect x="22" y="112" width="1" height="2" fill="#9cdcfe" fill-opacity="0.5"/><rect x="23" y="112" width="1" height="2" fill="#9cdcfe" fill-opacity="0.62"/><rect x="24" y="112" width="1" height="2" fill="#9cdcfe" fill-opacity="0.62"/><rect x="25" y="112" width="1" height="2" fill="#d4d4d4" fill-opacity="0.35"/><rect x="26" y="112" width="1" height="2" fill="#ce9178" fill-opacity="0.35"/><rect x="27" y="112" width="1" height="2" fill="#ce9178" fill-opacity="0.35"/><rect x="28" y="112" width="1" height="2" fill="#ce9178" fill-opacity="0.5"/><rect x="29" y="112" width="1" height="2" fill="#ce9178" fill-opacity="0.5"/><rect x="30" y="112" width="1" height="2" fill="#ce9178" fill-opacity="0.5"/><rect x="31" y="112" width="1" height="2" fill="#ce9178" fill-opacity="0.5"/><rect x="32" y="112" width="1" height="2" fill="#ce9178" fill-opacity="0.62"/><rect x="33" y="112" width="1" height="2" fill="#ce9178" fill-opacity="0.5"/><rect x="34" y="112" width="1" height="2" fill="#ce9178" fill-opacity="0.35"/><rect x="36" y="112" width="1" height="2" fill="#9cdcfe" fill-opacity="0.5"/><rect x="37" y="112" width="1" height="2" fill="#9cdcfe" fill-opacity="0.62"/><rect x="38" y="112" width="1" height="2" fill="#9cdcfe" fill-opacity="0.5"/><rect x="39" y="112" width="1" height="2" fill="#9cdcfe" fill-opacity="0.5"/><rect x="40" y="112" width="1" height="2" fill="#9cdcfe" fill-opacity="0.5"/><rect x="41" y="112" width="1" height="2" fill="#9cdcfe" fill-opacity="0.5"/><rect x="42" y="112" width="1" height="2" fill="#9cdcfe" fill-opacity="0.62"/><rect x="43" y="112" width="1" height="2" fill="#d4d4d4" fill-opacity="0.35"/><rect x="44" y="112" width="1" height="2" fill="#179fff" fill-opacity="0.35"/><rect x="45" y="112" width="1" height="2" fill="#808080" fill-opacity="0.35"/><rect x="46" y="112" width="1" height="2" fill="#4ec9b0" fill-opacity="0.5"/><rect x="47" y="112" width="1" height="2" fill="#4ec9b0" fill-opacity="0.5"/><rect x="48" y="112" width="1" height="2" fill="#4ec9b0" fill-opacity="0.5"/><rect x="49" y="112" width="1" height="2" fill="#4ec9b0" fill-opacity="0.5"/><rect x="50" y="112" width="1" height="2" fill="#4ec9b0" fill-opacity="0.62"/><rect x="51" y="112" width="1" height="2" fill="#4ec9b0" fill-opacity="0.5"/><rect x="52" y="112" width="1" height="2" fill="#4ec9b0" fill-opacity="0.62"/><rect x="53" y="112" width="1" height="2" fill="#4ec9b0" fill-opacity="0.5"/><rect x="54" y="112" width="1" height="2" fill="#4ec9b0" fill-opacity="0.5"/><rect x="55" y="112" width="1" height="2" fill="#4ec9b0" fill-opacity="0.5"/><rect x="56" y="112" width="1" height="2" fill="#4ec9b0" fill-opacity="0.62"/><rect x="57" y="112" width="1" height="2" fill="#4ec9b0" fill-opacity="0.5"/><rect x="59" y="112" width="1" height="2" fill="#808080" fill-opacity="0.35"/><rect x="60" y="112" width="1" height="2" fill="#808080" fill-opacity="0.35"/><rect x="62" y="112" width="1" height="2" fill="#808080" fill-opacity="0.35"/><rect x="63" y="112" width="1" height="2" fill="#808080" fill-opacity="0.35"/><rect x="12" y="114" width="1" height="2" fill="#808080" fill-opacity="0.35"/><rect x="13" y="114" width="1" height="2" fill="#808080" fill-opacity="0.35"/><rect x="14" y="114" width="1" height="2" fill="#4ec9b0" fill-opacity="0.62"/><rect x="15" y="114" width="1" height="2" fill="#4ec9b0" fill-opacity="0.5"/><rect x="16" y="114" width="1" height="2" fill="#4ec9b0" fill-opacity="0.5"/><rect x="17" y="114" width="1" height="2" fill="#4ec9b0" fill-opacity="0.62"/><rect x="18" y="114" width="1" height="2" fill="#4ec9b0" fill-opacity="0.5"/><rect x="19" y="114" width="1" height="2" fill="#4ec9b0" fill-opacity="0.5"/><rect x="20" y="114" width="1" height="2" fill="#808080" fill-opacity="0.35"/><rect x="10" y="116" width="1" height="2" fill="#808080" fill-opacity="0.35"/><rect x="11" y="116" width="1" height="2" fill="#808080" fill-opacity="0.35"/><rect x="12" y="116" width="1" height="2" fill="#4ec9b0" fill-opacity="0.62"/><rect x="13" y="116" width="1" height="2" fill="#4ec9b0" fill-opacity="0.5"/><rect x="14" y="116" width="1" height="2" fill="#4ec9b0" fill-opacity="0.62"/><rect x="15" y="116" width="1" height="2" fill="#4ec9b0" fill-opacity="0.62"/><rect x="16" y="116" width="1" height="2" fill="#4ec9b0" fill-opacity="0.62"/><rect x="17" y="116" width="1" height="2" fill="#4ec9b0" fill-opacity="0.5"/><rect x="18" y="116" width="1" height="2" fill="#4ec9b0" fill-opacity="0.5"/><rect x="19" y="116" width="1" height="2" fill="#4ec9b0" fill-opacity="0.5"/><rect x="20" y="116" width="1" height="2" fill="#4ec9b0" fill-opacity="0.5"/><rect x="21" y="116" width="1" height="2" fill="#4ec9b0" fill-opacity="0.62"/><rect x="22" y="116" width="1" height="2" fill="#4ec9b0" fill-opacity="0.5"/><rect x="23" y="116" width="1" height="2" fill="#4ec9b0" fill-opacity="0.5"/><rect x="24" y="116" width="1" height="2" fill="#808080" fill-opacity="0.35"/><rect x="8" y="118" width="1" height="2" fill="#808080" fill-opacity="0.35"/><rect x="9" y="118" width="1" height="2" fill="#808080" fill-opacity="0.35"/><rect x="10" y="118" width="1" height="2" fill="#4ec9b0" fill-opacity="0.62"/><rect x="11" y="118" width="1" height="2" fill="#4ec9b0" fill-opacity="0.5"/><rect x="12" y="118" width="1" height="2" fill="#4ec9b0" fill-opacity="0.5"/><rect x="13" y="118" width="1" height="2" fill="#4ec9b0" fill-opacity="0.62"/><rect x="14" y="118" width="1" height="2" fill="#4ec9b0" fill-opacity="0.5"/><rect x="15" y="118" width="1" height="2" fill="#4ec9b0" fill-opacity="0.5"/><rect x="16" y="118" width="1" height="2" fill="#808080" fill-opacity="0.35"/><rect x="6" y="120" width="1" height="2" fill="#808080" fill-opacity="0.35"/><rect x="7" y="120" width="1" height="2" fill="#808080" fill-opacity="0.35"/><rect x="8" y="120" width="1" height="2" fill="#4ec9b0" fill-opacity="0.62"/><rect x="9" y="120" width="1" height="2" fill="#4ec9b0" fill-opacity="0.5"/><rect x="10" y="120" width="1" height="2" fill="#4ec9b0" fill-opacity="0.5"/><rect x="11" y="120" width="1" height="2" fill="#4ec9b0" fill-opacity="0.62"/><rect x="12" y="120" width="1" height="2" fill="#4ec9b0" fill-opacity="0.5"/><rect x="13" y="120" width="1" height="2" fill="#4ec9b0" fill-opacity="0.5"/><rect x="14" y="120" width="1" height="2" fill="#4ec9b0" fill-opacity="0.5"/><rect x="15" y="120" width="1" height="2" fill="#4ec9b0" fill-opacity="0.5"/><rect x="16" y="120" width="1" height="2" fill="#4ec9b0" fill-opacity="0.5"/><rect x="17" y="120" width="1" height="2" fill="#808080" fill-opacity="0.35"/><rect x="4" y="122" width="1" height="2" fill="#808080" fill-opacity="0.35"/><rect x="5" y="122" width="1" height="2" fill="#808080" fill-opacity="0.35"/><rect x="6" y="122" width="1" height="2" fill="#808080" fill-opacity="0.35"/><rect x="2" y="124" width="1" height="2" fill="#da70d6" fill-opacity="0.35"/><rect x="3" y="124" width="1" height="2" fill="#d4d4d4" fill-opacity="0.35"/><rect x="0" y="126" width="1" height="2" fill="#da70d6" fill-opacity="0.35"/><rect x="0" y="130" width="1" height="2" fill="#c586c0" fill-opacity="0.5"/><rect x="1" y="130" width="1" height="2" fill="#c586c0" fill-opacity="0.5"/><rect x="2" y="130" width="1" height="2" fill="#c586c0" fill-opacity="0.5"/><rect x="3" y="130" width="1" height="2" fill="#c586c0" fill-opacity="0.5"/><rect x="4" y="130" width="1" height="2" fill="#c586c0" fill-opacity="0.5"/><rect x="5" y="130" width="1" height="2" fill="#c586c0" fill-opacity="0.62"/><rect x="7" y="130" width="1" height="2" fill="#c586c0" fill-opacity="0.62"/><rect x="8" y="130" width="1" height="2" fill="#c586c0" fill-opacity="0.5"/><rect x="9" y="130" width="1" height="2" fill="#c586c0" fill-opacity="0.62"/><rect x="10" y="130" width="1" height="2" fill="#c586c0" fill-opacity="0.5"/><rect x="11" y="130" width="1" height="2" fill="#c586c0" fill-opacity="0.5"/><rect x="12" y="130" width="1" height="2" fill="#c586c0" fill-opacity="0.62"/><rect x="13" y="130" width="1" height="2" fill="#c586c0" fill-opacity="0.62"/><rect x="15" y="130" width="1" height="2" fill="#dcdcaa" fill-opacity="0.62"/><rect x="16" y="130" width="1" height="2" fill="#dcdcaa" fill-opacity="0.5"/><rect x="17" y="130" width="1" height="2" fill="#dcdcaa" fill-opacity="0.5"/><rect x="18" y="130" width="1" height="2" fill="#d4d4d4" fill-opacity="0.35"/></g></svg>
<div class="a" style="left:1352px;top:92px;width:1px;height:606px;background:#141414"></div><div class="a" style="left:1352px;top:92px;width:14px;height:1px;background:#141414"></div>
<div class="a" style="left:1353px;top:171px;width:13px;height:2px;background:#a0a0a0"></div>

<!-- Activate windows -->
<div class="a" style="left:1072px;top:644px;font-size:20px;line-height:23px;color:#7a7a7a;white-space:nowrap">Activate Windows</div>
<div class="a" style="left:1073px;top:668px;font-size:15px;line-height:18px;color:#7a7a7a;white-space:nowrap">Go to Settings to activate Windows.</div>

<!-- status bar -->
<div id="status" class="a"></div>
<div class="a" style="left:0;top:699px;width:34px;height:21px;background:#0078d4"></div>
<svg class="a" style="left:10px;top:702px" width="14" height="14" viewBox="0 0 14 14"><path d="M3 5 7 9 3 13M12 1 8 5 12 9" fill="none" stroke="#fff" stroke-width="1.1"/></svg>
<svg class="a" style="left:42px;top:702px" width="14" height="14" viewBox="0 0 14 14"><g fill="none" stroke="#cccccc" stroke-width="1"><circle cx="3" cy="2.5" r="1.6"/><circle cx="3" cy="11.5" r="1.6"/><circle cx="11" cy="4.5" r="1.6"/><path d="M3 4.1v5.8M11 6.1c0 3-8 2-8 3.8"/></g></svg>
<div class="st" style="left:60px">main*</div>
<svg class="a" style="left:0;top:0" width="200" height="720"><g fill="none" stroke="#cccccc" stroke-width="1"><path d="M101.5 711.5H100.3A2.6 2.6 0 0 1 100 706.4 3.6 3.6 0 0 1 107 706.1 2.7 2.7 0 0 1 107.5 711.5H105.8"/><path d="M103.6 714.5V708.3M101.6 710.2 103.6 708.2 105.6 710.2"/></g></svg>
<svg class="a" style="left:126px;top:702px" width="14" height="14" viewBox="0 0 14 14"><g fill="none" stroke="#cccccc" stroke-width="1"><circle cx="7" cy="7" r="6"/><path d="M4.5 4.5l5 5M9.5 4.5l-5 5"/></g></svg>
<div class="st" style="left:144px">0</div>
<svg class="a" style="left:154px;top:702px" width="14" height="14" viewBox="0 0 14 14"><g fill="none" stroke="#cccccc" stroke-width="1"><path d="M7 1.5 13 12.5H1z"/><path d="M7 5.5v4M7 10.5v1"/></g></svg>
<div class="st" style="left:171px">0</div>
<svg class="a" style="left:0;top:0" width="300" height="720"><g fill="none" stroke="#cccccc" stroke-width="1.1"><path d="M194.3 709.8C196 706.8 198 705.6 200.3 705.6S204.6 706.8 206.3 709.8"/><circle cx="200.2" cy="709.4" r="1.8"/><path d="M229.3 703.4A5.9 5.9 0 0 0 229.3 715"/></g></svg>

<div class="st" style="left:241px">Analyzing 'App.jsx' and its dependencies</div>
<svg class="a" style="left:709px;top:702px" width="12" height="14" viewBox="0 0 12 14"><g fill="none" stroke="#cccccc" stroke-width="1.1"><circle cx="6" cy="7" r="3"/><path d="M6 0v4M6 10v4"/></g></svg>
<div class="st" style="left:725px">Ahmed-Saad-8 (23 hours ago)</div>
<div class="st" style="left:901px">Ln 14, Col 19</div>
<div class="st" style="left:986px;letter-spacing:-0.5px">Spaces: 2</div>
<div class="st" style="left:1051px;letter-spacing:-0.5px">UTF-8</div>
<div class="st" style="left:1098px;letter-spacing:-0.6px">LF</div>
<svg class="a" style="left:0;top:0" width="1366" height="720"><g fill="none" stroke="#cccccc" stroke-width="1.1"><path d="M1127.3 714A6 6 0 0 1 1138 704.5"/><path d="M1266 711 1268.8 714.5 1275 706.5M1270.8 714.5 1278.5 706.5"/></g>
<g fill="#cccccc"><path d="M1236.3 707.3C1235.6 706.4 1235.6 704.6 1237 703.8 1238.4 703 1240.4 703.3 1242 704.6 1243.6 703.3 1245.6 703 1247 703.8 1248.4 704.6 1248.4 706.4 1247.7 707.3 1249.2 708 1249.7 709.3 1249.7 711 1249.7 713.7 1246.5 715 1242 715S1234.3 713.7 1234.3 711C1234.3 709.3 1234.8 708 1236.3 707.3Z"/></g>
<g fill="#181818"><circle cx="1239" cy="706" r="1.3"/><circle cx="1245" cy="706" r="1.3"/><rect x="1239.8" y="709.5" width="1.1" height="2.6"/><rect x="1243.1" y="709.5" width="1.1" height="2.6"/></g>
<g fill="none" stroke="#cccccc" stroke-width="1"><path d="M1339.5 712.5H1350.5L1349 710.5V707.8A3.5 3.5 0 0 0 1341 707.8V710.5Z"/><path d="M1343.5 714.2H1346.5"/></g><circle cx="1347.5" cy="705.5" r="2.6" fill="#cccccc" stroke="#181818" stroke-width="0.8"/></svg>
<div class="st" style="left:1146px;letter-spacing:-0.55px">JavaScript JSX</div>
<div class="st" style="left:1283px">Prettier</div>

<!-- watermark -->
<div class="a" style="left:600px;top:675px;font-size:25px;line-height:30px;color:rgba(255,255,255,.33);letter-spacing:1px;white-space:nowrap;font-weight:bold">mostaql.com</div>
<svg class="a" style="left:0;top:0" width="1366" height="720" opacity=".35"><g fill="none" stroke="#fff" stroke-linecap="round"><g stroke-width="7.4"><path d="M628.75 634V669.2H745M605.75 656.75A13.3 13.3 0 0 0 629.75 667.95"/><path d="M684.8 669V657.5M699 669V659M710.5 669V659M722 669V659"/></g><circle cx="655.4" cy="657.3" r="10.8" stroke-width="6.6"/><circle cx="749.8" cy="662.7" r="11.2" stroke-width="7.6"/></g><g fill="#fff"><circle cx="649.6" cy="635" r="4.8"/><circle cx="661.25" cy="635" r="4.8"/><circle cx="678.75" cy="645" r="4.8"/><circle cx="690.4" cy="645" r="4.8"/></g></svg>
</body></html>
